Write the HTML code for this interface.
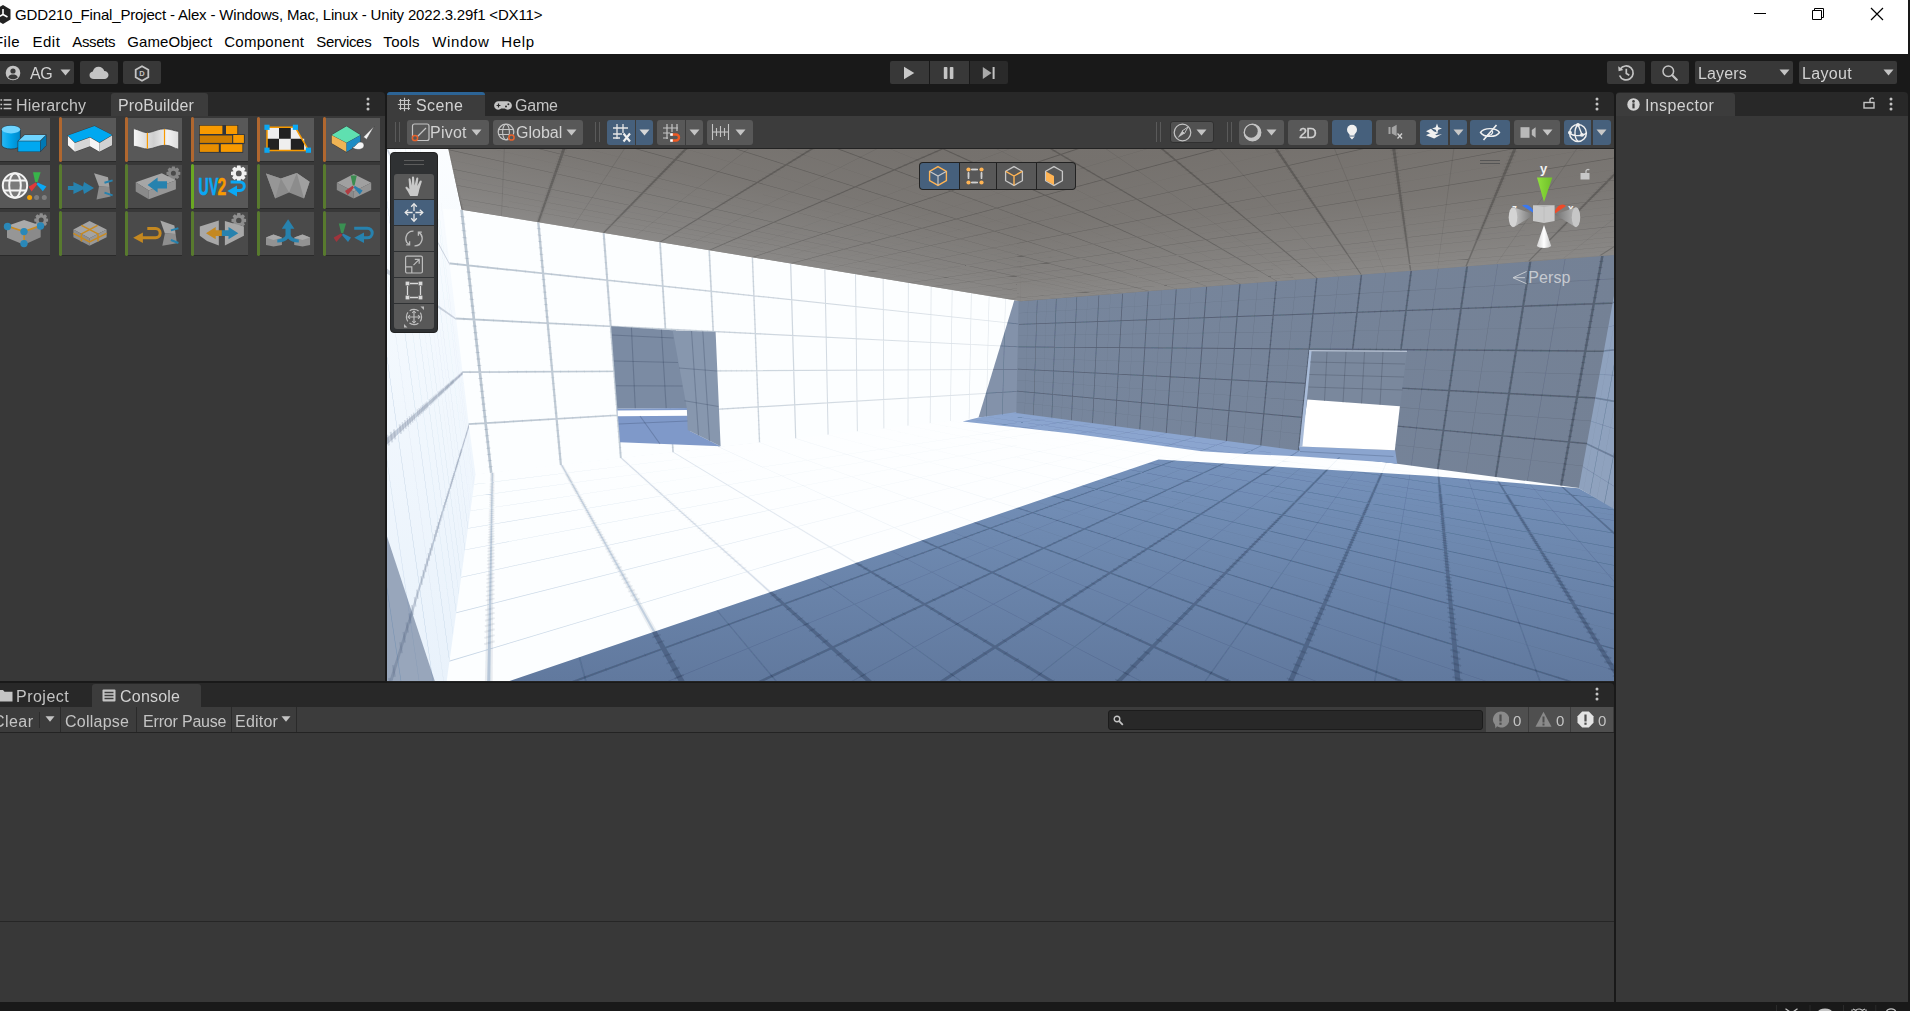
<!DOCTYPE html>
<html>
<head>
<meta charset="utf-8">
<title>Unity</title>
<style>
*{box-sizing:border-box;margin:0;padding:0}
html,body{width:1910px;height:1011px;overflow:hidden;background:#191919}
body{font-family:"Liberation Sans",sans-serif;font-size:15px;color:#d2d2d2;position:relative}
.abs{position:absolute}
.t{position:absolute;white-space:nowrap;line-height:1}
#titlebar{left:0;top:0;width:1908px;height:54px;background:#fff}
.tt{color:#000;font-size:15px}
.btn{position:absolute;background:#383838;border-radius:2px}
.tabrow{position:absolute;background:#282828}
.tab{position:absolute;background:#3c3c3c;border-radius:3px 3px 0 0}
.panel{position:absolute;background:#383838}
.sb{position:absolute;background:#585858;border-radius:3px;top:120px;height:25px}
.sb.on{background:#46607c}
.ut{color:#d2d2d2;font-size:15px;will-change:transform}
.pb{position:absolute;width:57px;height:43px;background:#585858}
.pb.off{background:#4c4c4c}
.pb i{position:absolute;left:0;top:0;width:3px;height:43px;background:#b0672f}
.pb.g i{background:#5d7a33}
.tool{position:absolute;left:4px;width:40px;height:25px;background:#585858}
#title{left:15.05px!important;top:6.90px!important;letter-spacing:-0.168px!important;font-size:15px!important}
#m0{left:-6.05px!important;top:34.20px!important;letter-spacing:0.507px!important;font-size:15px!important}
#m1{left:32.45px!important;top:34.20px!important;letter-spacing:0.510px!important;font-size:15px!important}
#m2{left:72.35px!important;top:34.20px!important;letter-spacing:-0.386px!important;font-size:15px!important}
#m3{left:127.35px!important;top:34.20px!important;letter-spacing:0.060px!important;font-size:15px!important}
#m4{left:224.15px!important;top:34.20px!important;letter-spacing:0.293px!important;font-size:15px!important}
#m5{left:316.35px!important;top:34.20px!important;letter-spacing:-0.316px!important;font-size:15px!important}
#m6{left:383.35px!important;top:34.20px!important;letter-spacing:0.314px!important;font-size:15px!important}
#m7{left:432.25px!important;top:34.20px!important;letter-spacing:0.623px!important;font-size:15px!important}
#m8{left:501.25px!important;top:34.20px!important;letter-spacing:0.685px!important;font-size:15px!important}
#ag{left:30.38px!important;top:65.86px!important;letter-spacing:-0.392px!important;font-size:16px!important}
#layers{left:1698.08px!important;top:65.96px!important;letter-spacing:0.135px!important;font-size:16px!important}
#layout{left:1801.98px!important;top:65.96px!important;letter-spacing:0.316px!important;font-size:16px!important}
#hier{left:16.48px!important;top:97.76px!important;letter-spacing:0.208px!important;font-size:16px!important}
#pbld{left:118.18px!important;top:97.76px!important;letter-spacing:0.114px!important;font-size:16px!important}
#scene{left:416.38px!important;top:97.76px!important;letter-spacing:0.353px!important;font-size:16px!important}
#game{left:514.68px!important;top:97.76px!important;letter-spacing:-0.185px!important;font-size:16px!important}
#insp{left:1644.98px!important;top:97.76px!important;letter-spacing:0.381px!important;font-size:16px!important}
#pivot{left:430.48px!important;top:125.46px!important;letter-spacing:0.232px!important;font-size:16px!important}
#global{left:516.48px!important;top:125.46px!important;letter-spacing:-0.002px!important;font-size:16px!important}
#twod{left:1299.48px!important;top:126.23px!important;letter-spacing:-0.908px!important;font-size:14.5px!important}
#proj{left:16.28px!important;top:688.66px!important;letter-spacing:0.492px!important;font-size:16px!important}
#cons{left:120.18px!important;top:688.66px!important;letter-spacing:0.220px!important;font-size:16px!important}
#clear{left:-7.12px!important;top:713.76px!important;letter-spacing:0.441px!important;font-size:16px!important}
#coll{left:65.28px!important;top:713.76px!important;letter-spacing:0.247px!important;font-size:16px!important}
#errp{left:142.98px!important;top:713.76px!important;letter-spacing:-0.185px!important;font-size:16px!important}
#edit{left:235.18px!important;top:713.76px!important;letter-spacing:0.207px!important;font-size:16px!important}
#persp{left:1528.18px!important;top:269.76px!important;letter-spacing:0.109px!important;font-size:16px!important}
</style>
</head>
<body>
<!-- TITLE + MENU -->
<div id="titlebar" class="abs"></div>
<div id="chrome-text">
<!-- unity logo (cut off at left) -->
<svg class="abs" style="left:-6px;top:4px" width="18" height="22" viewBox="0 0 18 22"><path d="M9 1 L16.5 5.5 L16.5 15.5 L9 20 L1.5 15.5 L1.5 5.5 Z" fill="#222"/><path d="M9 10.5 L9 5 M9 10.5 L13.5 13 M9 10.5 L4.5 13" stroke="#fff" stroke-width="1.6" fill="none"/></svg>
<span class="t tt" id="title" style="left:16px;top:7px">GDD210_Final_Project - Alex - Windows, Mac, Linux - Unity 2022.3.29f1 &lt;DX11&gt;</span>
<span class="t tt" style="left:-7px;top:34px" id="m0">File</span>
<span class="t tt" style="left:33px;top:34px" id="m1">Edit</span>
<span class="t tt" style="left:73px;top:34px" id="m2">Assets</span>
<span class="t tt" style="left:128px;top:34px" id="m3">GameObject</span>
<span class="t tt" style="left:225px;top:34px" id="m4">Component</span>
<span class="t tt" style="left:317px;top:34px" id="m5">Services</span>
<span class="t tt" style="left:384px;top:34px" id="m6">Tools</span>
<span class="t tt" style="left:433px;top:34px" id="m7">Window</span>
<span class="t tt" style="left:502px;top:34px" id="m8">Help</span>
<!-- window controls -->
<svg class="abs" style="left:1740px;top:0" width="168" height="30" viewBox="0 0 168 30">
<path d="M14 13.5 H26" stroke="#000" stroke-width="1"/>
<path d="M72.5 10.5 H81.5 V19.5 H72.5 Z M74.5 10.5 V8.5 H83.5 V17.5 H81.5" stroke="#000" stroke-width="1" fill="none"/>
<path d="M131 8 L143 20 M143 8 L131 20" stroke="#000" stroke-width="1.2"/>
</svg>
</div>
<!-- MAIN TOOLBAR -->
<div id="toolbar">
<div class="btn" style="left:-4px;top:61px;width:78px;height:23px"></div>
<svg class="abs" style="left:5px;top:65px" width="16" height="16" viewBox="0 0 16 16"><circle cx="8" cy="8" r="7.3" fill="#c4c4c4"/><circle cx="8" cy="6" r="2.6" fill="#383838"/><path d="M3.2 12.2 C4.2 10 6 9.6 8 9.6 C10 9.6 11.8 10 12.8 12.2 C11.5 13.6 9.8 14.2 8 14.2 C6.2 14.2 4.5 13.6 3.2 12.2Z" fill="#383838"/></svg>
<span class="t ut" style="left:31px;top:65px" id="ag">AG</span>
<svg class="abs" style="left:60px;top:69px" width="11" height="7" viewBox="0 0 11 7"><path d="M0.5 0.5 H10.5 L5.5 6.5Z" fill="#c4c4c4"/></svg>
<div class="btn" style="left:80px;top:61px;width:38px;height:23px"></div>
<svg class="abs" style="left:89px;top:66px" width="20" height="14" viewBox="0 0 20 14"><path d="M5 13 C2.2 13 0.5 11.3 0.5 9.2 C0.5 7.3 1.9 5.8 3.8 5.6 C4.3 2.7 6.7 0.7 9.6 0.7 C12.3 0.7 14.6 2.5 15.3 5 C17.7 5.1 19.5 6.8 19.5 9 C19.5 11.2 17.7 13 15.4 13 Z" fill="#c4c4c4"/></svg>
<div class="btn" style="left:123px;top:61px;width:38px;height:23px"></div>
<svg class="abs" style="left:134px;top:65px" width="16" height="17" viewBox="0 0 16 17"><path d="M8 1.2 L14.3 4.8 V12.2 L8 15.8 L1.7 12.2 V4.8 Z" fill="none" stroke="#c4c4c4" stroke-width="1.8"/><text x="8" y="11.2" font-size="7.5" font-weight="bold" text-anchor="middle" fill="#c4c4c4" font-family="Liberation Sans">D</text></svg>
<!-- play controls -->
<div class="btn" style="left:890px;top:61px;width:39px;height:23px;background:#383838;border-radius:2px 0 0 2px"></div>
<div class="btn" style="left:930px;top:61px;width:39px;height:23px;background:#383838;border-radius:0"></div>
<div class="btn" style="left:970px;top:61px;width:38px;height:23px;background:#2a2a2a;border-radius:0 2px 2px 0"></div>
<svg class="abs" style="left:903px;top:66px" width="12" height="14" viewBox="0 0 12 14"><path d="M1 0.8 L11.3 7 L1 13.2Z" fill="#c8c8c8"/></svg>
<svg class="abs" style="left:943px;top:66px" width="12" height="14" viewBox="0 0 12 14"><rect x="0.8" y="1" width="3.6" height="12" rx="0.8" fill="#c4c4c4"/><rect x="6.8" y="1" width="3.6" height="12" rx="0.8" fill="#c4c4c4"/></svg>
<svg class="abs" style="left:982px;top:66px" width="14" height="14" viewBox="0 0 14 14"><path d="M0.8 1 L9.6 7 L0.8 13Z" fill="#a8a8a8"/><rect x="10.6" y="1" width="2" height="12" fill="#c4c4c4"/></svg>
<!-- right side -->
<div class="btn" style="left:1607px;top:61px;width:38px;height:23px"></div>
<svg class="abs" style="left:1617px;top:64px" width="18" height="18" viewBox="0 0 18 18"><path d="M3.2 5.2 A7 7 0 1 1 2.6 11.5" fill="none" stroke="#c4c4c4" stroke-width="1.7"/><path d="M1.2 2.2 L1.6 7.2 L6.4 6 Z" fill="#c4c4c4"/><path d="M9.3 4.8 V9.5 L12.3 11.3" fill="none" stroke="#c4c4c4" stroke-width="1.7"/></svg>
<div class="btn" style="left:1651px;top:61px;width:38px;height:23px"></div>
<svg class="abs" style="left:1661px;top:64px" width="18" height="18" viewBox="0 0 18 18"><circle cx="7.3" cy="7.3" r="5.3" fill="none" stroke="#c4c4c4" stroke-width="1.5"/><path d="M11.3 11.3 L15.8 15.8" stroke="#c4c4c4" stroke-width="2.2" stroke-linecap="round"/></svg>
<div class="btn" style="left:1695px;top:61px;width:98px;height:23px"></div>
<span class="t ut" style="left:1699px;top:65px" id="layers">Layers</span>
<svg class="abs" style="left:1779px;top:69px" width="11" height="7" viewBox="0 0 11 7"><path d="M0.5 0.5 H10.5 L5.5 6.5Z" fill="#c4c4c4"/></svg>
<div class="btn" style="left:1799px;top:61px;width:98px;height:23px"></div>
<span class="t ut" style="left:1803px;top:65px" id="layout">Layout</span>
<svg class="abs" style="left:1883px;top:69px" width="11" height="7" viewBox="0 0 11 7"><path d="M0.5 0.5 H10.5 L5.5 6.5Z" fill="#c4c4c4"/></svg>
</div>
<!-- LEFT DOCK -->
<div id="leftdock">
<div class="tabrow" style="left:0;top:92px;width:385px;height:24px;border-radius:0 4px 0 0"></div>
<div class="panel" style="left:0;top:116px;width:385px;height:565px"></div>
<div class="tab" style="left:111px;top:93px;width:97px;height:23px"></div>
<svg class="abs" style="left:0px;top:98px" width="13" height="12" viewBox="0 0 13 12"><path d="M0.4 2H2.1 M3.6 2H11.4 M0.4 6.4H2.1 M3.6 6.4H11.4 M0.4 10.6H2.1 M3.6 10.6H11.4" stroke="#c4c4c4" stroke-width="1.5"/></svg>
<span class="t ut" style="left:17px;top:97px;color:#c4c4c4" id="hier">Hierarchy</span>
<span class="t ut" style="left:119px;top:97px" id="pbld">ProBuilder</span>
<svg class="abs" style="left:366px;top:97px" width="4" height="14" viewBox="0 0 4 14"><circle cx="2" cy="2" r="1.5" fill="#c4c4c4"/><circle cx="2" cy="7" r="1.5" fill="#c4c4c4"/><circle cx="2" cy="12" r="1.5" fill="#c4c4c4"/></svg>
<div id="pbicons"><div class="abs" style="left:-7px;top:118px;width:57px;height:43px;background:#585858;box-shadow:0 1px 0 #2a2a2a"></div>
<div class="abs" style="left:59px;top:118px;width:57px;height:43px;background:#585858;box-shadow:0 1px 0 #2a2a2a"></div>
<div class="abs" style="left:59px;top:117px;width:3px;height:45px;background:#b0672f;border-radius:1.5px"></div>
<div class="abs" style="left:125px;top:118px;width:57px;height:43px;background:#585858;box-shadow:0 1px 0 #2a2a2a"></div>
<div class="abs" style="left:125px;top:117px;width:3px;height:45px;background:#b0672f;border-radius:1.5px"></div>
<div class="abs" style="left:191px;top:118px;width:57px;height:43px;background:#585858;box-shadow:0 1px 0 #2a2a2a"></div>
<div class="abs" style="left:191px;top:117px;width:3px;height:45px;background:#b0672f;border-radius:1.5px"></div>
<div class="abs" style="left:257px;top:118px;width:57px;height:43px;background:#585858;box-shadow:0 1px 0 #2a2a2a"></div>
<div class="abs" style="left:257px;top:117px;width:3px;height:45px;background:#b0672f;border-radius:1.5px"></div>
<div class="abs" style="left:323px;top:118px;width:57px;height:43px;background:#585858;box-shadow:0 1px 0 #2a2a2a"></div>
<div class="abs" style="left:323px;top:117px;width:3px;height:45px;background:#b0672f;border-radius:1.5px"></div>
<div class="abs" style="left:-7px;top:165px;width:57px;height:43px;background:#585858;box-shadow:0 1px 0 #2a2a2a"></div>
<div class="abs" style="left:59px;top:165px;width:57px;height:43px;background:#4a4a4a;box-shadow:0 1px 0 #2a2a2a"></div>
<div class="abs" style="left:59px;top:164px;width:3px;height:45px;background:#587a2e;border-radius:1.5px"></div>
<div class="abs" style="left:125px;top:165px;width:57px;height:43px;background:#4a4a4a;box-shadow:0 1px 0 #2a2a2a"></div>
<div class="abs" style="left:125px;top:164px;width:3px;height:45px;background:#587a2e;border-radius:1.5px"></div>
<div class="abs" style="left:191px;top:165px;width:57px;height:43px;background:#585858;box-shadow:0 1px 0 #2a2a2a"></div>
<div class="abs" style="left:191px;top:164px;width:3px;height:45px;background:#6aa822;border-radius:1.5px"></div>
<div class="abs" style="left:257px;top:165px;width:57px;height:43px;background:#4a4a4a;box-shadow:0 1px 0 #2a2a2a"></div>
<div class="abs" style="left:257px;top:164px;width:3px;height:45px;background:#587a2e;border-radius:1.5px"></div>
<div class="abs" style="left:323px;top:165px;width:57px;height:43px;background:#4a4a4a;box-shadow:0 1px 0 #2a2a2a"></div>
<div class="abs" style="left:323px;top:164px;width:3px;height:45px;background:#587a2e;border-radius:1.5px"></div>
<div class="abs" style="left:-7px;top:212px;width:57px;height:43px;background:#4a4a4a;box-shadow:0 1px 0 #2a2a2a"></div>
<div class="abs" style="left:59px;top:212px;width:57px;height:43px;background:#4a4a4a;box-shadow:0 1px 0 #2a2a2a"></div>
<div class="abs" style="left:59px;top:211px;width:3px;height:45px;background:#587a2e;border-radius:1.5px"></div>
<div class="abs" style="left:125px;top:212px;width:57px;height:43px;background:#4a4a4a;box-shadow:0 1px 0 #2a2a2a"></div>
<div class="abs" style="left:125px;top:211px;width:3px;height:45px;background:#587a2e;border-radius:1.5px"></div>
<div class="abs" style="left:191px;top:212px;width:57px;height:43px;background:#4a4a4a;box-shadow:0 1px 0 #2a2a2a"></div>
<div class="abs" style="left:191px;top:211px;width:3px;height:45px;background:#587a2e;border-radius:1.5px"></div>
<div class="abs" style="left:257px;top:212px;width:57px;height:43px;background:#4a4a4a;box-shadow:0 1px 0 #2a2a2a"></div>
<div class="abs" style="left:257px;top:211px;width:3px;height:45px;background:#587a2e;border-radius:1.5px"></div>
<div class="abs" style="left:323px;top:212px;width:57px;height:43px;background:#4a4a4a;box-shadow:0 1px 0 #2a2a2a"></div>
<div class="abs" style="left:323px;top:211px;width:3px;height:45px;background:#587a2e;border-radius:1.5px"></div>
<svg class="abs" style="left:0;top:116px" width="385" height="144" viewBox="0 116 385 144"><defs>
<linearGradient id="cyl" x1="0" x2="1"><stop offset="0" stop-color="#2bb8f4"/><stop offset="0.5" stop-color="#00a4ea"/><stop offset="1" stop-color="#0086c8"/></linearGradient>
<linearGradient id="wav" x1="0" x2="1"><stop offset="0" stop-color="#f6f6f6"/><stop offset="0.45" stop-color="#cfcfcf"/><stop offset="0.75" stop-color="#f2f2f2"/><stop offset="1" stop-color="#dcdcdc"/></linearGradient>
</defs>
<path d="M1.6 129.6V145A9.3 4 0 0 0 20.4 145V129.6A9.3 4 0 0 0 1.6 129.6Z" fill="url(#cyl)" stroke="#2c3a44" stroke-width="0.8"/>
<ellipse cx="11" cy="129.6" rx="9.2" ry="3.9" fill="#6fd4ff"/>
<path d="M17.6 141.1L24.4 134.4H46.6V145.4L40.4 152H17.6Z" fill="#2c3a44"/>
<path d="M18.2 141.3H40V151.5H18.2Z" fill="#00a8f0"/><path d="M18.6 140.8L24.7 134.9H45.8L40 140.8Z" fill="#6fd4ff"/><path d="M40.5 141.2L46.2 135.3V145.2L40.5 151.2Z" fill="#0078b4"/>
<path d="M67.5 135.3L94.5 125.6L112.6 134.9V145.5L99.5 152.3L90 146.8L74.9 152.3L67.5 145.5Z" fill="#3a3a3a"/>
<path d="M67.9 135.6L94.5 126.1L112.1 135.1L99.5 142.6L90 137.1L74.9 142.6Z" fill="#00a8f0"/>
<path d="M67.9 135.9L74.9 142.9V151.7L67.9 145.2Z" fill="#f6f6f6"/><path d="M74.9 142.9L90 137.4V146.2L74.9 151.7Z" fill="#d6d6d6"/><path d="M90 137.4L99.5 142.9V151.7L90 146.2Z" fill="#f6f6f6"/><path d="M99.5 142.9L112.1 135.4V145.2L99.5 151.7Z" fill="#d2d2d2"/>
<path d="M133.4 128.6C140 130 143 133 148 132.6C154 132 158 128.6 165 128.8C171 129 174 131 178.7 131.4V149.2C174 148.6 171 145 165 145.2C158 145.4 154 148.6 148 149C143 149.2 139 146.4 133.4 146.2Z" fill="url(#wav)" stroke="#3a3a3a" stroke-width="0.7"/>
<path d="M147.4 132.8V148.8M164.5 129V145" stroke="#f89a00" stroke-width="1.2"/>
<path d="M199 125H238.2V134.3H244.8V143.7H243.2V152.7H199Z" fill="#30343a"/>
<rect x="199.8" y="125.7" width="22.6" height="8.3" fill="#f89a00"/>
<rect x="226" y="125.7" width="11.3" height="8.3" fill="#f89a00"/>
<rect x="199.8" y="135.5" width="32.3" height="7.4" fill="#cf7e00"/>
<rect x="233.2" y="135" width="10.7" height="7.9" fill="#f89a00"/>
<rect x="199.8" y="144.2" width="19.0" height="7.7" fill="#e88e00"/>
<rect x="220.8" y="144.2" width="21.6" height="7.7" fill="#f89a00"/>
<path d="M267 127.3H295.2L308.6 150.4H267Z" fill="#efefef"/>
<path d="M279 127.3H290.8V138.8H279Z M267 138.8H279V150.4H267Z M290.8 138.8H301.9L304.5 143.3V150.4H290.8Z" fill="#222"/>
<path d="M301.9 138.8L308.6 150.4H304.2V138.8Z" fill="#efefef"/>
<path d="M267 127.3H295.2L308.6 150.4H267Z" fill="none" stroke="#f89a00" stroke-width="1.5"/>
<rect x="264.4" y="124.7" width="5.2" height="5.2" fill="#0aa8f4"/>
<rect x="292.79999999999995" y="124.7" width="5.2" height="5.2" fill="#0aa8f4"/>
<rect x="264.4" y="147.6" width="5.2" height="5.2" fill="#0aa8f4"/>
<rect x="305.79999999999995" y="147.6" width="5.2" height="5.2" fill="#0aa8f4"/>
<path d="M331.2 134.8L346.5 125.8L360.9 134.8V143.8L346.5 152.5L331.2 143.5Z" fill="#3a3a3a"/>
<path d="M331.7 135L346.5 126.3L360.4 135L346.5 142.7Z" fill="#5fe0b0"/><path d="M331.7 135.3L346.5 143V151.9L331.7 143.2Z" fill="#f0b454"/><path d="M346.5 143L360.4 135.3V143.5L346.5 151.9Z" fill="#1e8cc4"/>
<path d="M374.4 126L363.4 137L366.6 139.4Z" fill="#f4f4f4" stroke="#3a3a3a" stroke-width="0.5"/><path d="M352 147.6C355 147.4 356 144 358.6 142.6C361.4 141.2 364.4 143 364 146C363.5 149.6 357 150.8 352 147.6Z" fill="#f6f6f6" stroke="#3a3a3a" stroke-width="0.5"/>
<circle cx="15" cy="185.5" r="12.6" fill="#7a7a7a"/>
<g fill="none" stroke="#f4f4f4" stroke-width="2"><circle cx="15" cy="185.5" r="12.2"/><ellipse cx="15" cy="185.5" rx="5.8" ry="12.2"/><path d="M3.8 180.5H26.2M3.8 190.5H26.2"/></g>
<path d="M33 172.2H40.6L37.6 182H35.2Z" fill="#38b44a"/><path d="M35.6 182.4L28.6 186.8L31.6 191.6L37.2 184.2Z" fill="#e03a3a"/><path d="M37.6 182.6L46.4 186.6L42.8 191.2L36.6 184.2Z" fill="#0aa8f4"/>
<circle cx="29.6" cy="197.4" r="2.5" fill="#f4a000"/><circle cx="36.6" cy="197.4" r="2.5" fill="#7e7e7e"/><circle cx="44.3" cy="197.4" r="2.5" fill="#7e7e7e"/>
<path d="M67.9 186H73.4V181.9L83 186.6L84 182L94 188L84 194L83 189.4L73.4 194V190H67.9Z" fill="#2782ae"/>
<path d="M94 173.3L108 177.3L109.4 187L99 186.4Z" fill="#a2a2a2"/><path d="M99 186.4L109.4 187L110.6 196.4L96.5 199.4Z" fill="#8c8c8c"/>
<path d="M104.5 182.8L112.6 180.4M104.5 192.6L112.6 195.4" stroke="#2782ae" stroke-width="2"/>
<path d="M180.3 171.9 L180.3 174.7 L178.1 175.2 L178.1 175.2 L179.2 177.2 L177.3 179.1 L175.3 178.0 L175.3 178.0 L174.8 180.2 L172.0 180.2 L171.5 178.0 L171.5 178.0 L169.5 179.1 L167.6 177.2 L168.7 175.2 L168.7 175.2 L166.5 174.7 L166.5 171.9 L168.7 171.4 L168.7 171.4 L167.6 169.4 L169.5 167.5 L171.5 168.6 L171.5 168.6 L172.0 166.4 L174.8 166.4 L175.3 168.6 L175.3 168.6 L177.3 167.5 L179.2 169.4 L178.1 171.4 L178.1 171.4Z M175.9 173.3A2.5 2.5 0 1 0 170.9 173.3A2.5 2.5 0 1 0 175.9 173.3Z" fill="#868686" fill-rule="evenodd"/>
<path d="M135.7 182.3L161.8 173.3L175.9 180.3L148.8 190.4Z" fill="#a6a6a6"/><path d="M135.7 182.3L148.8 190.4V199.2L135.7 191.4Z" fill="#8a8a8a"/><path d="M148.8 190.4L175.9 180.3V189.2L148.8 199.2Z" fill="#969696"/>
<path d="M147.6 185L157.6 177.6V181.2H167V188.6H157.6V192.4Z" fill="#2782ae"/>
<path d="M246.6 171.8 L246.6 175.0 L244.1 175.6 L244.1 175.6 L245.5 177.8 L243.2 180.1 L241.0 178.7 L241.0 178.7 L240.4 181.2 L237.2 181.2 L236.6 178.7 L236.6 178.7 L234.4 180.1 L232.1 177.8 L233.5 175.6 L233.5 175.6 L231.0 175.0 L231.0 171.8 L233.5 171.2 L233.5 171.2 L232.1 169.0 L234.4 166.7 L236.6 168.1 L236.6 168.1 L237.2 165.6 L240.4 165.6 L241.0 168.1 L241.0 168.1 L243.2 166.7 L245.5 169.0 L244.1 171.2 L244.1 171.2Z M241.7 173.4A2.9 2.9 0 1 0 235.9 173.4A2.9 2.9 0 1 0 241.7 173.4Z" fill="#f2f2f2" fill-rule="evenodd"/>
<text transform="translate(198.6 195) scale(0.62 1)" font-family="Liberation Sans" font-weight="bold" font-size="23" fill="#0aa8f4" stroke="#0aa8f4" stroke-width="0.7">UV</text>
<text transform="translate(217.6 195) scale(0.68 1)" font-family="Liberation Sans" font-weight="bold" font-size="23" fill="#f89a00" stroke="#f89a00" stroke-width="0.5">2</text>
<path d="M230.6 181.9H240A4.2 4.2 0 0 1 240 190.4H236" fill="none" stroke="#0aa8f4" stroke-width="3"/><path d="M227.4 191L237 185.4V196.4Z" fill="#0aa8f4"/>
<path d="M266 173.5L280.9 178.6L296.8 173L309.6 181.7L304 198.6L289.1 192.4L275.2 198.6Z" fill="#8c8c8c"/>
<path d="M280.9 178.6L296.8 173L289.1 192.4Z" fill="#9c9c9c"/><path d="M266 173.5L280.9 178.6L275.2 198.6Z" fill="#969696"/><path d="M296.8 173L309.6 181.7L304 198.6Z" fill="#a0a0a0"/>
<path d="M336.8 182.7L353.7 174L371.2 182.7L353.7 191.4Z" fill="#a0a0a0"/><path d="M336.8 182.7L353.7 191.4V198.6L336.8 189.9Z" fill="#8a8a8a"/><path d="M353.7 191.4L371.2 182.7V189.9L353.7 198.6Z" fill="#949494"/>
<path d="M350.6 175.6H356.8L354.6 185.4H352.8Z" fill="#3a8c50"/><path d="M352.6 185.8L345 191L347.8 195L354 187.4Z" fill="#b03c42"/><path d="M354.8 185.8L362.6 190.4L359.8 194.4L353.6 187.4Z" fill="#2a7eac"/>
<path d="M48.1 218.7 L48.1 221.5 L45.9 222.0 L45.9 222.0 L47.0 224.0 L45.1 225.9 L43.1 224.8 L43.1 224.8 L42.6 227.0 L39.8 227.0 L39.3 224.8 L39.3 224.8 L37.3 225.9 L35.4 224.0 L36.5 222.0 L36.5 222.0 L34.3 221.5 L34.3 218.7 L36.5 218.2 L36.5 218.2 L35.4 216.2 L37.3 214.3 L39.3 215.4 L39.3 215.4 L39.8 213.2 L42.6 213.2 L43.1 215.4 L43.1 215.4 L45.1 214.3 L47.0 216.2 L45.9 218.2 L45.9 218.2Z M43.7 220.1A2.5 2.5 0 1 0 38.7 220.1A2.5 2.5 0 1 0 43.7 220.1Z" fill="#8e8e8e" fill-rule="evenodd"/>
<path d="M7 226.1L24.1 220.1L40.7 225.6L24.1 231.6Z" fill="#aaaaaa"/><path d="M7 226.1L24.1 231.6V244.7L7 237.7Z" fill="#969696"/><path d="M24.1 231.6L40.7 225.6V237.2L24.1 244.7Z" fill="#8a8a8a"/>
<path d="M7 226.1L24.1 231.6L40.7 225.6M24.1 231.6V244" fill="none" stroke="#c88a20" stroke-width="1.6"/>
<circle cx="7.5" cy="226.5" r="3.7" fill="#2a88b8"/>
<circle cx="24" cy="231.6" r="3.7" fill="#2a88b8"/>
<circle cx="40.5" cy="226" r="3.7" fill="#2a88b8"/>
<circle cx="24" cy="243.6" r="3.7" fill="#2a88b8"/>
<path d="M73.4 229.6L89.5 221.1L106.6 229.6L89.5 238.2Z" fill="#a4a4a4"/><path d="M73.4 229.6L89.5 238.2V245.7L73.4 237.2Z" fill="#8e8e8e"/><path d="M89.5 238.2L106.6 229.6V237.2L89.5 245.7Z" fill="#989898"/>
<path d="M81.4 225.3L98 233.9V241.5M97.6 225.3L81.4 233.9V241.5M73.4 233.4L89.5 242L106.6 233.4" fill="none" stroke="#c88a20" stroke-width="1.5"/>
<path d="M147.3 228.6H155.6A4.5 4.5 0 0 1 155.6 237.7H141" fill="none" stroke="#c48820" stroke-width="3"/><path d="M133.2 237.7L142.9 232.4V243Z" fill="#c48820"/>
<path d="M160.3 220.6L174.4 225.6L175.6 234L164.9 233.6Z" fill="#a6a6a6"/><path d="M164.9 233.6L175.6 234L176.9 243.2L162.3 245.7Z" fill="#8e8e8e"/>
<path d="M170.9 230.4L178.4 228.2M170.9 240L178.4 243" stroke="#2782ae" stroke-width="2"/>
<path d="M246.1 218.9 L246.1 221.9 L243.7 222.4 L243.7 222.5 L245.0 224.5 L242.9 226.6 L240.9 225.3 L240.8 225.3 L240.3 227.7 L237.3 227.7 L236.8 225.3 L236.7 225.3 L234.7 226.6 L232.6 224.5 L233.9 222.5 L233.9 222.4 L231.5 221.9 L231.5 218.9 L233.9 218.4 L233.9 218.3 L232.6 216.3 L234.7 214.2 L236.7 215.5 L236.8 215.5 L237.3 213.1 L240.3 213.1 L240.8 215.5 L240.9 215.5 L242.9 214.2 L245.0 216.3 L243.7 218.3 L243.7 218.4Z M241.5 220.4A2.7 2.7 0 1 0 236.1 220.4A2.7 2.7 0 1 0 241.5 220.4Z" fill="#8e8e8e" fill-rule="evenodd"/>
<path d="M199.8 226.5L218.8 220.4V245.5L207 240.9L199.8 235.8Z" fill="#a8a8a8"/><path d="M224.9 220.9L243.9 226.5V235.8L224.9 245.5Z" fill="#a8a8a8"/>
<path d="M206 233.2L215.7 227V230.3H221.9V236H215.7V239.2Z" fill="#c48820"/><path d="M238.3 233.2L228.5 227V230.3H221.9V236H228.5V239.2Z" fill="#2782ae"/>
<path d="M266 237.5L273.5 234.5L281.9 237.5V245L273.5 246.5L266 245Z" fill="#929292"/><path d="M266 237.5L273.5 234.5L281.9 237.5L273.5 240Z" fill="#a8a8a8"/>
<path d="M294.2 237.5L302.5 234.5L310.1 237.5V245L302.5 246.5L294.2 245Z" fill="#929292"/><path d="M294.2 237.5L302.5 234.5L310.1 237.5L302.5 240Z" fill="#a8a8a8"/>
<path d="M288.1 219.3L294.4 228.8H290.7V235C291.5 238 295 239 298.8 239.4V242.6C294 242.4 290 241 288.1 238.4C286.2 241 282 242.4 277.3 242.6V239.4C281 239 284.8 238 285.5 235V228.8H281.8Z" fill="#2782ae"/>
<path d="M338.8 223.4H346L343.2 233H341.2Z" fill="#3a9052"/><path d="M341 233.4L333.6 237.6L336.4 242L342.4 235Z" fill="#a0343c"/><path d="M343 233.4L351 237.6L348 242L342 235Z" fill="#2a82b0"/>
<path d="M354.2 228.2H367.4A4.8 4.8 0 0 1 367.4 237.8H362" fill="none" stroke="#2782ae" stroke-width="3"/><path d="M354.2 237.8L364 232.4V243Z" fill="#2782ae"/></svg></div>
</div>
<!-- SCENE DOCK -->
<div id="scenedock">
<div class="tabrow" style="left:387px;top:92px;width:1227px;height:24px;border-radius:4px 4px 0 0"></div>
<div class="abs" style="left:387px;top:116px;width:1227px;height:33px;background:#3c3c3c;border-bottom:1px solid #232323"></div>
<div class="abs" style="left:387px;top:149px;width:1227px;height:533px;background:#232323"></div>
<svg class="abs" style="left:387px;top:149px" width="1227" height="532" viewBox="387 149 1227 532">
<defs>
<linearGradient id="gceil" x1="0" y1="149" x2="0" y2="300" gradientUnits="userSpaceOnUse"><stop offset="0" stop-color="#75716d"/><stop offset="0.5" stop-color="#7d7b7a"/><stop offset="1" stop-color="#8a8a8a"/></linearGradient>
<linearGradient id="gfloor" x1="0" y1="460" x2="0" y2="681" gradientUnits="userSpaceOnUse"><stop offset="0" stop-color="#7692bb"/><stop offset="0.35" stop-color="#6e89b0"/><stop offset="1" stop-color="#61799e"/></linearGradient>
<linearGradient id="gback" x1="1020" y1="0" x2="1614" y2="0" gradientUnits="userSpaceOnUse"><stop offset="0" stop-color="#77869d"/><stop offset="1" stop-color="#748195"/></linearGradient>
<linearGradient id="gwfade" x1="470" y1="0" x2="1020" y2="0" gradientUnits="userSpaceOnUse"><stop offset="0" stop-color="#fcfeff" stop-opacity="0"/><stop offset="0.35" stop-color="#fcfeff" stop-opacity="0.15"/><stop offset="1" stop-color="#fcfeff" stop-opacity="0.6"/></linearGradient>
<linearGradient id="gffade" x1="520" y1="690" x2="800" y2="440" gradientUnits="userSpaceOnUse"><stop offset="0" stop-color="#fdfeff" stop-opacity="0"/><stop offset="0.45" stop-color="#fdfeff" stop-opacity="0.2"/><stop offset="1" stop-color="#fdfeff" stop-opacity="0.72"/></linearGradient>
<linearGradient id="gglowL" x1="700" y1="248.7" x2="721.8" y2="115.5" gradientUnits="userSpaceOnUse"><stop offset="0" stop-color="#9c9c9c" stop-opacity="0.56"/><stop offset="0.15" stop-color="#9c9c9c" stop-opacity="0.42"/><stop offset="0.55" stop-color="#9c9c9c" stop-opacity="0.15"/><stop offset="1" stop-color="#9c9c9c" stop-opacity="0.03"/></linearGradient>
<linearGradient id="gglowR" x1="1300" y1="279.4" x2="1289.5" y2="144.8" gradientUnits="userSpaceOnUse"><stop offset="0" stop-color="#9c9c9c" stop-opacity="0.56"/><stop offset="0.15" stop-color="#9c9c9c" stop-opacity="0.42"/><stop offset="0.55" stop-color="#9c9c9c" stop-opacity="0.15"/><stop offset="1" stop-color="#9c9c9c" stop-opacity="0.03"/></linearGradient>
<linearGradient id="gnear" x1="0" y1="149" x2="0" y2="681" gradientUnits="userSpaceOnUse"><stop offset="0" stop-color="#fbfdff"/><stop offset="0.3" stop-color="#f4f9fe"/><stop offset="1" stop-color="#e9f2fb"/></linearGradient>
<filter id="soft" x="-2%" y="-2%" width="104%" height="104%"><feGaussianBlur stdDeviation="0.55"/></filter>
<clipPath id="cceil"><polygon points="448.3,149.0 1614.0,149.0 1614.0,254.9 1020.7,301.2 461.6,209.7"/></clipPath>
<clipPath id="cback"><polygon points="1019.4,301.7 1622.0,253.7 1578.8,488.2 1016.3,412.9"/></clipPath>
<clipPath id="cright"><polygon points="1622.0,253.7 1700.0,200.0 1700.0,560.0 1578.8,488.2"/></clipPath>
<clipPath id="cleft"><polygon points="443.0,209.0 461.6,209.7 1020.7,301.2 1017.2,413.4 491.2,472.9 475.5,474.6 469.0,426.0"/></clipPath>
<clipPath id="cfloor"><polygon points="446.7,681.0 475.5,474.6 491.2,472.9 1017.2,413.4 1578.8,488.2 1614.0,507.8 1614.0,681.0"/></clipPath>
<clipPath id="cnear"><polygon points="387.0,149.0 448.3,149.0 461.6,209.7 443.0,209.0 469.0,426.0 475.5,474.6 446.7,681.0 387.0,681.0"/></clipPath>
<clipPath id="cbig"><polygon points="509.6,681.0 1158.6,459.6 1427.5,475.8 1578.8,488.2 1614.0,507.8 1614.0,681.0"/></clipPath>
<clipPath id="cstrip"><polygon points="978.5,417.6 1017.2,413.4 1298.5,450.7 1299.3,446.5 1394.8,450.3 1396.5,463.6 1392.3,462.8 1301.8,456.5 1250.0,454.2 1201.3,451.3 1075.7,433.9 962.6,421.4"/></clipPath>
<clipPath id="clws"><polygon points="1014.3,300.3 1020.7,301.2 1017.2,413.4 978.5,417.6"/></clipPath>
</defs>
<rect x="387" y="149" width="1227" height="532" fill="#fcfeff"/>
<polygon points="387.0,149.0 448.3,149.0 461.6,209.7 443.0,209.0 469.0,426.0 475.5,474.6 446.7,681.0 387.0,681.0" fill="url(#gnear)" />
<polygon points="387.0,536.5 434.8,681.0 387.0,681.0" fill="#98a6bb" />
<g clip-path="url(#cnear)"><path filter="url(#soft)" d="M450.0 265.7 L356.5 95.3 L355.7 89.1 L449.8 263.8Z M456.7 320.3 L329.2 234.8 L327.9 226.5 L456.5 318.5Z M463.2 373.5 L330.5 497.3 L329.0 488.0 L463.0 371.7Z M469.5 425.1 L374.3 741.4 L373.0 733.5 L469.3 423.4Z" fill="#3d5070" fill-opacity="0.24"/></g>
<path clip-path="url(#cnear)" d="M462.6 371.2L463.0 374.4M462.3 371.5L462.7 374.7M462.0 371.8L462.4 375.0M461.7 372.0L462.1 375.3M461.4 372.3L461.8 375.6M461.0 372.6L461.4 375.9M460.7 372.8L461.1 376.2M460.0 373.4L460.4 376.8M459.7 373.7L460.1 377.2M459.3 374.0L459.7 377.5M458.9 374.3L459.4 377.9M458.6 374.6L459.0 378.2M458.2 375.0L458.6 378.6M457.8 375.3L458.2 379.0M457.0 376.0L457.4 379.7M456.6 376.3L457.0 380.1M456.1 376.7L456.6 380.5M455.7 377.1L456.2 380.9M455.2 377.4L455.7 381.4M454.8 377.8L455.3 381.8M454.3 378.2L454.8 382.2M469.0 423.5L469.3 426.6M468.7 424.2L469.1 427.3M468.5 425.0L468.9 428.1M468.2 425.8L468.6 428.9M468.0 426.5L468.4 429.7M467.7 427.3L468.1 430.6M467.5 428.2L467.9 431.4M467.0 429.9L467.4 433.2M466.7 430.7L467.1 434.1M466.4 431.6L466.8 435.0M466.1 432.5L466.5 436.0M465.8 433.5L466.2 437.0M465.5 434.4L466.0 437.9M465.2 435.4L465.7 438.9M464.6 437.4L465.0 441.0M464.3 438.4L464.7 442.1M463.9 439.5L464.4 443.2M463.6 440.6L464.0 444.3M463.2 441.7L463.7 445.5M462.9 442.8L463.4 446.7M462.5 444.0L463.0 447.9M461.8 446.4L462.2 450.4M461.4 447.7L461.9 451.7" stroke="#3d5070" stroke-opacity="0.16" stroke-width="0.5" fill="none"/>
<path clip-path="url(#cnear)" d="M453.3 379.0L453.9 383.2M452.8 379.5L453.4 383.6M452.3 379.9L452.8 384.1M451.8 380.4L452.3 384.6M451.2 380.8L451.8 385.2M450.7 381.3L451.2 385.7M450.1 381.8L450.7 386.2M448.9 382.8L449.5 387.4M448.3 383.3L448.9 388.0M447.6 383.9L448.2 388.6M447.0 384.4L447.6 389.2M446.3 385.0L446.9 389.8M445.6 385.6L446.2 390.5M444.9 386.2L445.5 391.2M443.4 387.5L444.0 392.6M442.6 388.1L443.2 393.3M441.7 388.8L442.4 394.1M440.9 389.6L441.6 394.9M440.0 390.3L440.7 395.7M439.1 391.0L439.8 396.6M438.2 391.8L438.9 397.5M436.2 393.5L437.0 399.3M435.2 394.4L436.0 400.3M434.1 395.3L434.9 401.3M433.0 396.2L433.8 402.4M431.9 397.2L432.7 403.5M430.7 398.2L431.5 404.6M429.4 399.2L430.3 405.8M461.0 449.0L461.5 453.0M460.5 450.3L461.1 454.4M460.1 451.6L460.6 455.8M459.7 453.0L460.2 457.2M459.2 454.4L459.8 458.7M458.3 457.4L458.9 461.8M457.8 458.9L458.4 463.4M457.3 460.5L457.9 465.0M456.8 462.1L457.4 466.7M456.3 463.8L456.9 468.4M455.7 465.5L456.3 470.2M455.2 467.3L455.8 472.1M454.0 471.0L454.6 475.9M453.4 473.0L454.1 477.9M452.8 475.0L453.4 480.0M452.1 477.0L452.8 482.1M451.5 479.1L452.1 484.3M450.8 481.3L451.5 486.6M450.1 483.6L450.8 489.0M448.6 488.4L449.3 493.9M447.8 490.9L448.5 496.6M447.0 493.5L447.7 499.3M446.1 496.2L446.9 502.1M445.2 499.0L446.0 505.0M444.3 501.9L445.1 508.0M443.4 505.0L444.2 511.1M441.4 511.4L442.2 517.7M440.3 514.8L441.1 521.3M439.2 518.3L440.1 524.9" stroke="#3d5070" stroke-opacity="0.16" stroke-width="1.0" fill="none"/>
<path clip-path="url(#cnear)" d="M426.8 401.5L427.7 408.3M425.4 402.7L426.3 409.6M423.9 403.9L424.8 411.0M422.4 405.2L423.3 412.4M420.8 406.6L421.8 413.9M419.1 408.0L420.1 415.5M417.3 409.4L418.4 417.2M413.6 412.6L414.7 420.7M411.5 414.3L412.7 422.6M409.4 416.1L410.6 424.6M407.2 418.0L408.4 426.8M404.8 420.0L406.0 429.0M402.3 422.1L403.6 431.4M438.0 522.0L438.9 528.8M436.8 525.8L437.7 532.8M435.5 529.9L436.5 536.9M434.2 534.1L435.2 541.3M431.4 543.1L432.4 550.6M429.9 547.9L430.9 555.6M428.3 553.0L429.4 560.9M426.6 558.3L427.7 566.4M424.8 563.9L426.0 572.2M423.0 569.9L424.2 578.4M421.0 576.1L422.2 584.8M416.7 589.7L418.0 598.9M414.4 597.1L415.8 606.6" stroke="#3d5070" stroke-opacity="0.16" stroke-width="1.5" fill="none"/>
<path clip-path="url(#cnear)" d="M399.6 424.4L401.0 433.9M393.9 429.3L395.3 439.3M390.7 431.9L392.2 442.3M387.3 434.8L388.9 445.5M383.7 437.8L385.3 448.9M411.9 605.0L413.3 614.8M409.3 613.4L410.7 623.4M406.5 622.4L408.0 632.7M403.5 632.0L405.0 642.6M400.2 642.2L401.9 653.2M393.0 665.1L394.8 676.9M389.0 678.0L390.9 690.1" stroke="#3d5070" stroke-opacity="0.16" stroke-width="2.0" fill="none"/>
<g clip-path="url(#cnear)"><path filter="url(#soft)" d="M438.7 196.8 L474.1 484.8 L474.1 484.9 L438.7 196.7Z M433.6 182.9 L472.4 496.9 L472.4 497.0 L433.5 182.7Z M427.4 166.1 L470.4 511.3 L470.4 511.5 L427.3 165.9Z M419.7 145.4 L468.0 528.6 L467.9 528.9 L419.6 145.1Z M410.0 119.3 L465.0 550.1 L464.9 550.4 L409.9 118.9Z M398.1 90.0 L461.2 577.2 L461.1 577.5 L397.9 89.5Z M387.3 91.4 L456.3 612.5 L456.2 613.0 L387.1 90.9Z M372.0 90.1 L449.5 660.6 L449.4 661.3 L371.7 89.5Z M349.6 92.3 L439.9 729.7 L439.8 730.8 L349.2 91.5Z M327.8 194.3 L410.0 739.2 L409.7 740.5 L327.2 193.7Z M328.0 614.5 L348.3 735.3 L347.6 737.3 L327.1 615.9Z" fill="#4a78a8" fill-opacity="0.42"/></g>
<g clip-path="url(#cnear)"><path filter="url(#soft)" d="M441.0 202.9 L474.8 479.5 L474.8 479.6 L441.0 202.8Z M436.3 190.1 L473.3 490.6 L473.3 490.7 L436.2 190.0Z M430.6 174.9 L471.4 503.8 L471.4 503.9 L430.6 174.7Z M423.7 156.3 L469.2 519.6 L469.2 519.7 L423.7 156.1Z M415.2 133.1 L466.5 538.8 L466.5 539.0 L415.1 132.9Z M404.2 103.4 L463.2 562.8 L463.2 563.1 L404.1 103.1Z M392.9 89.3 L458.9 593.7 L458.8 594.0 L392.8 89.0Z M380.3 90.7 L453.2 634.7 L453.1 635.1 L380.1 90.3Z M362.2 92.8 L445.2 691.9 L445.1 692.4 L362.0 92.3Z M333.4 91.4 L427.7 738.9 L427.5 739.7 L333.0 90.8Z M327.3 372.8 L385.4 740.1 L385.1 741.2 L326.8 372.9Z" fill="#4a78a8" fill-opacity="0.25"/></g>
<g clip-path="url(#cleft)"><path filter="url(#soft)" d="M368.7 194.5 L407.8 482.3 L410.8 482.0 L372.1 195.1Z M460.2 209.5 L489.9 473.0 L492.5 472.8 L463.0 209.9Z M537.1 222.1 L559.8 465.1 L562.0 464.9 L539.5 222.4Z M602.6 232.8 L619.9 458.3 L621.8 458.1 L604.7 233.1Z M659.1 242.0 L672.3 452.4 L673.9 452.2 L660.9 242.3Z M708.4 250.1 L718.2 447.2 L719.7 447.1 L710.0 250.3Z M751.7 257.2 L758.9 442.6 L760.2 442.5 L753.1 257.4Z M790.0 263.5 L795.1 438.5 L796.3 438.4 L791.3 263.7Z M824.3 269.1 L827.6 434.8 L828.6 434.7 L825.4 269.2Z M855.0 274.1 L856.9 431.5 L857.8 431.4 L856.0 274.2Z M882.7 278.6 L883.5 428.5 L884.3 428.4 L883.6 278.8Z M907.9 282.7 L907.6 425.8 L908.4 425.7 L908.7 282.9Z M930.8 286.5 L929.8 423.3 L930.5 423.2 L931.5 286.6Z M951.8 289.9 L950.1 421.0 L950.7 420.9 L952.5 290.0Z M971.0 293.1 L968.8 418.9 L969.4 418.8 L971.7 293.2Z M988.8 296.0 L986.0 416.9 L986.6 416.9 L989.4 296.1Z M1005.2 298.7 L1002.1 415.1 L1002.6 415.1 L1005.8 298.8Z M1020.5 301.2 L1017.0 413.4 L1017.4 413.4 L1020.9 301.2Z M378.8 256.8 L1020.0 324.6 L1020.0 323.8 L378.5 254.8Z M386.8 316.0 L1019.3 347.3 L1019.3 346.5 L386.5 314.0Z M394.6 373.4 L1018.6 369.7 L1018.6 368.9 L394.3 371.4Z M402.1 429.0 L1017.9 391.9 L1017.9 391.1 L401.8 427.2Z" fill="#4c6482" fill-opacity="0.36"/></g>
<path clip-path="url(#cleft)" d="M459.9 216.4L464.9 217.1M460.7 223.4L465.7 224.1M461.5 230.4L466.4 231.1M462.3 237.4L467.2 238.0M463.1 244.3L468.0 245.0M463.8 251.3L468.8 251.9M464.6 258.2L469.5 258.7M466.2 271.9L471.1 272.4M467.0 278.8L471.8 279.2M467.7 285.6L472.6 286.0M468.5 292.4L473.3 292.8M469.3 299.1L474.1 299.5M470.0 305.9L474.8 306.2M470.8 312.6L475.6 312.9M472.3 326.0L477.1 326.2M473.0 332.6L477.8 332.8M473.8 339.2L478.5 339.4M474.5 345.8L479.3 345.9M475.3 352.4L480.0 352.5M476.0 359.0L480.7 359.0M476.8 365.5L481.5 365.5M478.2 378.5L482.9 378.4M479.0 384.9L483.6 384.9M479.7 391.4L484.4 391.3M480.4 397.8L485.1 397.7M481.1 404.2L485.8 404.0M481.9 410.6L486.5 410.4M482.6 416.9L487.2 416.7M484.0 429.6L488.6 429.3M484.7 435.9L489.3 435.5M485.4 442.1L490.0 441.8M486.1 448.4L490.7 448.0M486.8 454.6L491.4 454.2M487.5 460.8L492.1 460.4M488.2 467.0L492.8 466.5M536.8 228.4L541.0 229.0M537.4 234.8L541.6 235.5M538.0 241.3L542.2 241.9M538.6 247.7L542.8 248.2M539.2 254.1L543.4 254.6M539.8 260.4L543.9 260.9M540.4 266.8L544.5 267.3M541.5 279.4L545.7 279.8M542.1 285.7L546.3 286.1M542.7 292.0L546.8 292.3M543.3 298.2L547.4 298.6M543.9 304.5L548.0 304.8M544.5 310.7L548.6 310.9M545.1 316.9L549.1 317.1" stroke="#4c6482" stroke-opacity="0.16" stroke-width="1.0" fill="none"/>
<path clip-path="url(#cleft)" d="M546.2 329.2L550.3 329.3M546.8 335.3L550.8 335.4M547.3 341.4L551.4 341.5M547.9 347.5L552.0 347.6M548.5 353.6L552.5 353.6M549.1 359.6L553.1 359.6M549.6 365.6L553.6 365.6M550.7 377.6L554.7 377.6M551.3 383.6L555.3 383.5M551.9 389.6L555.8 389.5M552.4 395.5L556.4 395.4M553.0 401.4L556.9 401.2M553.5 407.3L557.5 407.1M554.1 413.2L558.0 413.0M555.2 424.9L559.1 424.6M555.7 430.7L559.6 430.4M556.3 436.5L560.2 436.2M556.8 442.3L560.7 441.9M557.3 448.0L561.2 447.7M557.9 453.8L561.8 453.4M558.4 459.5L562.3 459.1M602.3 238.6L605.9 239.2M602.7 244.6L606.4 245.1M603.2 250.5L606.8 251.1M603.7 256.5L607.3 257.0M604.1 262.4L607.7 262.8M604.6 268.3L608.2 268.7M605.0 274.1L608.6 274.6M605.9 285.8L609.5 286.2M606.4 291.7L609.9 292.0M606.8 297.5L610.4 297.8M607.3 303.2L610.8 303.5M607.7 309.0L611.2 309.3M608.2 314.8L611.7 315.0M608.6 320.5L612.1 320.7M609.5 331.9L613.0 332.1M609.9 337.6L613.4 337.7M610.3 343.3L613.8 343.4M610.8 348.9L614.3 349.0M611.2 354.5L614.7 354.6M611.6 360.2L615.1 360.2M612.1 365.8L615.5 365.8M612.9 376.9L616.4 376.9M613.4 382.4L616.8 382.4M613.8 388.0L617.2 387.9M614.2 393.5L617.6 393.4M614.6 399.0L618.1 398.9M615.1 404.5L618.5 404.3M615.5 409.9L618.9 409.8M616.3 420.8L619.7 420.6M616.7 426.2L620.1 426.0M617.2 431.6L620.5 431.4M617.6 437.0L620.9 436.7M618.0 442.4L621.4 442.1M618.4 447.8L621.8 447.4M618.8 453.1L622.2 452.7M658.8 247.5L661.9 248.0M659.1 253.0L662.3 253.5M659.5 258.5L662.6 259.0M659.8 264.1L663.0 264.5M660.2 269.5L663.3 269.9M660.5 275.0L663.6 275.4M660.9 280.5L664.0 280.8M661.5 291.4L664.6 291.7M661.9 296.8L665.0 297.1M662.2 302.2L665.3 302.5M662.6 307.6L665.6 307.8M662.9 313.0L666.0 313.2M663.2 318.3L666.3 318.5M663.6 323.7L666.6 323.8M664.2 334.3L667.3 334.4M664.6 339.6L667.6 339.7M664.9 344.9L667.9 345.0M665.2 350.1L668.3 350.2M665.6 355.4L668.6 355.4M665.9 360.6L668.9 360.7M666.2 365.9L669.2 365.9M666.9 376.3L669.9 376.2M667.2 381.4L670.2 381.4M667.5 386.6L670.5 386.5M667.8 391.8L670.8 391.7M668.2 396.9L671.1 396.8M668.5 402.0L671.5 401.9M668.8 407.1L671.8 407.0M669.4 417.3L672.4 417.1M669.8 422.4L672.7 422.2M670.1 427.4L673.0 427.2M670.4 432.5L673.3 432.2M670.7 437.5L673.6 437.2M671.0 442.5L674.0 442.2M671.3 447.5L674.3 447.2M708.0 255.2L710.8 255.6M708.3 260.4L711.1 260.8M708.6 265.5L711.3 265.9M708.8 270.7L711.6 271.0M709.1 275.8L711.8 276.2M709.3 280.9L712.1 281.3M709.6 286.0L712.3 286.3M710.1 296.2L712.8 296.5M710.4 301.3L713.1 301.5M710.6 306.3L713.3 306.6M710.9 311.4L713.6 311.6M711.1 316.4L713.8 316.6M711.4 321.4L714.1 321.6M711.6 326.4L714.3 326.6M712.1 336.4L714.8 336.5M712.4 341.3L715.0 341.4M712.6 346.3L715.3 346.4M712.9 351.2L715.5 351.3M713.1 356.1L715.8 356.2M713.3 361.0L716.0 361.1M713.6 365.9L716.2 366.0M714.1 375.7L716.7 375.7M714.3 380.6L717.0 380.5M714.6 385.4L717.2 385.3M714.8 390.2L717.4 390.2M715.0 395.1L717.7 395.0M715.3 399.9L717.9 399.7M715.5 404.7L718.1 404.5M716.0 414.2L718.6 414.0M716.2 419.0L718.9 418.8M716.5 423.7L719.1 423.5M716.7 428.5L719.3 428.2M717.0 433.2L719.6 432.9M717.2 437.9L719.8 437.6M717.4 442.6L720.0 442.3M751.3 262.0L753.8 262.3M751.5 266.8L754.0 267.2M751.7 271.7L754.1 272.0M751.9 276.5L754.3 276.8M752.1 281.3L754.5 281.6M752.3 286.1L754.7 286.4M752.5 290.9L754.9 291.2M752.8 300.5L755.2 300.7M753.0 305.2L755.4 305.4M753.2 310.0L755.6 310.2M753.4 314.7L755.8 314.9M753.6 319.4L756.0 319.6M753.8 324.1L756.1 324.3M753.9 328.8L756.3 329.0M754.3 338.2L756.7 338.3M754.5 342.9L756.9 343.0M754.7 347.5L757.0 347.6M754.9 352.2L757.2 352.2M755.0 356.8L757.4 356.8M755.2 361.4L757.6 361.4M755.4 366.0L757.7 366.0M755.8 375.2L758.1 375.2M755.9 379.8L758.3 379.7M756.1 384.3L758.4 384.3M756.3 388.9L758.6 388.8M756.5 393.4L758.8 393.3M756.6 398.0L759.0 397.9M756.8 402.5L759.1 402.4M757.2 411.5L759.5 411.3M757.3 416.0L759.7 415.8M757.5 420.5L759.8 420.3M757.7 424.9L760.0 424.7M757.9 429.4L760.2 429.2M758.0 433.8L760.3 433.6M758.2 438.3L760.5 438.0M390.5 255.3L390.9 258.9M402.3 256.6L402.7 260.1M413.8 257.9L414.2 261.3M425.0 259.1L425.5 262.5M436.0 260.3L436.5 263.7M446.8 261.4L447.2 264.8M457.4 262.6L457.7 265.9M477.8 264.8L478.1 268.0M487.7 265.9L488.0 269.1M497.3 266.9L497.7 270.1M506.8 267.9L507.1 271.1M516.1 268.9L516.4 272.1M525.2 269.9L525.5 273.0M534.1 270.9L534.4 273.9M551.5 272.8L551.7 275.8M559.9 273.7L560.2 276.6M568.1 274.6L568.4 277.5M576.2 275.4L576.5 278.4M584.2 276.3L584.4 279.2M592.0 277.1L592.2 280.0M599.6 278.0L599.9 280.8M614.5 279.6L614.7 282.4M621.8 280.4L622.0 283.1M628.9 281.1L629.1 283.9M635.9 281.9L636.1 284.6M642.8 282.6L642.9 285.3M649.5 283.4L649.7 286.0M656.2 284.1L656.3 286.7M669.1 285.5L669.3 288.1M675.4 286.2L675.6 288.7M681.6 286.9L681.8 289.4M687.7 287.5L687.9 290.0M693.7 288.2L693.9 290.7M699.6 288.8L699.8 291.3M705.4 289.4L705.6 291.9M716.8 290.7L716.9 293.1M722.3 291.3L722.4 293.7M727.8 291.9L727.9 294.2M733.1 292.4L733.2 294.8M738.4 293.0L738.5 295.3M743.6 293.6L743.7 295.9M748.8 294.1L748.9 296.4M758.8 295.2L758.9 297.5M763.7 295.7L763.8 298.0M768.5 296.3L768.6 298.5M773.3 296.8L773.4 299.0M778.0 297.3L778.1 299.5M398.2 313.9L398.7 317.3M409.7 314.5L410.2 317.9M421.0 315.1L421.4 318.4M432.0 315.6L432.4 319.0M442.8 316.2L443.2 319.5M453.3 316.7L453.7 320.0M463.7 317.3L464.0 320.5M483.7 318.3L484.0 321.5M493.3 318.8L493.7 322.0M502.8 319.3L503.2 322.4M512.1 319.8L512.4 322.9M521.3 320.3L521.6 323.3M530.2 320.7L530.5 323.8M538.9 321.2L539.2 324.2M556.0 322.1L556.2 325.0M564.2 322.5L564.5 325.4M572.3 322.9L572.6 325.8M580.3 323.4L580.5 326.2M588.1 323.8L588.3 326.6M595.8 324.2L596.0 326.9M603.3 324.6L603.5 327.3M617.9 325.3L618.2 328.0M625.1 325.7L625.3 328.4M632.1 326.1L632.3 328.7M639.0 326.4L639.2 329.0M645.7 326.8L645.9 329.4M652.4 327.1L652.6 329.7M658.9 327.4L659.1 330.0M671.7 328.1L671.8 330.6M677.9 328.4L678.0 330.9M684.0 328.8L684.2 331.2M690.0 329.1L690.2 331.5M695.9 329.4L696.1 331.8M701.8 329.7L701.9 332.1M707.5 330.0L707.6 332.4M718.7 330.6L718.8 332.9M724.2 330.8L724.3 333.2M729.6 331.1L729.7 333.5M734.9 331.4L735.0 333.7M740.1 331.7L740.2 334.0M745.2 331.9L745.3 334.2M750.3 332.2L750.4 334.5M760.2 332.7L760.3 334.9M765.0 333.0L765.1 335.2M405.7 370.7L406.2 374.0M417.0 370.6L417.4 374.0M428.0 370.6L428.4 373.9M438.8 370.6L439.2 373.8M449.3 370.5L449.7 373.7M459.7 370.5L460.0 373.7M469.8 370.5L470.1 373.6M489.4 370.4L489.7 373.5M498.9 370.4L499.2 373.4M508.2 370.3L508.5 373.4M517.3 370.3L517.6 373.3M526.3 370.3L526.5 373.2M535.0 370.2L535.3 373.2M543.6 370.2L543.9 373.1M560.3 370.2L560.6 373.0M568.5 370.1L568.7 373.0M576.4 370.1L576.7 372.9M584.2 370.1L584.5 372.9M591.9 370.1L592.1 372.8M599.5 370.0L599.7 372.8M606.9 370.0L607.1 372.7M621.3 370.0L621.5 372.6M628.3 369.9L628.5 372.6M635.2 369.9L635.4 372.5M642.0 369.9L642.2 372.5M648.6 369.9L648.8 372.4M655.2 369.9L655.4 372.4M661.6 369.8L661.8 372.3M674.2 369.8L674.4 372.3M680.3 369.8L680.5 372.2M686.4 369.7L686.5 372.2M692.3 369.7L692.4 372.1M698.1 369.7L698.3 372.1M703.9 369.7L704.0 372.1M709.5 369.7L709.7 372.0M720.6 369.6L720.7 372.0M726.0 369.6L726.1 371.9M731.3 369.6L731.4 371.9M736.5 369.6L736.6 371.8M741.7 369.6L741.8 371.8M746.8 369.5L746.9 371.8M751.8 369.5L751.9 371.7M413.0 425.8L413.4 429.1M424.0 425.2L424.4 428.4M434.8 424.5L435.2 427.7M445.4 423.9L445.8 427.1M455.7 423.3L456.1 426.5M465.8 422.8L466.2 425.8M475.7 422.2L476.1 425.2M494.9 421.1L495.3 424.1M504.3 420.5L504.6 423.5M513.4 420.0L513.7 422.9M522.3 419.5L522.6 422.4M531.1 419.0L531.4 421.9M539.7 418.5L540.0 421.3M548.2 418.0L548.4 420.8M564.6 417.0L564.8 419.8M572.6 416.6L572.8 419.3M580.4 416.1L580.6 418.9M588.1 415.7L588.3 418.4M595.7 415.2L595.9 417.9M603.1 414.8L603.3 417.5M610.4 414.4L610.6 417.0M624.5 413.6L624.7 416.2M631.5 413.2L631.6 415.7M638.2 412.8L638.4 415.3M644.9 412.4L645.1 414.9M651.5 412.0L651.7 414.5M657.9 411.6L658.1 414.1M664.3 411.3L664.4 413.7M676.7 410.6L676.8 413.0M682.7 410.2L682.9 412.6M688.7 409.9L688.8 412.2M694.5 409.5L694.6 411.9M700.3 409.2L700.4 411.5M705.9 408.9L706.1 411.2M711.5 408.5L711.6 410.9M722.4 407.9L722.5 410.2M727.8 407.6L727.9 409.9M733.0 407.3L733.1 409.5M738.2 407.0L738.3 409.2M743.3 406.7L743.4 408.9" stroke="#4c6482" stroke-opacity="0.16" stroke-width="0.5" fill="none"/>
<polygon points="443.0,209.0 461.6,209.7 1020.7,301.2 1017.2,413.4 491.2,472.9 475.5,474.6 469.0,426.0" fill="url(#gwfade)"/>
<g clip-path="url(#cfloor)"><path filter="url(#soft)" d="M410.7 481.2 L325.9 620.0 L329.0 619.3 L412.1 481.1Z M491.8 472.1 L486.0 733.9 L489.7 732.5 L492.9 472.0Z M560.8 464.4 L707.7 731.2 L710.4 729.9 L561.9 464.3Z M620.4 457.7 L931.7 739.1 L933.6 737.7 L621.3 457.6Z M672.4 451.9 L1140.8 736.3 L1141.9 734.9 L673.2 451.8Z M718.0 446.8 L1341.4 733.6 L1341.7 732.3 L718.7 446.7Z M758.5 442.2 L1561.2 741.2 L1560.7 739.8 L759.1 442.2Z M794.6 438.2 L1660.6 710.2 L1659.8 709.1 L795.1 438.1Z M827.0 434.5 L1666.6 663.4 L1665.9 662.6 L827.5 434.5Z M856.3 431.3 L1671.1 628.0 L1670.5 627.4 L856.7 431.2Z M882.8 428.3 L1656.0 596.3 L1655.5 595.8 L883.2 428.2Z M907.0 425.6 L1660.6 574.8 L1660.1 574.4 L907.3 425.5Z M929.1 423.1 L1664.4 557.1 L1664.0 556.7 L929.4 423.1Z M949.4 420.8 L1667.6 542.2 L1667.2 541.9 L949.7 420.8Z M968.2 418.7 L1670.3 529.6 L1669.9 529.4 L968.5 418.7Z M985.5 416.8 L1672.6 518.7 L1672.3 518.5 L985.8 416.7Z M1001.6 415.0 L1663.4 507.7 L1663.1 507.5 L1001.8 414.9Z M1016.5 413.3 L1665.8 499.6 L1665.5 499.4 L1016.7 413.3Z M328.0 490.6 L1016.8 413.3 L1016.5 413.3 L328.3 490.4Z M333.1 501.7 L1034.0 415.6 L1033.7 415.6 L333.3 501.5Z M327.9 516.1 L1052.3 418.0 L1052.0 418.0 L328.2 515.8Z M333.9 531.5 L1072.0 420.6 L1071.7 420.6 L334.2 531.2Z M327.8 552.1 L1093.1 423.5 L1092.8 423.4 L328.1 551.7Z M335.1 574.8 L1115.9 426.5 L1115.5 426.4 L335.4 574.3Z M327.6 606.5 L1140.4 429.7 L1140.0 429.7 L328.0 605.8Z M337.0 643.2 L1166.9 433.3 L1166.5 433.2 L337.4 642.4Z M327.3 698.3 L1195.7 437.1 L1195.2 437.0 L327.8 697.2Z M414.5 740.7 L1227.1 441.3 L1226.6 441.2 L414.8 739.3Z M644.0 737.0 L1261.4 445.8 L1260.9 445.7 L643.5 735.6Z M850.5 741.6 L1299.1 450.8 L1298.5 450.7 L849.2 740.2Z M1064.4 738.0 L1340.7 456.4 L1340.0 456.3 L1062.4 736.7Z M1268.7 734.6 L1386.9 462.5 L1386.1 462.4 L1266.1 733.3Z M1464.9 739.0 L1438.3 469.3 L1437.4 469.2 L1461.6 737.7Z M1655.7 735.6 L1496.1 477.0 L1495.1 476.9 L1651.9 734.3Z M1674.3 586.3 L1561.3 485.7 L1560.2 485.5 L1672.0 585.8Z M1673.6 519.0 L1635.7 495.5 L1634.5 495.4 L1672.0 518.8Z" fill="#4a78a8" fill-opacity="0.3"/></g>
<g clip-path="url(#cfloor)"><path filter="url(#soft)" d="M490.9 472.2 L483.3 735.0 L492.4 731.5 L493.8 471.9Z M560.1 464.5 L705.6 732.3 L712.4 728.8 L562.6 464.2Z" fill="#3d5070" fill-opacity="0.1"/></g>
<g clip-path="url(#cfloor)"><path filter="url(#soft)" d="M620.1 457.7 L930.9 739.7 L934.5 737.0 L621.7 457.6Z M672.0 451.9 L1140.4 736.9 L1142.4 734.3 L673.5 451.8Z" fill="#3d5070" fill-opacity="0.08"/></g>
<path clip-path="url(#cfloor)" d="M490.1 473.5L494.6 473.0M490.0 474.7L494.6 474.2M490.0 475.9L494.6 475.4M489.9 477.2L494.6 476.6M489.9 478.4L494.6 477.9M489.9 479.7L494.6 479.2M489.8 481.0L494.6 480.5M489.7 483.8L494.6 483.1M489.7 485.1L494.6 484.5M489.6 486.6L494.6 485.9M489.6 488.0L494.6 487.4M489.5 489.5L494.6 488.9M489.5 491.0L494.6 490.4M489.4 492.6L494.6 491.9M489.3 495.8L494.6 495.0M489.2 497.4L494.6 496.7M489.2 499.1L494.6 498.4M489.1 500.8L494.6 500.1M489.1 502.6L494.6 501.8M489.0 504.4L494.6 503.6M488.9 506.2L494.6 505.4M488.8 510.1L494.6 509.2M488.7 512.0L494.6 511.1M488.7 514.1L494.6 513.1M488.6 516.1L494.6 515.2M488.5 518.3L494.6 517.3M488.4 520.4L494.6 519.4M488.4 522.7L494.6 521.6M488.2 527.3L494.6 526.2M488.1 529.7L494.6 528.6M488.0 532.2L494.6 531.0M487.9 534.7L494.6 533.6M564.8 474.4L568.9 473.9M565.4 475.6L569.6 475.1M566.1 476.8L570.2 476.3M566.7 478.1L571.0 477.5M567.4 479.4L571.7 478.8M568.1 480.7L572.4 480.1M568.8 482.0L573.1 481.4M570.3 484.7L574.7 484.1M571.0 486.1L575.5 485.5M571.8 487.5L576.3 486.9M572.6 489.0L577.1 488.3M573.4 490.4L577.9 489.8M574.2 491.9L578.8 491.3M575.0 493.5L579.7 492.8M576.7 496.7L581.5 496.0M577.6 498.3L582.4 497.6M578.5 500.0L583.4 499.3M579.4 501.7L584.3 501.0M580.4 503.5L585.3 502.7M581.3 505.3L586.3 504.5M582.3 507.1L587.4 506.3M584.4 510.9L589.5 510.0M585.4 512.9L590.6 512.0M586.5 514.9L591.8 514.0M587.6 517.0L592.9 516.0M588.8 519.1L594.1 518.1M589.9 521.3L595.4 520.3M591.1 523.5L596.6 522.5M593.6 528.1L599.2 527.0M594.9 530.5L600.6 529.4M596.2 532.9L602.0 531.8M597.6 535.5L603.4 534.3M599.0 538.1L604.9 536.9M600.4 540.7L606.4 539.5M601.9 543.5L607.9 542.2M605.0 549.2L611.1 547.8M606.6 552.2L612.8 550.8M608.2 555.2L614.5 553.8M609.9 558.4L616.3 556.9M611.7 561.7L618.2 560.1M613.5 565.0L620.0 563.4M654.3 489.9L658.3 489.2M655.9 491.3L660.0 490.7M657.5 492.9L661.7 492.2M659.2 494.4L663.4 493.7M662.7 497.6L666.9 496.9M664.5 499.2L668.8 498.5M666.3 500.9L670.6 500.1M668.2 502.6L672.6 501.8M670.1 504.4L674.5 503.6M672.1 506.2L676.5 505.3M674.1 508.0L678.5 507.2M678.2 511.8L682.8 510.9M680.4 513.7L685.0 512.8M682.6 515.7L687.2 514.8M684.8 517.8L689.5 516.9M687.1 519.9L691.8 518.9M689.5 522.1L694.2 521.1M691.9 524.3L696.7 523.2M696.9 528.9L701.8 527.8M699.5 531.2L704.5 530.1M702.2 533.7L707.2 532.5M705.0 536.2L710.0 535.0M707.8 538.8L712.8 537.6M710.7 541.4L715.8 540.2M713.7 544.1L718.8 542.9M719.9 549.8L725.1 548.5M723.1 552.8L728.4 551.4M726.4 555.8L731.8 554.4M729.9 558.9L735.3 557.5M733.4 562.2L738.8 560.6M737.0 565.5L742.5 563.9M740.8 568.9L746.3 567.3" stroke="#3d5070" stroke-opacity="0.1" stroke-width="1.0" fill="none"/>
<path clip-path="url(#cfloor)" d="M487.9 537.4L494.6 536.1M487.8 540.0L494.6 538.8M487.7 542.8L494.6 541.5M487.5 548.6L494.6 547.2M487.4 551.6L494.6 550.1M487.3 554.7L494.6 553.2M487.1 557.9L494.6 556.3M487.0 561.1L494.6 559.6M486.9 564.5L494.6 562.9M486.8 568.0L494.6 566.4M486.5 575.4L494.6 573.6M486.4 579.2L494.6 577.4M486.3 583.2L494.6 581.3M486.1 587.3L494.6 585.4M486.0 591.6L494.6 589.6M485.8 596.0L494.6 593.9M485.7 600.6L494.6 598.4M615.3 568.5L622.0 566.8M619.3 575.8L626.1 574.0M621.3 579.6L628.2 577.7M623.4 583.5L630.4 581.6M625.6 587.6L632.7 585.6M627.9 591.8L635.1 589.8M630.2 596.2L637.6 594.0M632.7 600.7L640.1 598.5" stroke="#3d5070" stroke-opacity="0.1" stroke-width="1.5" fill="none"/>
<path clip-path="url(#cfloor)" d="M485.3 610.3L494.6 607.9M485.2 615.4L494.6 612.9M485.0 620.7L494.6 618.1M484.8 626.3L494.6 623.6M484.6 632.0L494.6 629.2M484.4 638.0L494.6 635.1M484.2 644.3L494.6 641.2" stroke="#3d5070" stroke-opacity="0.1" stroke-width="2.0" fill="none"/>
<path clip-path="url(#cfloor)" d="M560.0 465.6L563.9 465.1M560.5 466.6L564.4 466.2M561.1 467.7L565.0 467.2M561.7 468.7L565.7 468.3M562.3 469.8L566.3 469.4M562.9 471.0L566.9 470.5M563.5 472.1L567.6 471.6M620.2 458.7L623.6 458.4M621.2 459.7L624.6 459.3M622.2 460.6L625.6 460.2M623.3 461.5L626.7 461.1M624.3 462.5L627.7 462.1M625.4 463.5L628.8 463.0M626.5 464.5L629.9 464.0M628.7 466.5L632.2 466.0M629.8 467.5L633.4 467.1M631.0 468.6L634.6 468.1M632.2 469.7L635.8 469.2M633.4 470.8L637.0 470.3M634.6 471.9L638.2 471.4M635.8 473.0L639.5 472.5M638.4 475.3L642.1 474.8M639.7 476.5L643.5 476.0M641.0 477.8L644.8 477.2M642.4 479.0L646.2 478.5M643.8 480.3L647.6 479.7M645.2 481.6L649.1 481.0M646.6 482.9L650.5 482.3M649.6 485.6L653.6 485.0M651.1 487.0L655.1 486.4M652.7 488.4L656.7 487.8" stroke="#3d5070" stroke-opacity="0.1" stroke-width="0.5" fill="none"/>
<polygon points="446.7,681.0 475.5,474.6 491.2,472.9 1017.2,413.4 1578.8,488.2 1614.0,507.8 1614.0,681.0" fill="url(#gffade)"/>
<polygon points="1014.3,300.3 1022.2,301.2 1018.7,413.4 978.5,417.6" fill="#8392aa" />
<polygon points="978.5,417.6 1017.2,411.9 1298.5,449.2 1299.3,446.5 1394.8,450.3 1396.5,463.6 1392.3,462.8 1301.8,456.5 1250.0,454.2 1201.3,451.3 1075.7,433.9 962.6,421.4" fill="#8ba5cf" />
<polygon points="509.6,681.0 1158.6,459.6 1427.5,475.8 1578.8,488.2 1614.0,507.8 1614.0,681.0" fill="url(#gfloor)" />
<g clip-path="url(#cbig)"><path filter="url(#soft)" d="M410.0 481.3 L324.4 620.3 L330.5 618.9 L412.8 481.0Z M491.2 472.2 L484.2 734.7 L491.5 731.8 L493.5 471.9Z M560.3 464.4 L706.3 731.9 L711.8 729.2 L562.4 464.2Z M620.0 457.8 L930.8 739.8 L934.6 737.0 L621.8 457.6Z M672.0 451.9 L1140.3 737.0 L1142.4 734.2 L673.5 451.7Z M717.7 446.8 L1341.2 734.3 L1341.9 731.6 L719.1 446.6Z M758.2 442.3 L1561.4 741.9 L1560.5 739.1 L759.4 442.1Z M794.3 438.2 L1661.0 710.8 L1659.4 708.5 L795.4 438.1Z M826.8 434.6 L1666.9 663.8 L1665.5 662.1 L827.7 434.5Z M856.0 431.3 L1671.4 628.4 L1670.2 627.1 L856.9 431.2Z M882.6 428.3 L1656.2 596.6 L1655.2 595.6 L883.4 428.2Z M906.8 425.6 L1660.8 575.0 L1659.9 574.2 L907.5 425.5Z M928.9 423.1 L1664.6 557.3 L1663.8 556.6 L929.6 423.0Z M949.3 420.8 L1667.8 542.4 L1667.0 541.8 L949.9 420.8Z M968.0 418.7 L1670.5 529.7 L1669.7 529.2 L968.6 418.7Z M985.4 416.8 L1672.8 518.9 L1672.1 518.4 L985.9 416.7Z M1001.4 415.0 L1663.6 507.8 L1662.9 507.4 L1001.9 414.9Z M1016.4 413.3 L1666.0 499.7 L1665.4 499.4 L1016.9 413.3Z M327.9 490.7 L1016.9 413.3 L1016.4 413.3 L328.4 490.3Z M332.9 501.8 L1034.1 415.6 L1033.5 415.5 L333.4 501.4Z M327.8 516.3 L1052.5 418.1 L1051.9 418.0 L328.3 515.7Z M333.7 531.7 L1072.2 420.7 L1071.5 420.6 L334.3 531.0Z M327.7 552.3 L1093.3 423.5 L1092.6 423.4 L328.3 551.5Z M334.9 575.0 L1116.1 426.5 L1115.3 426.4 L335.6 574.1Z M327.4 606.8 L1140.6 429.8 L1139.8 429.7 L328.2 605.5Z M336.8 643.7 L1167.1 433.3 L1166.3 433.2 L337.6 642.0Z M327.0 698.9 L1196.0 437.1 L1195.0 437.0 L328.1 696.6Z M414.3 741.4 L1227.4 441.3 L1226.3 441.2 L414.9 738.6Z M644.3 737.7 L1261.7 445.9 L1260.6 445.7 L643.2 735.0Z M851.1 742.3 L1299.4 450.9 L1298.2 450.7 L848.6 739.5Z M1065.4 738.7 L1341.1 456.4 L1339.7 456.2 L1061.5 736.0Z M1270.0 735.2 L1387.3 462.5 L1385.7 462.3 L1264.9 732.6Z M1466.5 739.6 L1438.8 469.4 L1437.0 469.1 L1460.0 737.0Z M1657.6 736.2 L1496.6 477.1 L1494.6 476.8 L1650.0 733.7Z M1675.4 586.5 L1561.9 485.7 L1559.7 485.4 L1670.9 585.6Z M1674.4 519.1 L1636.4 495.6 L1633.8 495.3 L1671.3 518.6Z" fill="#1c2a44" fill-opacity="0.3"/></g>
<g clip-path="url(#cbig)"><path filter="url(#soft)" d="M365.0 486.3 L327.0 528.1 L328.3 527.9 L365.9 486.2Z M453.2 476.5 L372.4 735.1 L374.9 734.2 L454.0 476.4Z M527.8 468.1 L598.6 732.3 L600.6 731.4 L528.5 468.0Z M591.9 460.9 L824.3 740.2 L825.7 739.3 L592.5 460.8Z M647.4 454.7 L1037.7 737.4 L1038.6 736.5 L647.9 454.6Z M696.1 449.2 L1242.3 734.7 L1242.7 733.8 L696.5 449.2Z M739.0 444.4 L1438.6 732.1 L1438.6 731.2 L739.4 444.4Z M777.2 440.1 L1656.6 739.6 L1656.1 738.7 L777.5 440.1Z M811.3 436.3 L1663.7 684.9 L1663.2 684.3 L811.6 436.3Z M842.1 432.9 L1668.9 644.4 L1668.5 644.0 L842.4 432.8Z M869.9 429.7 L1672.9 613.3 L1672.5 612.9 L870.2 429.7Z M895.2 426.9 L1658.3 584.9 L1658.0 584.6 L895.5 426.9Z M918.3 424.3 L1662.5 565.5 L1662.2 565.2 L918.6 424.3Z M939.5 421.9 L1666.0 549.3 L1665.7 549.1 L939.7 421.9Z M959.0 419.7 L1668.9 535.6 L1668.7 535.5 L959.2 419.7Z M977.1 417.7 L1671.4 523.9 L1671.2 523.8 L977.2 417.7Z M993.7 415.9 L1673.6 513.8 L1673.4 513.7 L993.9 415.8Z M1009.2 414.1 L1664.6 503.5 L1664.4 503.4 L1009.4 414.1Z M330.5 495.9 L1025.2 414.4 L1025.0 414.4 L330.7 495.8Z M335.9 507.9 L1042.9 416.8 L1042.8 416.8 L336.1 507.7Z M330.8 523.4 L1062.0 419.3 L1061.8 419.3 L331.0 523.3Z M337.3 540.2 L1082.3 422.0 L1082.1 422.0 L337.5 540.0Z M331.3 562.8 L1104.2 424.9 L1104.0 424.9 L331.5 562.5Z M339.4 587.9 L1127.8 428.1 L1127.6 428.0 L339.6 587.6Z M332.1 623.5 L1153.3 431.4 L1153.0 431.4 L332.3 623.1Z M342.8 665.5 L1180.9 435.1 L1180.6 435.1 L343.0 664.9Z M333.4 729.8 L1211.0 439.1 L1210.7 439.1 L333.7 729.0Z M540.5 734.5 L1243.8 443.5 L1243.4 443.4 L540.4 733.6Z M747.1 739.1 L1279.7 448.2 L1279.3 448.2 L746.6 738.2Z M963.4 735.5 L1319.3 453.5 L1318.9 453.4 L962.4 734.7Z M1164.5 740.0 L1363.0 459.3 L1362.6 459.3 L1163.0 739.2Z M1366.3 736.5 L1411.7 465.8 L1411.2 465.7 L1364.5 735.7Z M1562.1 740.9 L1466.2 473.0 L1465.6 472.9 L1559.8 740.1Z M1674.4 650.0 L1527.5 481.2 L1526.8 481.1 L1672.5 649.5Z M1673.5 546.3 L1597.1 490.4 L1596.3 490.3 L1672.4 546.1Z" fill="#1c2a44" fill-opacity="0.12"/></g>
<path clip-path="url(#cbig)" d="M489.3 495.8L494.6 495.0M489.2 497.4L494.6 496.7M489.2 499.1L494.6 498.4M489.1 500.8L494.6 500.1M489.1 502.6L494.6 501.8M489.0 504.4L494.6 503.6M488.9 506.2L494.6 505.4M488.8 510.1L494.6 509.2M488.7 512.0L494.6 511.1M488.7 514.1L494.6 513.1M488.6 516.1L494.6 515.2M488.5 518.3L494.6 517.3M488.4 520.4L494.6 519.4M488.4 522.7L494.6 521.6M488.2 527.3L494.6 526.2M488.1 529.7L494.6 528.6M488.0 532.2L494.6 531.0M487.9 534.7L494.6 533.6M570.3 484.7L574.7 484.1M571.0 486.1L575.5 485.5M571.8 487.5L576.3 486.9M572.6 489.0L577.1 488.3M573.4 490.4L577.9 489.8M574.2 491.9L578.8 491.3M575.0 493.5L579.7 492.8M576.7 496.7L581.5 496.0M577.6 498.3L582.4 497.6M578.5 500.0L583.4 499.3M579.4 501.7L584.3 501.0M580.4 503.5L585.3 502.7M581.3 505.3L586.3 504.5M582.3 507.1L587.4 506.3M584.4 510.9L589.5 510.0M585.4 512.9L590.6 512.0M586.5 514.9L591.8 514.0M587.6 517.0L592.9 516.0M588.8 519.1L594.1 518.1M589.9 521.3L595.4 520.3M591.1 523.5L596.6 522.5M593.6 528.1L599.2 527.0M594.9 530.5L600.6 529.4M596.2 532.9L602.0 531.8M597.6 535.5L603.4 534.3M599.0 538.1L604.9 536.9M600.4 540.7L606.4 539.5M601.9 543.5L607.9 542.2M605.0 549.2L611.1 547.8M606.6 552.2L612.8 550.8M608.2 555.2L614.5 553.8M609.9 558.4L616.3 556.9M611.7 561.7L618.2 560.1M613.5 565.0L620.0 563.4M654.3 489.9L658.3 489.2M655.9 491.3L660.0 490.7M657.5 492.9L661.7 492.2M659.2 494.4L663.4 493.7M662.7 497.6L666.9 496.9M664.5 499.2L668.8 498.5M666.3 500.9L670.6 500.1M668.2 502.6L672.6 501.8M670.1 504.4L674.5 503.6M672.1 506.2L676.5 505.3M674.1 508.0L678.5 507.2M678.2 511.8L682.8 510.9M680.4 513.7L685.0 512.8M682.6 515.7L687.2 514.8M684.8 517.8L689.5 516.9M687.1 519.9L691.8 518.9M689.5 522.1L694.2 521.1M691.9 524.3L696.7 523.2M696.9 528.9L701.8 527.8M699.5 531.2L704.5 530.1M702.2 533.7L707.2 532.5M705.0 536.2L710.0 535.0M707.8 538.8L712.8 537.6M710.7 541.4L715.8 540.2M713.7 544.1L718.8 542.9M719.9 549.8L725.1 548.5M723.1 552.8L728.4 551.4M726.4 555.8L731.8 554.4M729.9 558.9L735.3 557.5M733.4 562.2L738.8 560.6M737.0 565.5L742.5 563.9M740.8 568.9L746.3 567.3M748.7 576.1L754.3 574.4M752.8 579.9L758.5 578.1M757.0 583.8L762.8 581.9M761.4 587.8L767.3 585.9M766.0 592.0L771.9 590.0M770.7 596.3L776.7 594.2M775.6 600.7L781.6 598.6M785.9 610.1L792.0 607.8M791.3 615.1L797.5 612.7M797.0 620.3L803.2 617.7M776.9 516.6L780.9 515.6M780.2 518.6L784.2 517.7M783.6 520.7L787.7 519.7M787.2 522.8L791.2 521.9M790.8 525.0L794.9 524.0M798.2 529.6L802.4 528.5M802.1 532.0L806.3 530.9M806.1 534.4L810.3 533.3M810.1 536.9L814.4 535.7M814.3 539.5L818.6 538.3M818.6 542.1L822.9 540.9M823.0 544.8L827.4 543.5M832.2 550.4L836.6 549.1M837.0 553.3L841.4 552.0M842.0 556.4L846.4 554.9M847.1 559.5L851.5 558.0M852.3 562.7L856.8 561.2M857.7 566.0L862.2 564.4M863.2 569.4L867.7 567.7M874.9 576.5L879.4 574.7M881.0 580.2L885.5 578.4M887.3 584.1L891.9 582.2M893.8 588.0L898.4 586.1M900.5 592.1L905.1 590.2M907.4 596.4L912.1 594.3M914.6 600.8L919.3 598.7M929.8 610.1L934.5 607.8M937.8 615.0L942.5 612.6M946.1 620.0L950.8 617.6M954.7 625.3L959.4 622.7M963.7 630.8L968.4 628.1M973.0 636.5L977.7 633.7M982.7 642.4L987.4 639.5M1003.3 655.0L1007.9 651.8M1014.2 661.7L1018.9 658.4M1025.7 668.7L1030.3 665.2M1037.7 676.0L1042.2 672.4M1050.2 683.7L1054.7 679.9M1113.8 630.4L1117.0 627.8M1125.9 636.0L1129.0 633.3M1138.5 641.8L1141.5 639.0M1165.2 654.2L1168.1 651.1M1179.5 660.8L1182.2 657.5M1194.3 667.6L1196.9 664.2M1209.8 674.8L1212.3 671.2M1226.0 682.3L1228.4 678.6M753.3 682.1L756.3 686.0M770.3 674.2L773.3 677.9M786.4 666.7L789.6 670.2M801.7 659.6L805.0 662.9M816.4 652.7L819.7 655.9M843.7 640.0L847.1 642.9M856.4 634.0L859.9 636.8M868.6 628.3L872.2 631.0M880.3 622.9L883.9 625.4M891.6 617.6L895.1 620.1M902.3 612.6L905.9 615.0M912.7 607.8L916.3 610.1M932.2 598.7L935.8 600.8M941.4 594.4L945.1 596.4M950.3 590.2L953.9 592.2M958.8 586.2L962.5 588.1M967.1 582.4L970.8 584.2M937.6 680.8L942.5 684.5M949.7 673.0L954.6 676.6M961.2 665.7L966.2 669.1M972.2 658.6L977.1 661.9M982.7 651.9L987.6 655.1M1002.2 639.4L1007.1 642.3M1011.4 633.6L1016.3 636.3M1020.1 628.0L1025.0 630.6M1028.6 622.6L1033.4 625.1M1036.6 617.5L1041.4 619.9M1044.4 612.5L1049.2 614.8M1051.8 607.7L1056.6 610.0M1065.9 598.8L1070.6 600.9M1072.5 594.5L1077.2 596.5M1078.9 590.4L1083.6 592.4M1085.1 586.5L1089.7 588.4M1091.1 582.7L1095.6 584.5M1096.8 579.0L1101.4 580.7M1102.4 575.4L1106.9 577.1M1113.0 568.6L1117.4 570.3M1118.0 565.4L1122.4 567.0M1122.9 562.3L1127.3 563.8M1127.6 559.3L1132.0 560.7M1132.2 556.3L1136.5 557.8M1136.7 553.5L1140.9 554.9M1141.0 550.7L1145.2 552.1M1149.3 545.5L1153.4 546.7M1153.2 542.9L1157.3 544.2M1157.0 540.5L1161.1 541.7M1160.8 538.1L1164.8 539.3M1164.4 535.8L1168.4 536.9M1168.0 533.5L1171.9 534.6M1161.7 633.2L1167.9 635.9M1167.2 627.6L1173.3 630.2M1172.5 622.4L1178.6 624.9M1177.6 617.3L1183.6 619.7M1182.5 612.4L1188.4 614.7M1187.2 607.7L1193.0 609.9M1196.1 598.8L1201.8 600.9M1200.3 594.6L1205.9 596.6M1204.3 590.6L1209.9 592.5M1208.2 586.7L1213.7 588.6M1212.0 582.9L1217.4 584.7M1215.7 579.3L1221.0 581.0M1219.2 575.8L1224.5 577.5M1225.9 569.1L1231.1 570.7M1229.1 565.9L1234.2 567.4M1232.2 562.8L1237.3 564.3M1235.2 559.8L1240.2 561.2M1238.1 556.9L1243.1 558.3M1240.9 554.1L1245.8 555.4M1243.7 551.3L1248.5 552.6M1248.9 546.1L1253.7 547.3M1251.5 543.6L1256.1 544.8M1253.9 541.1L1258.5 542.3M1256.3 538.7L1260.9 539.9M1258.6 536.4L1263.1 537.6M1260.9 534.2L1265.3 535.3M1263.1 532.0L1267.5 533.1M1267.3 527.8L1271.6 528.8M1269.3 525.8L1273.6 526.8M1271.3 523.8L1275.5 524.8M1273.2 521.8L1277.4 522.8M1275.1 520.0L1279.3 520.9M1276.9 518.1L1281.1 519.0M1278.7 516.3L1282.8 517.2M1282.2 512.9L1286.2 513.7M1326.6 590.8L1333.0 592.7M1328.3 586.9L1334.7 588.8M1330.0 583.2L1336.3 585.0M1331.7 579.6L1337.8 581.3M1333.2 576.1L1339.3 577.8M1336.3 569.5L1342.2 571.0M1337.7 566.3L1343.5 567.8M1339.1 563.2L1344.8 564.7M1340.4 560.3L1346.1 561.7M1341.8 557.4L1347.3 558.8M1343.0 554.6L1348.5 555.9M1344.3 551.9L1349.7 553.2M1346.6 546.7L1351.9 547.9M1347.8 544.2L1353.0 545.4M1348.9 541.7L1354.0 542.9M1349.9 539.4L1355.0 540.5M1351.0 537.1L1356.0 538.2M1352.0 534.8L1357.0 535.9M1353.0 532.7L1357.9 533.7M1354.9 528.5L1359.7 529.5M1355.8 526.5L1360.6 527.5M1356.7 524.5L1361.4 525.5M1357.6 522.6L1362.2 523.5M1358.4 520.7L1363.0 521.6M1359.3 518.9L1363.8 519.8M1360.1 517.1L1364.6 518.0M1361.7 513.6L1366.0 514.5M1362.4 512.0L1366.7 512.8M1363.1 510.3L1367.4 511.2M1363.9 508.7L1368.1 509.6M1364.6 507.2L1368.8 508.0M1365.3 505.7L1369.4 506.4M1365.9 504.2L1370.1 504.9M1367.3 501.3L1371.3 502.0M1444.2 569.9L1450.7 571.4M1443.9 566.7L1450.4 568.2M1443.7 563.7L1450.0 565.2M1443.4 560.7L1449.7 562.2M1443.2 557.9L1449.4 559.3M1443.0 555.1L1449.1 556.5M1442.8 552.4L1448.8 553.7M1442.4 547.2L1448.2 548.5M1442.2 544.8L1447.9 546.0M1442.0 542.4L1447.7 543.5M1441.8 540.0L1447.4 541.2M1441.6 537.7L1447.1 538.8M1441.5 535.5L1446.9 536.6M1441.3 533.3L1446.7 534.4M1441.0 529.2L1446.2 530.2M1440.8 527.1L1446.0 528.1M1440.7 525.2L1445.8 526.2M1440.5 523.3L1445.5 524.2M1440.4 521.4L1445.3 522.3M1440.2 519.6L1445.1 520.5M1440.1 517.8L1444.9 518.7M1439.8 514.4L1444.5 515.2M1439.7 512.7L1444.4 513.5M1439.6 511.1L1444.2 511.9M1439.4 509.5L1444.0 510.3M1439.3 507.9L1443.8 508.7M1439.2 506.4L1443.7 507.2M1439.1 504.9L1443.5 505.7M1438.8 502.1L1443.2 502.8M1438.7 500.7L1443.0 501.4M1438.6 499.3L1442.9 500.0M1438.5 498.0L1442.7 498.6M1438.4 496.6L1442.6 497.3M1438.3 495.4L1442.4 496.0M1438.2 494.1L1442.3 494.7M1540.9 555.6L1547.6 557.0M1539.3 552.9L1545.9 554.2M1536.3 547.8L1542.6 549.0M1534.8 545.3L1541.0 546.6M1533.4 543.0L1539.5 544.1M1532.0 540.6L1538.0 541.8M1530.6 538.3L1536.6 539.5M1529.3 536.1L1535.2 537.2M1528.0 534.0L1533.8 535.0M1525.5 529.8L1531.2 530.8M1524.3 527.8L1529.9 528.8M1523.2 525.9L1528.6 526.8M1522.0 524.0L1527.4 524.9M1520.9 522.1L1526.2 523.0M1519.8 520.3L1525.1 521.2M1518.8 518.5L1524.0 519.4M1516.7 515.1L1521.8 516.0M1515.7 513.4L1520.7 514.3M1514.8 511.8L1519.7 512.6M1513.8 510.2L1518.7 511.0M1512.9 508.7L1517.7 509.5M1512.0 507.2L1516.8 507.9M1511.1 505.7L1515.8 506.5M1509.4 502.8L1514.0 503.5M1508.5 501.4L1513.1 502.1M1507.7 500.1L1512.2 500.8M1506.9 498.7L1511.4 499.4M1506.1 497.4L1510.6 498.1M1505.4 496.1L1509.7 496.8M1504.6 494.9L1508.9 495.5" stroke="#1c2a44" stroke-opacity="0.16" stroke-width="1.0" fill="none"/>
<path clip-path="url(#cbig)" d="M487.9 537.4L494.6 536.1M487.8 540.0L494.6 538.8M487.7 542.8L494.6 541.5M487.5 548.6L494.6 547.2M487.4 551.6L494.6 550.1M487.3 554.7L494.6 553.2M487.1 557.9L494.6 556.3M487.0 561.1L494.6 559.6M486.9 564.5L494.6 562.9M486.8 568.0L494.6 566.4M486.5 575.4L494.6 573.6M486.4 579.2L494.6 577.4M486.3 583.2L494.6 581.3M486.1 587.3L494.6 585.4M486.0 591.6L494.6 589.6M485.8 596.0L494.6 593.9M485.7 600.6L494.6 598.4M615.3 568.5L622.0 566.8M619.3 575.8L626.1 574.0M621.3 579.6L628.2 577.7M623.4 583.5L630.4 581.6M625.6 587.6L632.7 585.6M627.9 591.8L635.1 589.8M630.2 596.2L637.6 594.0M632.7 600.7L640.1 598.5M637.8 610.2L645.4 607.9M640.5 615.3L648.3 612.8M643.3 620.5L651.2 617.9M646.2 625.9L654.3 623.3M649.3 631.6L657.4 628.8M652.5 637.5L660.7 634.6M655.8 643.6L664.2 640.6M662.8 656.7L671.5 653.4M666.5 663.7L675.4 660.2M802.8 625.6L809.1 623.0M808.9 631.2L815.3 628.5M815.2 637.0L821.7 634.1M821.8 643.0L828.3 640.0M835.9 655.8L842.5 652.6M843.4 662.7L850.0 659.3M851.2 669.8L857.9 666.3M859.4 677.3L866.2 673.6M867.9 685.1L874.8 681.2M1115.3 679.4L1122.1 683.1M1122.9 671.8L1129.6 675.4M1130.1 664.6L1136.8 668.0M1137.0 657.8L1143.6 661.0M1143.6 651.2L1150.1 654.3M1155.9 638.9L1162.2 641.7M1283.3 685.9L1292.1 689.7M1286.9 678.1L1295.4 681.7M1290.2 670.7L1298.6 674.2M1293.4 663.7L1301.7 666.9M1296.5 656.9L1304.6 660.1M1299.4 650.5L1307.3 653.5M1304.9 638.4L1312.5 641.2M1307.5 632.7L1315.0 635.4M1310.0 627.3L1317.3 629.9M1312.3 622.1L1319.6 624.6M1314.6 617.1L1321.7 619.5M1316.8 612.3L1323.8 614.6M1318.9 607.7L1325.8 609.9M1322.9 598.9L1329.5 601.0M1324.8 594.8L1331.3 596.8M1449.5 637.9L1458.3 640.6M1449.1 632.3L1457.7 635.0M1448.6 627.0L1457.1 629.5M1448.2 621.9L1456.5 624.3M1447.9 616.9L1456.0 619.3M1447.5 612.2L1455.5 614.4M1447.1 607.6L1455.0 609.8M1446.5 599.0L1454.0 601.0M1446.1 594.9L1453.5 596.9M1445.8 591.0L1453.1 592.8M1445.5 587.1L1452.7 589.0M1445.2 583.5L1452.2 585.2M1445.0 579.9L1451.9 581.6M1444.7 576.4L1451.5 578.1M1577.5 616.8L1586.6 619.1M1574.7 612.1L1583.6 614.3M1572.0 607.6L1580.7 609.7M1566.9 599.1L1575.3 601.1M1564.5 595.0L1572.7 597.0M1562.2 591.1L1570.2 593.0M1559.9 587.4L1567.8 589.2M1557.7 583.7L1565.5 585.5M1555.6 580.2L1563.2 581.9M1553.6 576.8L1561.0 578.4M1549.7 570.3L1556.9 571.8M1547.8 567.1L1554.9 568.7M1546.0 564.1L1553.0 565.6M1544.3 561.2L1551.1 562.6M1542.6 558.4L1549.3 559.8" stroke="#1c2a44" stroke-opacity="0.16" stroke-width="1.5" fill="none"/>
<path clip-path="url(#cbig)" d="M485.3 610.3L494.6 607.9M485.2 615.4L494.6 612.9M485.0 620.7L494.6 618.1M484.8 626.3L494.6 623.6M484.6 632.0L494.6 629.2M484.4 638.0L494.6 635.1M484.2 644.3L494.6 641.2M483.7 657.6L494.6 654.2M483.4 664.7L494.6 661.2M483.2 672.2L494.6 668.5M482.9 680.0L494.6 676.1M670.5 671.0L679.5 667.4M674.6 678.6L683.7 674.8M1453.2 684.5L1463.6 688.2M1452.6 676.9L1462.7 680.4M1452.0 669.6L1461.9 673.0M1451.5 662.7L1461.1 665.9M1450.9 656.1L1460.4 659.2M1450.4 649.8L1459.7 652.7M1617.2 683.1L1629.1 686.8M1612.7 675.7L1624.4 679.1M1608.4 668.6L1619.8 671.9M1604.4 661.8L1615.4 664.9M1600.5 655.3L1611.3 658.3M1596.8 649.1L1607.3 652.0M1589.8 637.4L1599.8 640.1M1586.6 631.9L1596.3 634.5M1583.4 626.7L1592.9 629.2M1580.4 621.6L1589.7 624.0" stroke="#1c2a44" stroke-opacity="0.16" stroke-width="2.0" fill="none"/>
<path clip-path="url(#cbig)" d="M638.4 475.3L642.1 474.8M639.7 476.5L643.5 476.0M641.0 477.8L644.8 477.2M642.4 479.0L646.2 478.5M643.8 480.3L647.6 479.7M645.2 481.6L649.1 481.0M646.6 482.9L650.5 482.3M649.6 485.6L653.6 485.0M651.1 487.0L655.1 486.4M652.7 488.4L656.7 487.8M696.5 467.4L699.7 467.0M698.2 468.4L701.4 468.0M699.9 469.5L703.2 469.0M701.7 470.6L705.0 470.1M703.5 471.7L706.8 471.2M705.3 472.8L708.6 472.3M707.2 473.9L710.5 473.4M711.0 476.3L714.4 475.7M712.9 477.5L716.3 476.9M714.9 478.7L718.4 478.1M717.0 479.9L720.4 479.4M719.0 481.2L722.5 480.6M721.1 482.5L724.6 481.9M723.3 483.8L726.8 483.2M727.7 486.5L731.3 485.9M730.0 487.9L733.6 487.3M732.3 489.3L735.9 488.7M734.7 490.8L738.3 490.1M737.1 492.2L740.8 491.6M739.6 493.7L743.2 493.1M742.1 495.3L745.8 494.6M747.3 498.5L751.0 497.7M750.0 500.1L753.7 499.4M752.7 501.8L756.5 501.0M755.5 503.5L759.3 502.7M758.3 505.2L762.2 504.4M761.3 507.0L765.1 506.2M764.2 508.8L768.1 508.0M770.4 512.6L774.4 511.7M773.6 514.6L777.6 513.7M746.6 460.5L749.4 460.1M748.6 461.4L751.4 461.1M750.6 462.4L753.4 462.0M752.7 463.3L755.5 462.9M754.7 464.3L757.6 463.9M756.8 465.3L759.7 464.8M759.0 466.2L761.9 465.8M763.4 468.3L766.3 467.8M765.6 469.3L768.6 468.9M767.9 470.4L770.9 469.9M770.3 471.5L773.2 471.0M772.6 472.6L775.6 472.1M775.1 473.7L778.0 473.2M777.5 474.8L780.5 474.3M782.6 477.2L785.6 476.6M785.2 478.4L788.2 477.8M787.8 479.6L790.8 479.0M790.5 480.8L793.5 480.3M793.2 482.1L796.3 481.5M796.0 483.4L799.1 482.8M798.8 484.7L801.9 484.1M804.7 487.4L807.8 486.8M807.7 488.8L810.8 488.2M810.8 490.2L813.9 489.6M813.9 491.6L817.1 491.0M817.1 493.1L820.3 492.5M820.3 494.6L823.5 493.9M823.6 496.2L826.9 495.5M830.5 499.3L833.7 498.6M834.0 501.0L837.3 500.2M837.6 502.6L840.9 501.9M841.3 504.3L844.6 503.6M845.1 506.1L848.4 505.3M848.9 507.8L852.2 507.0M852.8 509.7L856.2 508.8M861.0 513.4L864.3 512.6M865.2 515.4L868.5 514.5M869.5 517.4L872.9 516.4M873.9 519.4L877.3 518.5M878.4 521.5L881.8 520.5M883.0 523.6L886.4 522.6M887.7 525.8L891.2 524.8M897.5 530.3L901.0 529.3M902.6 532.7L906.1 531.6M907.8 535.1L911.3 534.0M913.2 537.6L916.7 536.4M918.7 540.1L922.2 538.9M924.3 542.7L927.8 541.5M930.1 545.4L933.6 544.2M942.2 551.0L945.7 549.7M948.5 553.9L952.0 552.5M955.0 556.9L958.5 555.5M961.6 560.0L965.1 558.5M968.5 563.2L972.0 561.7M975.5 566.4L979.0 564.9M982.8 569.8L986.3 568.2M998.0 576.8L1001.5 575.1M1006.0 580.5L1009.5 578.7M1014.2 584.3L1017.7 582.5M1022.7 588.2L1026.2 586.4M1031.5 592.3L1034.9 590.4M1040.5 596.5L1044.0 594.5M1049.9 600.8L1053.3 598.7M1069.7 610.0L1073.0 607.7M1080.1 614.8L1083.4 612.5M1090.9 619.8L1094.2 617.4M1102.2 625.0L1105.4 622.5M790.3 454.5L792.8 454.2M792.5 455.3L794.9 455.0M794.7 456.2L797.2 455.8M796.9 457.0L799.4 456.7M799.2 457.9L801.7 457.5M801.5 458.7L804.0 458.4M803.9 459.6L806.4 459.2M808.7 461.4L811.2 461.0M811.1 462.3L813.6 461.9M813.6 463.2L816.2 462.9M816.1 464.2L818.7 463.8M818.7 465.2L821.3 464.7M821.3 466.1L823.9 465.7M824.0 467.1L826.6 466.7M829.4 469.2L832.0 468.7M832.2 470.2L834.8 469.8M835.1 471.3L837.7 470.8M838.0 472.4L840.6 471.9M840.9 473.5L843.5 473.0M843.9 474.6L846.5 474.1M846.9 475.7L849.6 475.2M853.2 478.0L855.8 477.5M856.4 479.2L859.0 478.7M859.6 480.5L862.3 479.9M862.9 481.7L865.6 481.2M866.3 483.0L869.0 482.4M869.8 484.3L872.5 483.7M873.3 485.6L876.0 485.0M880.5 488.3L883.2 487.7M884.2 489.7L887.0 489.0M888.0 491.1L890.7 490.4M891.9 492.5L894.6 491.9M895.8 494.0L898.6 493.3M899.8 495.5L902.6 494.8M903.9 497.0L906.7 496.3M912.3 500.2L915.1 499.5M916.7 501.8L919.5 501.1M921.1 503.5L923.9 502.7M925.7 505.2L928.5 504.4M930.3 506.9L933.1 506.1M935.1 508.7L937.9 507.9M939.9 510.5L942.7 509.7M949.9 514.2L952.7 513.4M955.1 516.2L957.9 515.3M960.4 518.1L963.2 517.2M965.8 520.2L968.6 519.2M971.4 522.2L974.2 521.3M977.0 524.4L979.9 523.4M982.9 526.5L985.7 525.5M994.9 531.1L997.7 530.0M1001.2 533.4L1004.0 532.3M1007.6 535.8L1010.4 534.7M1014.2 538.3L1017.0 537.1M1020.9 540.8L1023.7 539.6M1027.9 543.4L1030.6 542.2M1035.0 546.0L1037.7 544.8M1049.8 551.6L1052.5 550.3M1057.5 554.5L1060.2 553.1M1065.4 557.4L1068.1 556.0M1073.6 560.5L1076.3 559.0M1082.0 563.6L1084.6 562.1M1090.6 566.9L1093.2 565.3M1099.6 570.2L1102.1 568.6M1118.2 577.2L1120.7 575.5M1127.9 580.8L1130.4 579.1M1138.0 584.6L1140.4 582.8M1148.4 588.5L1150.7 586.6M1159.1 592.5L1161.4 590.5M1170.2 596.6L1172.4 594.6M1181.7 600.9L1183.8 598.8M1205.8 609.9L1207.8 607.7M1218.5 614.7L1220.5 612.4M1231.7 619.6L1233.5 617.2M1245.3 624.7L1247.1 622.2M1259.5 630.0L1261.2 627.4M1274.2 635.5L1275.8 632.8M1289.5 641.3L1291.0 638.4M1322.0 653.4L1323.2 650.4M1339.3 659.9L1340.3 656.7M1357.3 666.6L1358.1 663.3M1376.1 673.6L1376.6 670.1M1395.7 680.9L1396.0 677.3M835.8 451.5L838.0 451.2M838.2 452.2L840.4 451.9M840.6 453.0L842.8 452.7M843.1 453.8L845.3 453.5M848.2 455.4L850.4 455.1M850.8 456.2L853.0 455.9M853.4 457.0L855.6 456.7M856.0 457.9L858.3 457.5M858.7 458.7L861.0 458.4M861.5 459.6L863.7 459.2M864.3 460.5L866.5 460.1M870.0 462.3L872.2 461.9M872.9 463.2L875.2 462.8M875.8 464.1L878.1 463.7M878.9 465.1L881.1 464.7M881.9 466.0L884.2 465.6M885.0 467.0L887.3 466.6M888.2 468.0L890.5 467.6M894.6 470.0L896.9 469.6M898.0 471.1L900.3 470.6M901.3 472.1L903.6 471.7M904.8 473.2L907.1 472.8M908.2 474.3L910.6 473.8M911.8 475.4L914.1 475.0M915.4 476.6L917.7 476.1M922.8 478.9L925.1 478.4M926.6 480.1L928.9 479.6M930.5 481.3L932.8 480.8M934.4 482.6L936.7 482.0M938.4 483.8L940.7 483.3M942.5 485.1L944.8 484.5M946.6 486.4L949.0 485.8M955.2 489.1L957.5 488.5M959.6 490.5L961.9 489.9M964.1 491.9L966.4 491.3M968.6 493.4L971.0 492.7M973.3 494.8L975.6 494.2M978.1 496.3L980.4 495.7M982.9 497.9L985.2 497.2M992.9 501.0L995.2 500.3M998.0 502.6L1000.4 501.9M1003.3 504.3L1005.6 503.5M1008.7 506.0L1011.0 505.2M1014.2 507.7L1016.5 506.9M1019.8 509.5L1022.1 508.7M1025.5 511.3L1027.8 510.5M1037.3 515.0L1039.6 514.2M1043.4 516.9L1045.7 516.1M1049.7 518.9L1052.0 518.0M1056.1 520.9L1058.3 520.0M1062.7 523.0L1064.9 522.0M1069.4 525.1L1071.6 524.1M1076.2 527.3L1078.4 526.3M1090.5 531.8L1092.6 530.7M1097.8 534.1L1100.0 533.0M1105.4 536.5L1107.5 535.4M1113.2 538.9L1115.3 537.8M1121.1 541.4L1123.2 540.3M1129.3 544.0L1131.3 542.8M1137.7 546.6L1139.7 545.4M1155.1 552.1L1157.0 550.8M1164.2 555.0L1166.1 553.7M1173.5 558.0L1175.4 556.6M1183.1 561.0L1184.9 559.5M1193.0 564.1L1194.8 562.6M1203.2 567.3L1204.9 565.8M1213.6 570.6L1215.3 569.0M1235.5 577.5L1237.0 575.8M1247.0 581.1L1248.4 579.4M1258.8 584.8L1260.1 583.0M1270.9 588.7L1272.3 586.8M1283.5 592.6L1284.7 590.7M1296.5 596.7L1297.6 594.7M1309.9 601.0L1311.0 598.9M1338.2 609.9L1339.0 607.7M1353.1 614.5L1353.7 612.3M1368.5 619.4L1369.0 617.0M1384.4 624.4L1384.8 622.0M1401.0 629.7L1401.3 627.1M1418.2 635.1L1418.3 632.4M1436.0 640.7L1436.0 637.9M1473.9 652.6L1473.4 649.6M1494.0 659.0L1493.3 655.9M1514.9 665.6L1514.0 662.3M1536.8 672.5L1535.6 669.1M1559.6 679.6L1558.1 676.1M1484.0 614.4L1483.5 612.2M1501.5 619.2L1500.8 616.9M1519.6 624.2L1518.7 621.7M1538.4 629.3L1537.4 626.8M1557.9 634.6L1556.7 632.0M1578.2 640.2L1576.7 637.5M1556.7 601.1L1555.6 599.1M1592.5 609.7L1591.1 607.6M1611.4 614.3L1609.7 612.1M1603.9 585.5L1602.5 583.8M508.6 598.4L508.7 600.6M511.0 641.1L511.1 644.2M531.6 635.0L532.0 637.9M551.4 629.1L551.9 631.8M570.3 623.4L571.0 626.1M588.4 618.0L589.2 620.6M605.7 612.8L606.7 615.3M622.4 607.9L623.5 610.2M653.7 598.5L655.1 600.7M668.5 594.1L669.9 596.2M682.7 589.8L684.3 591.9M696.4 585.7L698.0 587.7M709.6 581.8L711.3 583.7M722.4 578.0L724.1 579.8M734.7 574.3L736.5 576.1M758.0 567.3L760.0 569.0M769.1 564.0L771.1 565.6M779.8 560.8L781.9 562.4M790.2 557.7L792.3 559.2M800.3 554.7L802.4 556.2M810.0 551.8L812.2 553.2M819.5 549.0L821.7 550.4M837.5 543.6L839.8 544.9M846.2 541.0L848.4 542.3M854.6 538.5L856.9 539.7M862.7 536.1L865.0 537.3M870.6 533.7L873.0 534.9M878.3 531.4L880.7 532.5M885.8 529.2L888.2 530.3M900.2 524.9L902.6 525.9M907.1 522.8L909.5 523.8M913.9 520.8L916.2 521.8M920.4 518.8L922.8 519.8M926.8 516.9L929.2 517.9M933.1 515.1L935.4 516.0M939.1 513.2L941.5 514.2M950.9 509.7L953.3 510.6M956.5 508.0L958.9 508.9M962.0 506.4L964.4 507.2M967.4 504.8L969.8 505.6M972.7 503.2L975.1 504.0M977.9 501.7L980.3 502.5M982.9 500.2L985.3 500.9M992.6 497.3L995.0 498.0M997.4 495.8L999.7 496.6M1002.0 494.5L1004.4 495.2M1006.5 493.1L1008.9 493.8M1010.9 491.8L1013.3 492.5M1015.2 490.5L1017.6 491.2M1019.5 489.2L1021.8 489.9M1027.7 486.8L1030.1 487.4M1031.7 485.6L1034.0 486.2M1035.6 484.4L1037.9 485.0M1039.4 483.3L1041.8 483.9M1043.2 482.2L1045.5 482.7M1046.9 481.1L1049.2 481.6M1050.5 480.0L1052.8 480.5M1057.5 477.9L1059.8 478.4M1061.0 476.9L1063.2 477.4M1064.3 475.8L1066.6 476.4M1067.6 474.9L1069.9 475.4M1070.8 473.9L1073.1 474.4M1074.0 472.9L1076.3 473.4M1077.1 472.0L1079.4 472.5M1083.2 470.2L1085.5 470.7M1086.2 469.3L1088.4 469.8M1089.1 468.4L1091.3 468.9M1092.0 467.6L1094.2 468.0M1094.8 466.7L1097.0 467.2M1097.6 465.9L1099.8 466.4M1100.3 465.1L1102.5 465.5M1105.6 463.5L1107.8 463.9M1108.2 462.7L1110.4 463.2M562.2 683.6L563.0 687.5M584.4 675.5L585.4 679.2M605.4 667.8L606.6 671.4M625.4 660.5L626.8 663.9M644.5 653.5L646.0 656.8M680.0 640.5L681.9 643.5M696.6 634.5L698.6 637.3M712.4 628.7L714.5 631.4M727.6 623.1L729.8 625.8M742.2 617.8L744.5 620.3M756.2 612.7L758.5 615.1M769.6 607.8L772.0 610.1M794.8 598.6L797.4 600.7M806.8 594.2L809.4 596.3M818.3 590.0L820.9 592.0M829.3 586.0L832.0 587.9M840.0 582.1L842.7 584.0M850.3 578.3L853.0 580.1M860.2 574.7L863.0 576.4M879.1 567.8L881.9 569.4M888.1 564.5L891.0 566.1M896.8 561.3L899.7 562.9M905.2 558.2L908.1 559.7M913.4 555.3L916.3 556.7M921.3 552.4L924.2 553.8M929.0 549.6L931.9 550.9M943.6 544.2L946.5 545.5M950.6 541.7L953.5 542.9M957.4 539.2L960.3 540.4M964.1 536.8L967.0 537.9M970.5 534.4L973.4 535.6M976.8 532.1L979.7 533.2M982.9 529.9L985.7 531.0M994.6 525.6L997.4 526.7M1000.2 523.6L1003.1 524.6M1005.7 521.6L1008.5 522.6M1011.0 519.6L1013.9 520.6M1016.2 517.7L1019.1 518.7M1021.3 515.8L1024.1 516.8M1026.2 514.0L1029.1 514.9M1035.8 510.5L1038.6 511.4M1040.4 508.9L1043.2 509.7M1044.9 507.2L1047.7 508.0M1049.3 505.6L1052.1 506.4M1053.6 504.0L1056.4 504.8M1057.8 502.5L1060.6 503.3M1061.9 501.0L1064.7 501.8M1069.9 498.1L1072.6 498.8M1073.7 496.7L1076.5 497.4M1077.5 495.3L1080.2 496.0M1081.2 494.0L1083.9 494.6M1084.8 492.6L1087.5 493.3M1088.3 491.3L1091.0 492.0M1091.8 490.1L1094.5 490.7M1098.5 487.6L1101.2 488.3M1101.8 486.4L1104.4 487.1M1105.0 485.3L1107.6 485.9M1108.1 484.1L1110.7 484.7M1111.2 483.0L1113.8 483.6M1114.2 481.9L1116.8 482.5M1117.2 480.8L1119.7 481.4M1122.9 478.7L1125.5 479.3M1125.7 477.7L1128.3 478.2M1128.5 476.7L1131.0 477.2M1131.2 475.7L1133.7 476.2M1133.8 474.7L1136.3 475.2M1136.4 473.8L1138.9 474.3M1139.0 472.8L1141.4 473.3M1143.9 471.0L1146.4 471.5M1146.4 470.1L1148.8 470.6M1148.8 469.3L1151.2 469.7M1151.1 468.4L1153.5 468.9M1153.4 467.6L1155.8 468.0M1155.7 466.7L1158.1 467.2M1157.9 465.9L1160.3 466.4M1162.3 464.3L1164.6 464.8M1164.4 463.5L1166.7 464.0M1166.5 462.8L1168.8 463.2M1168.6 462.0L1170.9 462.4M1170.6 461.3L1172.9 461.7M1172.6 460.6L1174.9 461.0M1174.5 459.8L1176.8 460.2M1178.4 458.4L1180.7 458.8M1180.3 457.8L1182.5 458.1M1182.1 457.1L1184.4 457.4M1183.9 456.4L1186.2 456.8M1185.7 455.8L1187.9 456.1M1187.5 455.1L1189.7 455.5M1189.2 454.5L1191.4 454.8M1192.6 453.2L1194.8 453.6M1194.3 452.6L1196.5 453.0M975.1 578.7L978.7 580.4M982.8 575.1L986.4 576.8M997.4 568.2L1001.1 569.8M1004.4 565.0L1008.0 566.5M1011.1 561.8L1014.8 563.3M1017.7 558.8L1021.3 560.3M1024.0 555.8L1027.6 557.3M1030.1 552.9L1033.7 554.3M1036.1 550.2L1039.7 551.5M1047.5 544.9L1051.0 546.1M1053.0 542.3L1056.5 543.6M1058.2 539.8L1061.8 541.0M1063.4 537.4L1066.9 538.6M1068.4 535.1L1071.9 536.2M1073.3 532.8L1076.7 533.9M1078.0 530.6L1081.5 531.7M1087.1 526.3L1090.5 527.4M1091.5 524.3L1094.9 525.3M1095.8 522.3L1099.2 523.3M1100.0 520.4L1103.3 521.3M1104.0 518.5L1107.3 519.4M1108.0 516.6L1111.3 517.5M1111.9 514.8L1115.1 515.7M1119.3 511.3L1122.5 512.2M1122.9 509.7L1126.1 510.5M1126.4 508.0L1129.6 508.8M1129.9 506.4L1133.0 507.2M1133.2 504.8L1136.4 505.6M1136.5 503.3L1139.6 504.1M1139.7 501.8L1142.8 502.6M1145.9 498.9L1149.0 499.6M1148.9 497.5L1152.0 498.2M1151.9 496.1L1154.9 496.8M1154.8 494.8L1157.8 495.5M1157.6 493.5L1160.6 494.1M1160.4 492.2L1163.4 492.8M1163.1 490.9L1166.0 491.6M1168.3 488.5L1171.3 489.1M1170.9 487.3L1173.8 487.9M1173.4 486.1L1176.3 486.7M1175.8 484.9L1178.7 485.5M1178.3 483.8L1181.1 484.4M1180.6 482.7L1183.5 483.3M1182.9 481.6L1185.8 482.2M1187.4 479.5L1190.2 480.1M1189.6 478.5L1192.4 479.0M1191.8 477.5L1194.5 478.0M1193.9 476.5L1196.6 477.0M1196.0 475.5L1198.7 476.1M1198.0 474.6L1200.7 475.1M1200.0 473.7L1202.7 474.2M1203.9 471.8L1206.6 472.3M1205.8 470.9L1208.5 471.4M1207.7 470.1L1210.3 470.5M1209.5 469.2L1212.2 469.7M1211.4 468.4L1214.0 468.8M1213.1 467.5L1215.7 468.0M1214.9 466.7L1217.5 467.2M1218.3 465.1L1220.9 465.6M1220.0 464.3L1222.5 464.8M1221.6 463.6L1224.1 464.0M1223.2 462.8L1225.7 463.2M1224.8 462.1L1227.3 462.5M1226.4 461.4L1228.9 461.8M1227.9 460.6L1230.4 461.0M1231.0 459.2L1233.4 459.6M1232.4 458.5L1234.8 458.9M1233.9 457.9L1236.3 458.2M1235.3 457.2L1237.7 457.6M1236.7 456.5L1239.1 456.9M1238.1 455.9L1240.5 456.2M1239.5 455.2L1241.8 455.6M1171.4 531.3L1175.4 532.4M1178.0 527.1L1181.9 528.1M1181.2 525.0L1185.1 526.0M1184.3 523.0L1188.1 524.0M1187.4 521.1L1191.1 522.1M1190.3 519.2L1194.1 520.2M1193.2 517.4L1196.9 518.3M1196.0 515.6L1199.7 516.5M1201.4 512.1L1205.1 513.0M1204.1 510.4L1207.7 511.3M1206.6 508.8L1210.2 509.6M1209.1 507.2L1212.7 508.0M1211.6 505.6L1215.1 506.4M1214.0 504.1L1217.5 504.9M1216.3 502.6L1219.8 503.4M1220.8 499.7L1224.2 500.4M1223.0 498.3L1226.4 499.0M1225.2 496.9L1228.5 497.6M1227.3 495.6L1230.6 496.3M1229.3 494.3L1232.6 495.0M1231.4 493.0L1234.6 493.7M1233.3 491.7L1236.6 492.4M1237.2 489.3L1240.4 489.9M1239.0 488.1L1242.2 488.7M1240.9 486.9L1244.0 487.5M1242.7 485.8L1245.8 486.4M1244.4 484.6L1247.5 485.2M1246.1 483.5L1249.2 484.1M1247.8 482.5L1250.9 483.0M1251.1 480.3L1254.2 480.9M1252.7 479.3L1255.7 479.9M1254.3 478.3L1257.3 478.8M1255.9 477.3L1258.8 477.9M1257.4 476.4L1260.3 476.9M1258.9 475.4L1261.8 475.9M1260.3 474.5L1263.2 475.0M1263.2 472.6L1266.1 473.1M1264.6 471.8L1267.4 472.2M1265.9 470.9L1268.8 471.3M1267.3 470.0L1270.1 470.5M1268.6 469.2L1271.4 469.6M1269.9 468.3L1272.7 468.8M1271.2 467.5L1274.0 468.0M1273.7 465.9L1276.4 466.3M1274.9 465.1L1277.6 465.6M1276.1 464.4L1278.8 464.8M1277.3 463.6L1280.0 464.0M1278.5 462.9L1281.1 463.3M1279.6 462.1L1282.3 462.5M1280.8 461.4L1283.4 461.8M1283.9 511.2L1287.9 512.1M1285.5 509.6L1289.5 510.4M1287.1 508.0L1291.0 508.8M1288.7 506.4L1292.5 507.2M1290.2 504.9L1294.0 505.7M1291.7 503.4L1295.5 504.2M1294.6 500.5L1298.3 501.2M1296.0 499.1L1299.7 499.8M1297.4 497.7L1301.0 498.4M1298.7 496.4L1302.4 497.1M1300.0 495.1L1303.6 495.8M1301.3 493.8L1304.9 494.5M1302.6 492.5L1306.1 493.2M1305.1 490.1L1308.5 490.7M1306.2 488.9L1309.7 489.5M1307.4 487.7L1310.8 488.3M1308.6 486.6L1312.0 487.2M1309.7 485.4L1313.1 486.0M1310.8 484.3L1314.1 484.9M1311.9 483.3L1315.2 483.8M1314.0 481.2L1317.3 481.7M1315.0 480.1L1318.3 480.7M1316.0 479.1L1319.2 479.7M1317.0 478.1L1320.2 478.7M1318.0 477.2L1321.2 477.7M1319.0 476.2L1322.1 476.7M1319.9 475.3L1323.0 475.8M1321.7 473.4L1324.8 473.9M1322.6 472.5L1325.7 473.0M1323.5 471.7L1326.5 472.1M1324.4 470.8L1327.4 471.3M1325.2 470.0L1328.2 470.4M1326.0 469.1L1329.0 469.6M1326.9 468.3L1329.8 468.7M1367.9 499.9L1371.9 500.6M1368.5 498.5L1372.5 499.2M1369.1 497.2L1373.1 497.9M1369.7 495.9L1373.6 496.5M1370.3 494.6L1374.2 495.2M1370.9 493.3L1374.7 494.0M1372.0 490.9L1375.7 491.5M1372.5 489.7L1376.3 490.3M1373.1 488.5L1376.7 489.1M1373.6 487.4L1377.2 488.0M1374.1 486.2L1377.7 486.8M1374.6 485.1L1378.2 485.7M1375.1 484.1L1378.6 484.6M1376.1 481.9L1379.5 482.5M1376.5 480.9L1380.0 481.5M1377.0 479.9L1380.4 480.4M1377.4 478.9L1380.8 479.4M1377.9 478.0L1381.2 478.5M1378.3 477.0L1381.7 477.5M1378.7 476.1L1382.1 476.6M1438.0 491.7L1442.0 492.3M1437.9 490.5L1441.9 491.1M1437.8 489.3L1441.8 489.9M1437.8 488.1L1441.6 488.7M1437.7 487.0L1441.5 487.6M1437.6 485.9L1441.4 486.5M1437.5 484.8L1441.3 485.4" stroke="#1c2a44" stroke-opacity="0.16" stroke-width="0.5" fill="none"/>
<g clip-path="url(#cstrip)"><path filter="url(#soft)" d="M410.0 481.3 L324.4 620.3 L330.5 618.9 L412.8 481.0Z M491.2 472.2 L484.2 734.7 L491.5 731.8 L493.5 471.9Z M560.3 464.4 L706.3 731.9 L711.8 729.2 L562.4 464.2Z M620.0 457.8 L930.8 739.8 L934.6 737.0 L621.8 457.6Z M672.0 451.9 L1140.3 737.0 L1142.4 734.2 L673.5 451.7Z M717.7 446.8 L1341.2 734.3 L1341.9 731.6 L719.1 446.6Z M758.2 442.3 L1561.4 741.9 L1560.5 739.1 L759.4 442.1Z M794.3 438.2 L1661.0 710.8 L1659.4 708.5 L795.4 438.1Z M826.8 434.6 L1666.9 663.8 L1665.5 662.1 L827.7 434.5Z M856.0 431.3 L1671.4 628.4 L1670.2 627.1 L856.9 431.2Z M882.6 428.3 L1656.2 596.6 L1655.2 595.6 L883.4 428.2Z M906.8 425.6 L1660.8 575.0 L1659.9 574.2 L907.5 425.5Z M928.9 423.1 L1664.6 557.3 L1663.8 556.6 L929.6 423.0Z M949.3 420.8 L1667.8 542.4 L1667.0 541.8 L949.9 420.8Z M968.0 418.7 L1670.5 529.7 L1669.7 529.2 L968.6 418.7Z M985.4 416.8 L1672.8 518.9 L1672.1 518.4 L985.9 416.7Z M1001.4 415.0 L1663.6 507.8 L1662.9 507.4 L1001.9 414.9Z M1016.4 413.3 L1666.0 499.7 L1665.4 499.4 L1016.9 413.3Z M327.9 490.7 L1016.9 413.3 L1016.4 413.3 L328.4 490.3Z M332.9 501.8 L1034.1 415.6 L1033.5 415.5 L333.4 501.4Z M327.8 516.3 L1052.5 418.1 L1051.9 418.0 L328.3 515.7Z M333.7 531.7 L1072.2 420.7 L1071.5 420.6 L334.3 531.0Z M327.7 552.3 L1093.3 423.5 L1092.6 423.4 L328.3 551.5Z M334.9 575.0 L1116.1 426.5 L1115.3 426.4 L335.6 574.1Z M327.4 606.8 L1140.6 429.8 L1139.8 429.7 L328.2 605.5Z M336.8 643.7 L1167.1 433.3 L1166.3 433.2 L337.6 642.0Z M327.0 698.9 L1196.0 437.1 L1195.0 437.0 L328.1 696.6Z M414.3 741.4 L1227.4 441.3 L1226.3 441.2 L414.9 738.6Z M644.3 737.7 L1261.7 445.9 L1260.6 445.7 L643.2 735.0Z M851.1 742.3 L1299.4 450.9 L1298.2 450.7 L848.6 739.5Z M1065.4 738.7 L1341.1 456.4 L1339.7 456.2 L1061.5 736.0Z M1270.0 735.2 L1387.3 462.5 L1385.7 462.3 L1264.9 732.6Z M1466.5 739.6 L1438.8 469.4 L1437.0 469.1 L1460.0 737.0Z M1657.6 736.2 L1496.6 477.1 L1494.6 476.8 L1650.0 733.7Z M1675.4 586.5 L1561.9 485.7 L1559.7 485.4 L1670.9 585.6Z M1674.4 519.1 L1636.4 495.6 L1633.8 495.3 L1671.3 518.6Z" fill="#1c2a44" fill-opacity="0.22"/></g>
<g clip-path="url(#clws)"><path filter="url(#soft)" d="M907.9 282.7 L907.7 425.8 L908.4 425.7 L908.7 282.9Z M930.8 286.5 L929.8 423.3 L930.5 423.2 L931.5 286.6Z M951.8 289.9 L950.1 421.0 L950.7 420.9 L952.4 290.0Z M971.1 293.1 L968.8 418.9 L969.4 418.8 L971.7 293.2Z M988.8 296.0 L986.1 416.9 L986.6 416.9 L989.4 296.1Z M1005.2 298.7 L1002.1 415.1 L1002.6 415.1 L1005.7 298.8Z M1020.5 301.2 L1017.0 413.4 L1017.4 413.4 L1020.9 301.2Z M908.2 312.7 L1020.0 324.5 L1020.0 323.8 L908.2 311.8Z M908.2 341.7 L1019.3 347.2 L1019.3 346.5 L908.2 340.8Z M908.1 370.3 L1018.6 369.7 L1018.6 369.0 L908.1 369.4Z M908.1 398.5 L1017.9 391.8 L1017.9 391.1 L908.1 397.6Z" fill="#1c2a44" fill-opacity="0.3"/></g>
<polygon points="1018.6,300.2 1624.0,252.2 1580.8,488.2 1016.3,412.9" fill="url(#gback)" />
<g clip-path="url(#cback)"><path filter="url(#soft)" d="M1037.0 300.3 L1033.2 415.1 L1033.7 415.2 L1037.5 300.2Z M1056.0 298.7 L1051.5 417.6 L1052.1 417.7 L1056.6 298.7Z M1076.5 297.1 L1071.1 420.2 L1071.8 420.3 L1077.1 297.1Z M1098.5 295.4 L1092.2 423.0 L1092.9 423.1 L1099.2 295.3Z M1122.2 293.5 L1114.9 426.1 L1115.6 426.2 L1123.0 293.4Z M1147.9 291.4 L1139.3 429.4 L1140.2 429.5 L1148.7 291.4Z M1175.8 289.2 L1165.8 432.9 L1166.7 433.0 L1176.7 289.2Z M1206.1 286.8 L1194.6 436.7 L1195.5 436.9 L1207.1 286.7Z M1239.3 284.2 L1225.9 440.9 L1226.9 441.1 L1240.5 284.1Z M1275.8 281.3 L1260.2 445.5 L1261.3 445.7 L1277.0 281.2Z M1316.1 278.1 L1297.8 450.6 L1299.1 450.7 L1317.4 278.0Z M1360.7 274.5 L1339.4 456.1 L1340.8 456.3 L1362.2 274.4Z M1410.4 270.6 L1385.5 462.3 L1387.0 462.5 L1412.1 270.4Z M1466.2 266.1 L1436.9 469.2 L1438.7 469.4 L1468.1 266.0Z M1529.3 261.1 L1494.7 476.9 L1496.6 477.2 L1531.5 260.9Z M1601.2 255.4 L1560.0 485.7 L1562.2 486.0 L1603.7 255.2Z M1018.8 324.8 L1668.5 301.8 L1668.8 300.2 L1018.8 324.1Z M1018.1 347.3 L1664.5 352.3 L1664.8 350.7 L1018.2 346.6Z M1017.5 369.5 L1654.6 401.6 L1654.9 400.1 L1017.5 368.8Z M1016.9 391.5 L1644.9 449.7 L1645.2 448.2 L1016.9 390.8Z" fill="#1c2433" fill-opacity="0.36"/></g>
<g clip-path="url(#cback)"><path filter="url(#soft)" d="M1028.1 301.0 L1024.6 414.0 L1024.8 414.0 L1028.3 301.0Z M1046.5 299.5 L1042.4 416.4 L1042.6 416.4 L1046.7 299.5Z M1066.3 297.9 L1061.4 418.9 L1061.6 418.9 L1066.5 297.9Z M1087.5 296.2 L1081.7 421.6 L1081.9 421.7 L1087.7 296.2Z M1110.4 294.4 L1103.6 424.6 L1103.8 424.6 L1110.6 294.4Z M1135.1 292.5 L1127.1 427.7 L1127.4 427.8 L1135.3 292.4Z M1161.8 290.3 L1152.6 431.1 L1152.9 431.2 L1162.1 290.3Z M1190.9 288.0 L1180.2 434.8 L1180.5 434.9 L1191.2 288.0Z M1222.7 285.5 L1210.2 438.8 L1210.5 438.9 L1223.1 285.5Z M1257.5 282.7 L1243.0 443.2 L1243.4 443.3 L1257.9 282.7Z M1295.9 279.7 L1279.0 448.0 L1279.3 448.1 L1296.3 279.6Z M1338.3 276.3 L1318.5 453.3 L1319.0 453.4 L1338.7 276.3Z M1385.4 272.6 L1362.3 459.2 L1362.8 459.3 L1385.9 272.5Z M1438.1 268.4 L1411.0 465.7 L1411.6 465.8 L1438.7 268.3Z M1497.5 263.6 L1465.6 473.0 L1466.1 473.1 L1498.1 263.6Z M1564.9 258.3 L1527.0 481.2 L1527.6 481.3 L1565.6 258.2Z M1641.9 252.2 L1596.7 490.6 L1597.5 490.7 L1642.8 252.1Z M1019.1 313.2 L1673.7 275.6 L1673.8 275.0 L1019.1 313.0Z M1018.5 335.8 L1669.6 326.6 L1669.7 326.1 L1018.5 335.6Z M1017.8 358.2 L1659.6 376.6 L1659.7 376.1 L1017.8 358.0Z M1017.2 380.3 L1649.8 425.3 L1649.9 424.8 L1017.2 380.1Z M1016.6 402.2 L1640.3 472.7 L1640.4 472.3 L1016.6 401.9Z" fill="#1c2433" fill-opacity="0.13"/></g>
<path clip-path="url(#cback)" d="M1274.9 285.6L1277.2 285.4M1274.5 289.9L1276.8 289.7M1274.1 294.1L1276.3 294.0M1273.7 298.4L1275.9 298.3M1273.3 302.6L1275.5 302.5M1272.8 306.9L1275.1 306.8M1272.4 311.1L1274.7 311.0M1271.6 319.5L1273.9 319.4M1271.2 323.7L1273.5 323.7M1270.8 327.9L1273.1 327.9M1270.5 332.1L1272.7 332.1M1270.1 336.3L1272.3 336.2M1269.7 340.4L1271.9 340.4M1269.3 344.6L1271.5 344.6M1268.5 352.8L1270.7 352.9M1268.1 357.0L1270.3 357.0M1267.7 361.1L1269.9 361.1M1267.3 365.2L1269.5 365.3M1266.9 369.3L1269.1 369.4M1266.5 373.4L1268.7 373.5M1266.1 377.5L1268.4 377.6M1265.4 385.6L1267.6 385.7M1265.0 389.6L1267.2 389.8M1264.6 393.7L1266.8 393.8M1264.2 397.7L1266.4 397.9M1263.8 401.7L1266.0 401.9M1315.0 282.6L1317.5 282.4M1314.5 287.1L1317.0 286.9M1314.0 291.6L1316.6 291.4M1313.6 296.1L1316.1 295.9M1313.1 300.6L1315.6 300.4M1312.6 305.0L1315.1 304.9M1312.2 309.4L1314.7 309.3M1311.2 318.3L1313.7 318.2M1310.8 322.7L1313.3 322.7M1310.3 327.1L1312.8 327.1M1309.8 331.5L1312.3 331.5M1309.4 335.9L1311.8 335.9M1308.9 340.3L1311.4 340.3M1308.4 344.6L1310.9 344.6M1307.5 353.3L1310.0 353.4M1307.1 357.7L1309.5 357.7M1306.6 362.0L1309.1 362.0M1306.2 366.3L1308.6 366.4M1305.7 370.6L1308.2 370.7M1305.2 374.9L1307.7 375.0M1304.8 379.2L1307.2 379.3M1303.9 387.7L1306.3 387.8M1303.4 392.0L1305.9 392.1M1303.0 396.2L1305.4 396.4M1302.6 400.4L1305.0 400.6M1302.1 404.7L1304.5 404.8M1301.7 408.9L1304.1 409.1M1301.2 413.1L1303.6 413.3M1300.3 421.5L1302.7 421.7M1299.9 425.6L1302.3 425.9M1299.5 429.8L1301.8 430.1M1299.0 434.0L1301.4 434.2M1298.6 438.1L1301.0 438.4M1298.1 442.2L1300.5 442.5M1297.7 446.4L1300.1 446.7M1359.5 279.3L1362.3 279.1M1358.9 284.1L1361.7 283.9M1358.3 288.8L1361.2 288.6M1357.8 293.5L1360.6 293.4M1357.2 298.2L1360.0 298.1M1356.7 302.9L1359.5 302.8M1356.1 307.6L1358.9 307.5M1355.0 317.0L1357.8 316.9M1354.5 321.6L1357.3 321.5M1354.0 326.3L1356.7 326.2M1353.4 330.9L1356.2 330.8M1352.9 335.5L1355.6 335.5M1352.3 340.1L1355.1 340.1M1351.8 344.7L1354.6 344.7M1350.7 353.9L1353.5 353.9M1350.2 358.4L1352.9 358.5M1349.7 363.0L1352.4 363.0M1349.1 367.5L1351.9 367.6M1348.6 372.0L1351.3 372.1M1348.1 376.6L1350.8 376.7M1347.5 381.1L1350.3 381.2M1346.5 390.0L1349.2 390.2M1346.0 394.5L1348.7 394.7M1345.4 399.0L1348.1 399.2M1344.9 403.4L1347.6 403.6M1344.4 407.9L1347.1 408.1M1343.9 412.3L1346.6 412.5M1343.4 416.7L1346.0 417.0M1342.3 425.5L1345.0 425.8M1341.8 429.9L1344.5 430.2M1341.3 434.3L1344.0 434.6M1340.8 438.7L1343.4 439.0M1340.3 443.0L1342.9 443.3M1339.8 447.4L1342.4 447.7M1339.3 451.7L1341.9 452.1M1409.0 275.7L1412.2 275.4M1408.4 280.7L1411.5 280.5M1407.7 285.7L1410.9 285.5M1407.1 290.7L1410.2 290.5M1406.4 295.7L1409.6 295.5M1405.8 300.6L1408.9 300.5M1405.1 305.6L1408.3 305.5M1403.9 315.5L1407.0 315.4M1403.2 320.4L1406.3 320.3M1402.6 325.3L1405.7 325.2M1401.9 330.2L1405.0 330.1M1401.3 335.1L1404.4 335.0M1400.7 339.9L1403.8 339.9M1400.1 344.8L1403.1 344.8M1398.8 354.5L1401.9 354.5M1398.2 359.3L1401.2 359.3M1397.5 364.1L1400.6 364.2M1396.9 368.9L1400.0 369.0M1396.3 373.7L1399.3 373.8M1395.7 378.4L1398.7 378.5M1395.1 383.2L1398.1 383.3M1393.8 392.7L1396.8 392.8M1393.2 397.4L1396.2 397.6M1392.6 402.1L1395.6 402.3M1392.0 406.8L1395.0 407.0M1391.4 411.5L1394.4 411.7M1390.8 416.1L1393.8 416.4M1390.2 420.8L1393.2 421.0M1389.0 430.1L1391.9 430.4M1388.4 434.7L1391.3 435.0M1387.8 439.3L1390.7 439.6M1387.2 443.9L1390.1 444.2M1386.6 448.5L1389.5 448.9M1386.0 453.1L1388.9 453.4M1385.4 457.7L1388.3 458.0M1464.6 271.5L1468.2 271.3M1463.9 276.9L1467.4 276.6M1463.1 282.2L1466.7 282.0M1462.3 287.5L1465.9 287.3M1461.6 292.8L1465.1 292.6M1460.8 298.1L1464.3 297.9M1460.1 303.3L1463.6 303.2M1458.6 313.8L1462.0 313.7M1457.8 319.0L1461.3 318.9M1457.1 324.2L1460.5 324.1M1456.3 329.4L1459.8 329.4M1455.6 334.6L1459.0 334.5M1454.8 339.7L1458.3 339.7M1454.1 344.9L1457.5 344.9M1452.6 355.1L1456.0 355.2M1451.9 360.2L1455.3 360.3M1451.1 365.3L1454.5 365.4M1450.4 370.4L1453.8 370.5M1449.7 375.5L1453.1 375.6M1448.9 380.5L1452.3 380.6M1448.2 385.5L1451.6 385.7M1446.8 395.6L1450.1 395.8M1446.0 400.6L1449.4 400.8M1445.3 405.5L1448.7 405.8M1444.6 410.5L1448.0 410.7M1443.9 415.5L1447.2 415.7M1443.2 420.4L1446.5 420.7M1442.5 425.3L1445.8 425.6M1441.0 435.1L1444.4 435.5M1440.3 440.0L1443.7 440.4M1439.6 444.9L1442.9 445.3M1438.9 449.8L1442.2 450.1M1438.2 454.6L1441.5 455.0M1437.5 459.4L1440.8 459.9M1436.8 464.3L1440.1 464.7M1527.5 266.9L1531.5 266.6M1526.6 272.6L1530.6 272.3M1525.7 278.2L1529.7 278.0M1524.8 283.9L1528.8 283.7M1523.9 289.5L1527.8 289.3M1523.0 295.1L1526.9 295.0M1522.1 300.8L1526.0 300.6M1520.3 311.9L1524.2 311.8M1519.4 317.5L1523.3 317.4M1518.5 323.0L1522.4 322.9M1517.6 328.5L1521.5 328.5M1516.7 334.0L1520.6 334.0M1515.8 339.5L1519.7 339.5M1515.0 345.0L1518.9 345.0M1513.2 355.9L1517.1 355.9M1512.3 361.3L1516.2 361.4M1511.5 366.7L1515.3 366.8M1510.6 372.1L1514.5 372.2M1509.7 377.5L1513.6 377.6M1508.9 382.8L1512.7 383.0M1508.0 388.2L1511.8 388.4M1506.3 398.8L1510.1 399.1M1505.5 404.1L1509.3 404.4M1504.6 409.4L1508.4 409.7M1503.8 414.7L1507.5 415.0M1502.9 420.0L1506.7 420.2M1502.1 425.2L1505.8 425.5M1501.2 430.4L1505.0 430.7M1499.6 440.8L1503.3 441.2M1498.7 446.0L1502.5 446.4M1497.9 451.2L1501.6 451.6M1497.1 456.3L1500.8 456.8M1496.3 461.5L1500.0 461.9M1495.4 466.6L1499.1 467.1M1494.6 471.7L1498.3 472.2M1340.0 311.8L1339.8 314.0M1345.7 311.6L1345.4 313.8M1351.3 311.3L1351.1 313.6M1363.0 310.9L1362.7 313.2M1368.9 310.7L1368.6 313.0M1374.9 310.5L1374.6 312.8M1381.0 310.2L1380.7 312.5M1387.2 310.0L1386.9 312.3M1393.4 309.8L1393.1 312.1M1399.8 309.5L1399.5 311.9M1412.7 309.1L1412.4 311.4M1419.4 308.8L1419.0 311.2M1426.1 308.6L1425.8 311.0M1432.9 308.3L1432.6 310.7M1439.8 308.0L1439.5 310.5M1446.9 307.8L1446.5 310.3M1454.0 307.5L1453.6 310.0M1468.6 307.0L1468.2 309.5M1476.0 306.7L1475.7 309.2M1483.6 306.4L1483.2 309.0M1491.3 306.1L1490.9 308.7M1499.1 305.8L1498.7 308.4M1507.1 305.5L1506.7 308.2M1515.2 305.2L1514.7 307.9M1531.7 304.6L1531.2 307.3M1540.1 304.3L1539.7 307.0M1548.8 304.0L1548.3 306.7M1557.5 303.6L1557.0 306.4M1566.4 303.3L1565.9 306.1M1575.4 303.0L1575.0 305.8M1584.6 302.6L1584.1 305.5M1603.5 301.9L1603.0 304.8M1613.2 301.6L1612.7 304.5M1347.1 348.2L1346.8 350.4M1358.5 348.2L1358.3 350.4M1364.4 348.3L1364.1 350.5M1370.3 348.3L1370.0 350.5M1376.3 348.3L1376.0 350.6M1382.3 348.4L1382.1 350.6M1388.5 348.4L1388.2 350.7M1394.8 348.4L1394.5 350.7M1407.5 348.5L1407.2 350.9M1414.1 348.6L1413.7 350.9M1420.7 348.6L1420.3 351.0M1427.4 348.6L1427.0 351.0M1434.2 348.7L1433.9 351.1M1441.1 348.7L1440.8 351.1M1448.1 348.7L1447.8 351.2M1462.4 348.8L1462.1 351.3M1469.8 348.9L1469.4 351.4M1477.2 348.9L1476.8 351.4M1484.8 349.0L1484.4 351.5M1492.5 349.0L1492.1 351.6M1500.3 349.0L1499.9 351.6M1508.2 349.1L1507.8 351.7M1524.4 349.2L1524.0 351.8M1532.7 349.2L1532.3 351.9M1541.2 349.3L1540.7 352.0M1549.7 349.3L1549.3 352.0M1558.5 349.4L1558.0 352.1M1567.3 349.4L1566.9 352.2M1576.4 349.5L1575.9 352.3M1594.9 349.6L1594.3 352.4M1604.3 349.6L1603.8 352.5M1614.0 349.7L1613.5 352.6M1359.9 385.1L1359.7 387.3M1365.7 385.4L1365.5 387.6M1371.7 385.7L1371.4 387.9M1377.6 386.0L1377.4 388.2M1383.7 386.3L1383.4 388.5M1389.9 386.6L1389.6 388.8M1402.4 387.2L1402.1 389.5M1408.8 387.5L1408.5 389.8M1415.4 387.8L1415.0 390.1M1422.0 388.1L1421.6 390.5M1428.7 388.4L1428.3 390.8M1435.4 388.8L1435.1 391.1M1442.3 389.1L1442.0 391.5M1456.4 389.8L1456.1 392.2M1463.6 390.1L1463.3 392.6M1471.0 390.5L1470.6 392.9M1478.4 390.8L1478.0 393.3M1485.9 391.2L1485.6 393.7M1493.6 391.6L1493.2 394.1M1501.4 392.0L1501.0 394.5M1517.3 392.7L1516.9 395.3M1525.5 393.1L1525.0 395.7M1533.7 393.5L1533.3 396.1M1542.2 393.9L1541.7 396.6M1550.7 394.3L1550.3 397.0M1559.4 394.8L1558.9 397.5M1568.3 395.2L1567.8 397.9M1586.4 396.1L1585.9 398.8M1595.7 396.5L1595.2 399.3M1605.2 397.0L1604.6 399.8M1614.8 397.4L1614.2 400.3M1373.0 422.8L1372.7 425.0M1379.0 423.4L1378.7 425.6M1385.1 423.9L1384.8 426.1M1397.4 425.0L1397.1 427.3M1403.7 425.6L1403.4 427.9M1410.2 426.2L1409.8 428.5M1416.6 426.8L1416.3 429.1M1423.2 427.4L1422.9 429.7M1429.9 428.0L1429.6 430.3M1436.7 428.6L1436.4 430.9M1450.6 429.8L1450.2 432.2M1457.7 430.5L1457.3 432.9M1464.8 431.1L1464.5 433.6M1472.1 431.8L1471.8 434.2M1479.6 432.5L1479.2 434.9M1487.1 433.2L1486.7 435.6M1494.7 433.9L1494.3 436.3M1510.4 435.3L1509.9 437.8M1518.4 436.0L1517.9 438.5M1526.5 436.7L1526.1 439.3M1534.8 437.5L1534.3 440.1M1543.2 438.2L1542.7 440.8M1551.7 439.0L1551.2 441.6M1560.4 439.8L1559.9 442.4M1578.1 441.4L1577.7 444.1M1587.3 442.2L1586.8 445.0M1596.5 443.1L1596.0 445.8M1606.0 443.9L1605.4 446.7M1615.6 444.8L1615.0 447.6" stroke="#1c2433" stroke-opacity="0.15" stroke-width="0.5" fill="none"/>
<path clip-path="url(#cback)" d="M1599.0 261.6L1603.7 261.2M1598.0 267.7L1602.6 267.4M1596.9 273.7L1601.5 273.5M1595.8 279.8L1600.4 279.5M1594.7 285.8L1599.3 285.6M1593.6 291.8L1598.2 291.6M1592.6 297.8L1597.1 297.6M1590.4 309.8L1594.9 309.6M1589.4 315.7L1593.9 315.6M1588.3 321.6L1592.8 321.5M1587.2 327.5L1591.7 327.4M1586.2 333.4L1590.7 333.3M1585.1 339.3L1589.6 339.2M1584.1 345.1L1588.6 345.1M1582.0 356.7L1586.4 356.8M1581.0 362.5L1585.4 362.6M1580.0 368.3L1584.4 368.4M1578.9 374.0L1583.3 374.2M1577.9 379.8L1582.3 379.9M1576.9 385.5L1581.2 385.7M1575.9 391.2L1580.2 391.4M1573.8 402.6L1578.2 402.8M1572.8 408.2L1577.1 408.5M1571.8 413.8L1576.1 414.1M1570.8 419.5L1575.1 419.8M1569.8 425.1L1574.1 425.4M1568.8 430.6L1573.1 431.0M1567.8 436.2L1572.1 436.6M1565.8 447.3L1570.1 447.7M1564.8 452.8L1569.1 453.2M1563.9 458.3L1568.1 458.7M1562.9 463.8L1567.1 464.2M1561.9 469.2L1566.1 469.7M1560.9 474.7L1565.1 475.2M1560.0 480.1L1564.1 480.6" stroke="#1c2433" stroke-opacity="0.15" stroke-width="1.0" fill="none"/>
<polygon points="1622.0,251.7 1700.0,200.0 1700.0,560.0 1578.8,488.2" fill="#8fa2be" />
<g clip-path="url(#cright)"><path filter="url(#soft)" d="M1674.4 372.0 L1640.7 537.9 L1639.9 537.3 L1673.6 372.0Z M1674.2 249.0 L1620.4 521.9 L1619.8 521.4 L1673.4 249.4Z M1656.5 232.9 L1603.7 508.7 L1603.2 508.3 L1655.9 233.3Z M1637.0 244.2 L1589.5 497.5 L1589.1 497.2 L1636.4 244.6Z M1620.5 253.8 L1577.5 488.0 L1577.1 487.7 L1620.0 254.1Z M1673.4 282.6 L1611.1 303.9 L1611.3 302.3 L1673.8 280.5Z M1673.2 345.5 L1602.3 351.8 L1602.5 350.2 L1673.6 343.4Z M1673.0 413.1 L1593.7 398.5 L1594.0 397.0 L1673.4 410.9Z M1673.7 486.3 L1585.3 444.1 L1585.6 442.6 L1674.2 484.1Z" fill="#1c2a44" fill-opacity="0.3"/></g>
<g clip-path="url(#cright)"><path filter="url(#soft)" d="M1673.9 441.9 L1652.2 547.0 L1651.9 546.8 L1673.7 441.8Z M1674.0 308.4 L1629.8 529.3 L1629.6 529.2 L1673.8 308.5Z M1667.5 226.5 L1611.5 514.8 L1611.3 514.7 L1667.3 226.7Z M1646.1 238.9 L1596.1 502.7 L1596.0 502.6 L1645.9 239.0Z M1628.2 249.3 L1583.1 492.5 L1583.0 492.4 L1628.0 249.4Z M1613.0 258.2 L1572.0 483.6 L1571.9 483.5 L1612.8 258.2Z M1673.2 252.2 L1615.6 278.9 L1615.7 278.4 L1673.3 251.6Z M1673.9 312.7 L1606.7 327.4 L1606.8 327.0 L1674.0 312.0Z M1673.7 378.0 L1598.0 374.7 L1598.1 374.3 L1673.8 377.3Z M1673.5 448.2 L1589.6 420.9 L1589.7 420.4 L1673.6 447.5Z M1673.3 523.9 L1581.3 465.9 L1581.4 465.5 L1673.4 523.2Z" fill="#1c2a44" fill-opacity="0.2"/></g>
<polygon points="448.3,149.0 1614.0,149.0 1614.0,254.9 1020.7,301.2 461.6,209.7" fill="#74706c" />
<g clip-path="url(#cceil)"><rect x="387" y="100" width="633.7" height="300" fill="url(#gglowL)"/><rect x="1020.7" y="100" width="600" height="300" fill="url(#gglowR)"/></g>
<g clip-path="url(#cceil)"><path filter="url(#soft)" d="M369.1 194.5 L327.5 146.0 L331.1 146.7 L371.7 195.0Z M460.5 209.5 L428.8 91.3 L433.1 92.5 L462.7 209.9Z M537.3 222.1 L582.4 89.9 L586.0 91.1 L539.2 222.4Z M602.8 232.8 L742.8 88.5 L745.8 89.8 L604.4 233.1Z M659.3 242.1 L902.5 92.0 L904.8 93.2 L660.7 242.3Z M708.5 250.2 L1074.4 90.6 L1076.0 91.9 L709.7 250.4Z M751.8 257.3 L1254.3 89.2 L1255.1 90.5 L752.8 257.4Z M790.1 263.5 L1423.6 92.8 L1423.6 94.1 L791.0 263.7Z M824.3 269.2 L1616.8 91.4 L1615.9 92.7 L825.1 269.3Z M855.0 274.2 L1669.4 118.6 L1668.3 119.6 L855.7 274.3Z M882.7 278.7 L1672.3 147.9 L1671.4 148.8 L883.3 278.8Z M907.8 282.8 L1657.2 173.8 L1656.4 174.5 L908.4 283.0Z M930.7 286.6 L1660.7 192.3 L1660.0 192.8 L931.3 286.7Z M951.6 290.0 L1663.6 207.7 L1662.9 208.1 L952.2 290.1Z M970.9 293.2 L1666.0 220.6 L1665.4 221.0 L971.4 293.3Z M988.6 296.1 L1668.1 231.8 L1667.5 232.1 L989.1 296.2Z M1005.0 298.8 L1669.9 241.4 L1669.4 241.7 L1005.4 298.9Z M1020.2 301.3 L1671.5 249.8 L1671.0 250.0 L1020.6 301.4Z M326.9 187.5 L1020.7 301.3 L1020.2 301.3 L327.3 187.8Z M332.0 176.0 L1038.5 299.9 L1038.0 299.9 L332.4 176.5Z M338.0 162.7 L1057.5 298.4 L1057.0 298.4 L338.4 163.2Z M332.5 144.4 L1078.0 296.8 L1077.4 296.8 L332.9 145.0Z M339.7 125.1 L1100.0 295.0 L1099.4 295.1 L340.2 125.8Z M333.1 97.5 L1123.7 293.2 L1123.0 293.2 L333.7 98.4Z M424.0 89.5 L1149.3 291.1 L1148.6 291.2 L424.3 90.5Z M550.7 89.6 L1177.2 288.9 L1176.4 289.0 L550.5 90.5Z M680.8 89.6 L1207.5 286.5 L1206.7 286.6 L680.1 90.6Z M814.5 89.7 L1240.7 283.9 L1239.8 284.0 L813.2 90.7Z M951.8 89.7 L1277.1 281.0 L1276.1 281.1 L950.0 90.8Z M1093.0 89.8 L1317.2 277.9 L1316.1 278.0 L1090.6 90.8Z M1238.2 89.8 L1361.7 274.4 L1360.5 274.5 L1235.1 90.9Z M1387.6 89.9 L1411.3 270.4 L1409.9 270.5 L1383.8 91.0Z M1541.3 90.0 L1466.9 266.0 L1465.3 266.2 L1536.8 91.1Z M1673.9 115.8 L1529.7 261.1 L1527.9 261.2 L1669.3 116.7Z M1675.1 208.7 L1601.2 255.4 L1599.2 255.6 L1672.1 209.0Z" fill="#000" fill-opacity="0.2"/></g>
<g clip-path="url(#cceil)"><path filter="url(#soft)" d="M417.6 202.5 L355.9 92.3 L357.6 92.7 L418.5 202.6Z M501.1 216.2 L506.0 91.0 L507.5 91.4 L501.9 216.3Z M571.9 227.8 L662.7 89.6 L664.0 90.1 L572.5 227.9Z M632.5 237.7 L820.2 93.1 L821.2 93.5 L633.1 237.8Z M685.1 246.3 L988.1 91.7 L988.8 92.2 L685.6 246.4Z M731.1 253.9 L1163.7 90.3 L1164.1 90.8 L731.6 254.0Z M771.8 260.5 L1347.6 88.8 L1347.7 89.3 L772.2 260.6Z M807.9 266.5 L1518.9 92.5 L1518.8 93.0 L808.3 266.5Z M840.3 271.8 L1667.2 101.2 L1666.8 101.7 L840.6 271.8Z M869.4 276.6 L1670.6 134.4 L1670.2 134.8 L869.6 276.6Z M895.7 280.9 L1673.3 160.5 L1672.9 160.7 L896.0 280.9Z M919.7 284.8 L1658.8 183.7 L1658.5 183.9 L919.9 284.8Z M941.6 288.4 L1662.0 200.5 L1661.7 200.6 L941.8 288.4Z M961.6 291.7 L1664.7 214.5 L1664.4 214.7 L961.8 291.7Z M980.1 294.7 L1666.9 226.5 L1666.7 226.6 L980.3 294.7Z M997.1 297.5 L1668.9 236.8 L1668.7 236.9 L997.3 297.5Z M1012.9 300.1 L1670.6 245.8 L1670.4 245.9 L1013.1 300.1Z M329.5 182.1 L1029.3 300.6 L1029.1 300.6 L329.7 182.2Z M335.0 169.8 L1047.7 299.2 L1047.5 299.2 L335.2 170.0Z M329.4 153.0 L1067.4 297.6 L1067.2 297.6 L329.6 153.2Z M336.1 135.4 L1088.6 295.9 L1088.4 296.0 L336.3 135.7Z M329.3 110.6 L1111.4 294.1 L1111.2 294.2 L329.6 110.9Z M370.0 91.8 L1136.0 292.2 L1135.8 292.2 L370.1 92.2Z M494.0 91.9 L1162.7 290.1 L1162.5 290.1 L494.0 92.3Z M621.4 92.0 L1191.8 287.8 L1191.5 287.8 L621.2 92.4Z M752.1 92.1 L1223.4 285.3 L1223.1 285.3 L751.8 92.5Z M886.5 92.2 L1258.1 282.5 L1257.8 282.6 L885.9 92.6Z M1024.5 92.3 L1296.3 279.5 L1295.9 279.6 L1023.6 92.7Z M1166.3 92.4 L1338.5 276.2 L1338.0 276.2 L1165.3 92.8Z M1312.2 92.5 L1385.4 272.5 L1384.9 272.5 L1310.9 92.9Z M1462.3 92.6 L1437.8 268.3 L1437.3 268.4 L1460.7 93.0Z M1616.7 92.7 L1496.8 263.7 L1496.2 263.7 L1614.9 93.1Z M1673.5 172.6 L1563.7 258.4 L1563.0 258.5 L1672.1 172.8Z M1672.6 235.1 L1640.1 252.4 L1639.3 252.4 L1671.6 235.1Z" fill="#000" fill-opacity="0.09"/></g>
<path clip-path="url(#cceil)" d="M458.7 208.0L463.8 208.8M458.4 206.6L463.5 207.5M458.0 205.2L463.1 206.1M457.6 203.8L462.8 204.7M457.2 202.4L462.5 203.3M456.8 200.9L462.1 201.9M456.4 199.4L461.7 200.4M455.5 196.4L461.0 197.3M455.1 194.8L460.6 195.8M454.6 193.1L460.2 194.1M454.2 191.5L459.8 192.5M453.7 189.8L459.4 190.8M453.2 188.0L459.0 189.1M452.7 186.3L458.6 187.4M451.7 182.6L457.7 183.7M451.1 180.7L457.3 181.8M450.6 178.7L456.8 179.9M450.0 176.7L456.3 177.9M449.5 174.7L455.8 175.9M448.9 172.6L455.3 173.8M448.3 170.4L454.8 171.7M536.5 220.8L540.8 221.5M536.9 219.7L541.2 220.4M537.3 218.5L541.6 219.3M537.6 217.4L542.0 218.1M538.0 216.2L542.5 217.0M538.4 215.0L542.9 215.8M538.8 213.8L543.3 214.5M539.7 211.2L544.3 212.0M540.1 209.9L544.7 210.7M540.5 208.6L545.2 209.4M541.0 207.2L545.7 208.1M541.4 205.8L546.2 206.7M541.9 204.4L546.7 205.3M542.4 203.0L547.3 203.9M543.4 200.0L548.3 201.0M543.9 198.5L548.9 199.4M544.4 196.9L549.5 197.9M544.9 195.3L550.0 196.3M545.5 193.7L550.6 194.7M546.0 192.0L551.3 193.0M546.6 190.3L551.9 191.3M547.8 186.7L553.2 187.8M548.4 184.9L553.8 186.0M549.0 183.0L554.5 184.1M549.6 181.0L555.2 182.2M550.3 179.1L555.9 180.3M551.0 177.0L556.7 178.3M551.7 175.0L557.4 176.2M553.1 170.7L559.0 172.0M553.8 168.4L559.8 169.8M554.6 166.1L560.6 167.5M555.4 163.8L561.5 165.2M556.2 161.3L562.4 162.8M557.0 158.8L563.3 160.3M557.8 156.3L564.2 157.8M559.6 150.9L566.1 152.6M615.8 218.1L619.8 218.8M616.9 216.9L621.0 217.7M619.3 214.4L623.4 215.2M620.5 213.2L624.7 214.0M621.7 211.9L625.9 212.7M623.0 210.6L627.2 211.4M624.3 209.2L628.5 210.1M625.6 207.9L629.9 208.7M626.9 206.5L631.3 207.4M629.7 203.6L634.1 204.5M631.1 202.1L635.6 203.0M632.6 200.6L637.1 201.5M634.0 199.0L638.6 200.0M635.6 197.5L640.2 198.4M637.1 195.8L641.8 196.8M638.7 194.2L643.4 195.2M642.0 190.8L646.8 191.8M643.7 189.0L648.5 190.1M645.4 187.2L650.3 188.3M647.2 185.3L652.1 186.4M649.1 183.4L654.0 184.6M650.9 181.4L655.9 182.6M652.8 179.4L657.9 180.7M656.8 175.3L662.0 176.6M658.9 173.1L664.1 174.5M661.0 170.9L666.3 172.3M663.2 168.6L668.5 170.0M665.4 166.3L670.8 167.7M667.7 163.9L673.2 165.4M670.1 161.5L675.6 163.0M675.0 156.3L680.6 157.9M677.6 153.6L683.2 155.3M680.2 150.9L685.9 152.6M683.0 148.1L688.7 149.8M685.8 145.1L691.6 146.9M721.5 202.7L725.5 203.7M724.0 201.2L728.0 202.2M726.5 199.6L730.6 200.6M729.1 198.0L733.2 199.0M734.4 194.7L738.6 195.8M737.2 193.0L741.3 194.1M740.0 191.3L744.2 192.3M742.9 189.5L747.1 190.6M745.8 187.6L750.1 188.8M748.8 185.8L753.2 186.9M751.9 183.8L756.3 185.0M758.4 179.8L762.8 181.1M761.7 177.7L766.2 179.0M765.1 175.6L769.6 176.9M768.7 173.4L773.2 174.8M772.3 171.2L776.8 172.6M776.0 168.9L780.6 170.3M779.8 166.5L784.4 168.0M787.7 161.6L792.4 163.1M791.9 159.0L796.6 160.6M796.1 156.4L800.9 158.0M800.5 153.7L805.3 155.3M805.0 150.9L809.8 152.5M809.6 148.0L814.5 149.7M814.4 145.0L819.3 146.8M897.8 166.7L901.6 168.2M903.4 164.3L907.3 165.8M909.2 161.7L913.1 163.3M915.2 159.1L919.0 160.7M921.3 156.4L925.2 158.1M927.6 153.7L931.5 155.3M934.1 150.8L938.0 152.5M947.7 144.8L951.6 146.7M1039.4 144.1L1043.6 142.6M1046.0 147.9L1050.2 146.5M1052.4 151.6L1056.5 150.2M1064.5 158.7L1068.6 157.4M1070.3 162.0L1074.3 160.8M1075.9 165.3L1079.9 164.0M1081.3 168.4L1085.3 167.2M1086.6 171.5L1090.5 170.3M1155.5 146.3L1160.5 144.8M1160.1 150.1L1165.1 148.7M1164.6 153.8L1169.5 152.4M1168.9 157.4L1173.8 156.0M1177.1 164.1L1181.9 162.9M1181.0 167.4L1185.8 166.1M1184.8 170.5L1189.5 169.3M1188.5 173.5L1193.2 172.4M1192.1 176.4L1196.7 175.3M1195.5 179.3L1200.1 178.2M1198.9 182.1L1203.4 181.0M1205.3 187.3L1209.7 186.4M1208.4 189.9L1212.8 188.9M1211.4 192.3L1215.7 191.4M1214.3 194.7L1218.6 193.9M1217.1 197.1L1221.4 196.2M1219.9 199.3L1224.1 198.5M1222.6 201.6L1226.7 200.7M1227.7 205.8L1231.8 205.0M1230.2 207.9L1234.3 207.1M1269.8 144.6L1275.8 143.1M1272.5 148.5L1278.5 147.1M1275.1 152.3L1281.0 150.9M1277.6 156.0L1283.5 154.6M1280.1 159.5L1285.8 158.2M1282.5 162.9L1288.1 161.7M1287.0 169.5L1292.5 168.2M1289.1 172.6L1294.5 171.4M1291.2 175.6L1296.6 174.4M1293.2 178.5L1298.5 177.4M1295.2 181.3L1300.4 180.3M1297.1 184.1L1302.2 183.0M1298.9 186.7L1304.0 185.7M1302.4 191.8L1307.4 190.9M1304.1 194.3L1309.0 193.4M1305.8 196.6L1310.6 195.8M1307.4 199.0L1312.2 198.1M1308.9 201.2L1313.7 200.4M1310.5 203.4L1315.1 202.6M1311.9 205.5L1316.6 204.8M1314.8 209.6L1319.3 208.9M1316.1 211.6L1320.6 210.9M1317.5 213.6L1321.9 212.9M1318.8 215.4L1323.2 214.8M1320.1 217.3L1324.4 216.6M1321.3 219.1L1325.6 218.4M1322.5 220.8L1326.8 220.2M1324.8 224.2L1329.0 223.6M1326.0 225.8L1330.1 225.2M1327.1 227.4L1331.2 226.9M1392.2 161.7L1398.7 160.4M1392.7 165.1L1399.2 163.8M1393.2 168.4L1399.6 167.2M1394.2 174.7L1400.3 173.5M1394.6 177.6L1400.7 176.5M1395.1 180.5L1401.1 179.4M1395.5 183.3L1401.4 182.3M1395.9 186.1L1401.7 185.0M1396.3 188.7L1402.1 187.7M1396.7 191.3L1402.4 190.3M1397.5 196.2L1403.0 195.3M1397.9 198.6L1403.3 197.7M1398.2 200.9L1403.6 200.0M1398.6 203.1L1403.8 202.3M1398.9 205.3L1404.1 204.5M1399.2 207.4L1404.4 206.6M1399.5 209.4L1404.6 208.7M1400.2 213.4L1405.1 212.7M1400.5 215.3L1405.4 214.6M1400.7 217.2L1405.6 216.5M1401.0 219.0L1405.8 218.4M1401.3 220.8L1406.0 220.2M1401.6 222.5L1406.2 221.9M1401.8 224.2L1406.5 223.6M1402.3 227.5L1406.9 226.9M1402.6 229.1L1407.0 228.5M1402.8 230.6L1407.2 230.1M1403.1 232.1L1407.4 231.6M1403.3 233.6L1407.6 233.1M1403.5 235.0L1407.8 234.5M1403.7 236.5L1408.0 236.0M1404.2 239.2L1408.3 238.7M1404.4 240.5L1408.5 240.1M1497.7 182.6L1504.4 181.5M1496.6 185.4L1503.2 184.3M1495.5 188.1L1502.0 187.1M1494.4 190.7L1500.8 189.7M1493.4 193.3L1499.7 192.3M1492.4 195.7L1498.6 194.8M1490.5 200.5L1496.5 199.6M1489.6 202.8L1495.6 201.9M1488.8 205.0L1494.6 204.2M1487.9 207.1L1493.6 206.3M1487.1 209.2L1492.7 208.5M1486.2 211.3L1491.8 210.5M1485.5 213.3L1491.0 212.5M1483.9 217.1L1489.3 216.4M1483.2 219.0L1488.5 218.3M1482.5 220.8L1487.7 220.1M1481.8 222.5L1486.9 221.9M1481.1 224.2L1486.2 223.6M1480.4 225.9L1485.4 225.3M1479.8 227.6L1484.7 227.0M1478.5 230.7L1483.3 230.2M1477.9 232.3L1482.7 231.7M1477.3 233.8L1482.0 233.2M1476.7 235.2L1481.4 234.7M1476.1 236.6L1480.8 236.1M1475.6 238.0L1480.2 237.6M1475.0 239.4L1479.6 238.9M1586.1 200.1L1592.8 199.2M1581.6 204.7L1588.1 203.9M1579.5 206.9L1585.9 206.1M1577.5 209.0L1583.7 208.2M1575.4 211.1L1581.6 210.3M1573.5 213.1L1579.6 212.4M1571.6 215.1L1577.6 214.4M1569.7 217.0L1575.6 216.3M1566.1 220.7L1571.9 220.1M1564.4 222.5L1570.0 221.9M1562.7 224.3L1568.3 223.6M1561.0 226.0L1566.6 225.4M1559.4 227.6L1564.9 227.0M1557.9 229.3L1563.2 228.7M1556.3 230.8L1561.6 230.3" stroke="#000" stroke-opacity="0.05" stroke-width="1.0" fill="none"/>
<path clip-path="url(#cceil)" d="M447.0 165.9L453.7 167.3M446.4 163.6L453.2 165.0M445.7 161.2L452.6 162.6M445.0 158.7L452.0 160.2M444.3 156.2L451.4 157.7M443.6 153.6L450.8 155.2M442.9 151.0L450.2 152.6M441.3 145.4L448.8 147.1M560.5 148.1L567.1 149.8M561.5 145.3L568.2 147.0M1389.9 146.9L1396.9 145.4M1390.5 150.8L1397.4 149.3M1391.1 154.6L1397.9 153.1M1391.6 158.2L1398.3 156.8M1512.6 145.2L1520.8 143.6M1509.4 153.1L1517.3 151.6M1507.9 156.8L1515.7 155.4M1506.5 160.4L1514.1 159.1M1505.1 163.9L1512.6 162.6M1503.8 167.3L1511.1 166.0M1502.5 170.5L1509.6 169.3M1501.2 173.7L1508.3 172.5M1498.8 179.7L1505.6 178.6M1619.0 166.1L1627.3 164.8M1615.7 169.5L1623.9 168.2M1612.6 172.7L1620.6 171.5M1609.6 175.9L1617.4 174.7M1606.6 178.9L1614.3 177.8M1601.0 184.7L1608.4 183.6M1598.3 187.4L1605.6 186.4M1595.7 190.1L1602.9 189.1M1593.2 192.7L1600.3 191.8M1590.8 195.3L1597.7 194.3M1588.4 197.7L1595.2 196.8" stroke="#000" stroke-opacity="0.05" stroke-width="1.5" fill="none"/>
<path clip-path="url(#cceil)" d="M602.7 231.7L606.3 232.4M603.6 230.8L607.3 231.4M604.5 229.8L608.2 230.5M605.4 228.9L609.2 229.5M606.4 227.9L610.2 228.5M607.4 226.9L611.2 227.5M608.3 225.8L612.2 226.5M610.4 223.7L614.3 224.4M611.4 222.6L615.3 223.3M612.5 221.5L616.4 222.2M613.6 220.4L617.5 221.1M614.7 219.3L618.7 220.0M659.7 241.2L662.8 241.7M661.0 240.4L664.1 240.9M662.3 239.5L665.5 240.1M663.6 238.7L666.8 239.3M665.0 237.9L668.2 238.4M666.3 237.0L669.6 237.6M667.7 236.2L671.0 236.7M670.6 234.4L673.9 235.0M672.1 233.5L675.4 234.0M673.6 232.5L677.0 233.1M675.1 231.6L678.5 232.2M676.7 230.6L680.1 231.2M678.2 229.6L681.7 230.3M679.8 228.6L683.3 229.3M683.1 226.6L686.6 227.3M684.8 225.5L688.4 226.2M686.5 224.5L690.1 225.2M688.3 223.4L691.9 224.1M690.1 222.3L693.7 223.0M691.9 221.1L695.5 221.9M693.8 220.0L697.4 220.7M697.6 217.6L701.3 218.4M699.5 216.4L703.3 217.2M701.5 215.1L705.3 215.9M703.6 213.9L707.4 214.7M705.7 212.6L709.5 213.4M707.8 211.3L711.6 212.1M710.0 209.9L713.8 210.8M714.4 207.1L718.4 208.0M716.8 205.7L720.7 206.6M719.1 204.2L723.1 205.1M709.3 249.4L712.0 249.8M710.8 248.7L713.6 249.1M712.4 248.0L715.2 248.4M714.1 247.3L716.9 247.7M715.7 246.5L718.5 247.0M717.4 245.8L720.2 246.3M719.1 245.1L721.9 245.6M722.5 243.5L725.4 244.1M724.3 242.8L727.2 243.3M726.1 242.0L729.0 242.5M728.0 241.2L730.9 241.7M729.8 240.4L732.8 240.9M731.7 239.5L734.7 240.1M733.6 238.7L736.6 239.2M737.6 236.9L740.6 237.5M739.6 236.1L742.6 236.6M741.7 235.2L744.7 235.8M743.8 234.2L746.8 234.8M745.9 233.3L749.0 233.9M748.1 232.4L751.2 233.0M750.3 231.4L753.4 232.0M754.8 229.4L757.9 230.1M757.1 228.4L760.3 229.1M759.5 227.4L762.7 228.0M761.9 226.3L765.1 227.0M764.3 225.2L767.5 225.9M766.8 224.1L770.1 224.8M769.4 223.0L772.6 223.7M774.6 220.7L777.9 221.5M777.3 219.5L780.6 220.3M780.1 218.3L783.4 219.1M782.9 217.1L786.2 217.9M785.7 215.9L789.1 216.7M788.6 214.6L792.0 215.4M791.6 213.3L795.0 214.1M797.7 210.6L801.2 211.4M800.9 209.2L804.3 210.1M804.1 207.8L807.6 208.7M807.4 206.3L810.9 207.3M810.8 204.9L814.3 205.8M814.2 203.4L817.8 204.3M817.8 201.8L821.3 202.8M825.0 198.6L828.6 199.6M828.8 197.0L832.4 198.0M832.7 195.3L836.3 196.3M836.6 193.6L840.2 194.6M840.6 191.8L844.3 192.9M844.8 190.0L848.4 191.1M849.0 188.1L852.7 189.3M857.8 184.3L861.5 185.5M862.3 182.3L866.1 183.5M867.0 180.2L870.8 181.5M871.8 178.1L875.6 179.4M876.7 176.0L880.5 177.3M881.8 173.7L885.6 175.1M887.0 171.5L890.8 172.9M752.8 256.6L755.3 257.0M754.6 256.0L757.0 256.4M756.4 255.4L758.9 255.8M758.2 254.7L760.7 255.2M760.1 254.1L762.6 254.5M762.0 253.5L764.5 253.9M763.9 252.8L766.4 253.3M767.8 251.5L770.3 252.0M769.8 250.9L772.3 251.3M771.8 250.2L774.3 250.6M773.9 249.5L776.4 250.0M775.9 248.8L778.5 249.3M778.1 248.1L780.6 248.6M780.2 247.4L782.8 247.8M784.6 245.9L787.2 246.4M786.8 245.1L789.5 245.6M789.1 244.4L791.8 244.9M791.5 243.6L794.1 244.1M793.8 242.8L796.5 243.3M796.2 242.0L798.9 242.5M798.6 241.2L801.3 241.7M803.6 239.5L806.3 240.1M806.2 238.6L808.9 239.2M808.8 237.8L811.5 238.3M811.4 236.9L814.2 237.5M814.1 236.0L816.9 236.6M816.9 235.0L819.6 235.7M819.7 234.1L822.4 234.7M825.4 232.2L828.2 232.8M828.3 231.2L831.1 231.9M831.3 230.2L834.1 230.9M834.3 229.2L837.2 229.8M837.4 228.1L840.3 228.8M840.6 227.1L843.4 227.8M843.8 226.0L846.7 226.7M850.4 223.8L853.3 224.5M853.8 222.6L856.7 223.4M857.3 221.5L860.2 222.2M860.8 220.3L863.7 221.1M864.4 219.1L867.3 219.9M868.1 217.8L871.0 218.6M871.8 216.6L874.8 217.4M879.6 214.0L882.5 214.8M883.6 212.7L886.5 213.5M887.6 211.3L890.6 212.2M891.8 209.9L894.8 210.8M896.0 208.5L899.0 209.4M900.4 207.0L903.4 207.9M904.8 205.5L907.8 206.5M914.0 202.4L917.0 203.4M918.7 200.8L921.7 201.8M923.5 199.2L926.6 200.2M928.5 197.6L931.5 198.6M933.6 195.9L936.6 196.9M938.8 194.1L941.8 195.2M944.1 192.3L947.1 193.4M955.1 188.6L958.2 189.8M960.9 186.7L963.9 187.9M966.7 184.7L969.8 185.9M972.7 182.7L975.8 183.9M978.9 180.6L982.0 181.9M985.3 178.5L988.3 179.8M991.8 176.3L994.8 177.7M1005.3 171.8L1008.3 173.2M1012.4 169.4L1015.4 170.8M1019.6 167.0L1022.6 168.4M1027.1 164.5L1030.0 166.0M1034.7 161.9L1037.7 163.4M1042.6 159.2L1045.6 160.8M1050.8 156.5L1053.7 158.1M1067.8 150.8L1070.7 152.5M1076.7 147.8L1079.5 149.6M1085.9 144.7L1088.7 146.6M791.4 262.9L793.5 263.3M793.3 262.4L795.5 262.8M795.2 261.9L797.4 262.2M797.2 261.3L799.4 261.7M799.2 260.8L801.4 261.2M801.3 260.3L803.5 260.6M803.3 259.7L805.5 260.1M807.5 258.6L809.8 259.0M809.7 258.0L811.9 258.4M811.9 257.4L814.1 257.8M814.1 256.8L816.3 257.2M816.3 256.2L818.6 256.6M818.6 255.6L820.8 256.0M820.9 255.0L823.2 255.4M825.6 253.7L827.9 254.1M828.0 253.0L830.3 253.5M830.4 252.4L832.7 252.8M832.9 251.7L835.2 252.2M835.4 251.0L837.7 251.5M838.0 250.3L840.3 250.8M840.5 249.6L842.9 250.1M845.8 248.2L848.2 248.7M848.6 247.5L850.9 248.0M851.3 246.7L853.7 247.2M854.1 246.0L856.5 246.5M856.9 245.2L859.3 245.7M859.8 244.4L862.2 244.9M862.8 243.6L865.1 244.2M868.8 242.0L871.2 242.5M871.8 241.2L874.3 241.7M875.0 240.3L877.4 240.9M878.2 239.5L880.6 240.0M881.4 238.6L883.8 239.2M884.7 237.7L887.1 238.3M888.0 236.8L890.5 237.4M894.9 234.9L897.4 235.5M898.4 234.0L900.9 234.6M902.0 233.0L904.5 233.6M905.7 232.0L908.1 232.7M909.4 231.0L911.9 231.7M913.2 230.0L915.7 230.7M917.1 228.9L919.5 229.6M925.0 226.8L927.5 227.5M929.1 225.7L931.6 226.4M933.2 224.6L935.7 225.3M937.5 223.4L940.0 224.2M941.8 222.3L944.3 223.0M946.2 221.1L948.7 221.8M950.7 219.8L953.2 220.6M960.0 217.3L962.5 218.1M964.8 216.0L967.3 216.9M969.6 214.7L972.1 215.6M974.6 213.4L977.1 214.2M979.7 212.0L982.2 212.9M984.9 210.6L987.4 211.5M990.2 209.2L992.7 210.1M1001.2 206.2L1003.7 207.1M1006.9 204.7L1009.3 205.6M1012.7 203.1L1015.1 204.1M1018.6 201.5L1021.1 202.5M1024.7 199.8L1027.1 200.9M1030.9 198.2L1033.3 199.2M1037.3 196.4L1039.7 197.5M1050.5 192.9L1052.9 194.0M1057.3 191.0L1059.7 192.2M1064.3 189.1L1066.7 190.3M1071.5 187.2L1073.9 188.4M1078.9 185.2L1081.2 186.4M1086.4 183.1L1088.8 184.4M1094.2 181.0L1096.5 182.3M1110.4 176.7L1112.6 178.0M1118.8 174.4L1121.0 175.8M1127.4 172.1L1129.6 173.5M1136.3 169.7L1138.4 171.1M1145.4 167.2L1147.5 168.7M1154.9 164.6L1156.9 166.2M1164.5 162.0L1166.5 163.6M1184.8 156.5L1186.7 158.2M1195.4 153.7L1197.2 155.4M1206.3 150.7L1208.1 152.5M1217.6 147.7L1219.3 149.5M1229.2 144.5L1230.9 146.4M963.4 237.6L965.5 238.2M967.5 236.7L969.6 237.3M971.7 235.8L973.8 236.4M975.9 234.8L978.1 235.4M980.3 233.8L982.4 234.5M984.7 232.9L986.8 233.5M989.2 231.8L991.3 232.5M998.4 229.8L1000.5 230.4M1003.1 228.7L1005.2 229.4M1008.0 227.6L1010.1 228.3M1012.9 226.5L1015.0 227.2M1017.9 225.4L1020.0 226.1M1023.0 224.2L1025.1 225.0M1028.3 223.0L1030.3 223.8M1039.0 220.6L1041.1 221.4M1598.9 159.7L1597.4 161.4M1616.5 156.7L1614.9 158.5M743.9 152.4L745.6 151.0M754.7 155.8L756.5 154.5M765.1 159.1L767.0 157.8M775.3 162.3L777.1 161.1M794.6 168.4L796.6 167.3M803.9 171.4L805.8 170.3M812.9 174.2L814.9 173.1M821.6 177.0L823.6 175.9M830.1 179.6L832.1 178.6M838.3 182.3L840.4 181.3M846.3 184.8L848.4 183.8M861.7 189.7L863.9 188.8M869.1 192.0L871.3 191.1M876.3 194.3L878.5 193.4M883.4 196.5L885.5 195.7M890.2 198.7L892.4 197.9M896.9 200.8L899.1 200.0M903.4 202.8L905.6 202.1M915.9 206.8L918.1 206.1M922.0 208.7L924.2 208.0M927.9 210.6L930.1 209.9M933.7 212.4L935.9 211.7M939.3 214.2L941.5 213.5M944.8 215.9L947.0 215.3M950.2 217.6L952.4 217.0M960.6 220.9L962.8 220.3M965.6 222.5L967.9 222.0M970.6 224.1L972.8 223.5M975.4 225.6L977.6 225.1M980.1 227.1L982.3 226.6M984.7 228.6L986.9 228.0M989.3 230.0L991.5 229.5M998.0 232.8L1000.2 232.3M1002.3 234.1L1004.5 233.6M1006.5 235.4L1008.7 235.0M1010.6 236.7L1012.8 236.3M1014.6 238.0L1016.8 237.6M1018.5 239.2L1020.7 238.8M1022.4 240.5L1024.6 240.0M1029.9 242.8L1032.1 242.4M1033.5 244.0L1035.7 243.6M830.7 147.3L833.2 145.9M840.5 151.0L843.0 149.6M849.9 154.5L852.4 153.1M859.1 157.9L861.6 156.6M867.9 161.1L870.5 159.9M876.5 164.3L879.1 163.1M884.9 167.4L887.4 166.3M900.8 173.3L903.4 172.2M908.4 176.1L911.0 175.1M915.8 178.9L918.4 177.9M922.9 181.6L925.6 180.6M929.9 184.1L932.6 183.2M936.7 186.7L939.4 185.7M943.3 189.1L946.0 188.2M956.0 193.8L958.7 193.0M962.1 196.1L964.8 195.3M968.0 198.3L970.7 197.5M973.8 200.4L976.5 199.6M979.5 202.5L982.1 201.8M985.0 204.6L987.6 203.8M990.3 206.6L993.0 205.8M1000.7 210.4L1003.3 209.7M1005.7 212.3L1008.3 211.6M1010.6 214.1L1013.2 213.4M1015.3 215.8L1017.9 215.2M1020.0 217.6L1022.6 216.9M1024.5 219.3L1027.1 218.6M1029.0 220.9L1031.6 220.3M1037.6 224.1L1040.2 223.5M1041.8 225.6L1044.3 225.1M1045.8 227.2L1048.4 226.6M1049.8 228.6L1052.4 228.1M1053.7 230.1L1056.3 229.6M1057.6 231.5L1060.1 231.0M1061.3 232.9L1063.8 232.4M1068.6 235.6L1071.1 235.1M1072.1 236.9L1074.6 236.4M1075.6 238.2L1078.0 237.7M1079.0 239.4L1081.4 239.0M1082.3 240.7L1084.7 240.3M1085.5 241.9L1088.0 241.5M1088.7 243.1L1091.2 242.7M1095.0 245.4L1097.4 245.0M1098.0 246.5L1100.4 246.1M1101.0 247.6L1103.4 247.2M1103.9 248.7L1106.3 248.3M1106.7 249.8L1109.1 249.4M1109.6 250.8L1111.9 250.4M1112.3 251.8L1114.7 251.5M1117.7 253.8L1120.0 253.5M1120.3 254.8L1122.7 254.5M1122.9 255.8L1125.2 255.4M1125.4 256.7L1127.7 256.4M1127.9 257.6L1130.2 257.3M1130.4 258.5L1132.7 258.2M1132.8 259.4L1135.1 259.1M1137.5 261.2L1139.8 260.9M1139.8 262.0L1142.0 261.7M1142.1 262.9L1144.3 262.6M1144.3 263.7L1146.5 263.4M1146.5 264.5L1148.7 264.2M1148.6 265.3L1150.8 265.0M1150.7 266.1L1152.9 265.8M932.9 145.7L936.2 144.3M949.1 153.1L952.4 151.7M956.8 156.6L960.1 155.2M964.3 159.9L967.6 158.7M971.5 163.2L974.8 162.0M978.5 166.4L981.8 165.2M985.3 169.4L988.6 168.3M991.9 172.4L995.2 171.3M1004.5 178.1L1007.8 177.1M1010.6 180.8L1013.8 179.8M1016.4 183.5L1019.7 182.5M1022.1 186.0L1025.3 185.1M1027.7 188.5L1030.9 187.6M1033.1 191.0L1036.3 190.1M1038.3 193.3L1041.5 192.5M1048.4 197.9L1051.5 197.1M1053.2 200.1L1056.4 199.3M1058.0 202.2L1061.1 201.4M1062.6 204.3L1065.7 203.5M1067.0 206.3L1070.1 205.6M1071.4 208.3L1074.5 207.6M1075.7 210.2L1078.8 209.5M1083.9 213.9L1087.0 213.3M1087.9 215.7L1090.9 215.1M1091.8 217.5L1094.8 216.9M1095.6 219.2L1098.6 218.6M1099.3 220.9L1102.3 220.3M1102.9 222.5L1105.9 221.9M1106.5 224.1L1109.4 223.6M1113.3 227.2L1116.2 226.7M1116.7 228.7L1119.5 228.2M1119.9 230.2L1122.8 229.7M1123.1 231.6L1126.0 231.1M1126.2 233.0L1129.1 232.5M1129.3 234.4L1132.1 233.9M1132.3 235.8L1135.1 235.3M1138.1 238.4L1140.8 237.9M1140.9 239.7L1143.6 239.2M1143.6 240.9L1146.4 240.5M1146.3 242.1L1149.1 241.7M1149.0 243.3L1151.7 242.9M1151.6 244.5L1154.3 244.1M1154.2 245.7L1156.9 245.3M1159.1 247.9L1161.8 247.5M1161.6 249.0L1164.2 248.6M1163.9 250.1L1166.6 249.7M1166.3 251.1L1168.9 250.8M1168.5 252.1L1171.2 251.8M1170.8 253.2L1173.4 252.8M1173.0 254.2L1175.6 253.8M1177.3 256.1L1179.9 255.8M1179.4 257.1L1181.9 256.7M1181.5 258.0L1184.0 257.7M1183.5 258.9L1186.0 258.6M1185.5 259.8L1188.0 259.5M1187.5 260.7L1189.9 260.4M1189.4 261.6L1191.9 261.3M1193.2 263.3L1195.6 263.0M1195.0 264.1L1197.4 263.8M1196.8 264.9L1199.2 264.6M1198.6 265.7L1201.0 265.5M1200.3 266.5L1202.7 266.2M1202.1 267.3L1204.4 267.0M1203.8 268.1L1206.1 267.8M1091.7 174.4L1095.6 173.3M1096.6 177.3L1100.5 176.2M1106.0 182.8L1109.9 181.8M1110.6 185.4L1114.4 184.4M1115.0 188.0L1118.7 187.0M1119.2 190.4L1123.0 189.5M1123.4 192.9L1127.1 192.0M1127.4 195.2L1131.1 194.3M1131.4 197.5L1135.1 196.7M1138.9 201.9L1142.6 201.1M1142.6 204.0L1146.2 203.2M1146.1 206.1L1149.7 205.3M1149.6 208.1L1153.1 207.3M1153.0 210.0L1156.5 209.3M1156.3 212.0L1159.8 211.3M1159.5 213.8L1163.0 213.1M1165.7 217.4L1169.1 216.8M1168.7 219.2L1172.1 218.5M1171.6 220.9L1175.0 220.3M1174.5 222.5L1177.8 221.9M1177.2 224.1L1180.6 223.6M1180.0 225.7L1183.3 225.2M1182.7 227.3L1185.9 226.7M1187.8 230.3L1191.1 229.8M1190.3 231.7L1193.5 231.2M1192.8 233.2L1196.0 232.7M1195.2 234.6L1198.3 234.1M1197.5 235.9L1200.7 235.5M1199.8 237.3L1203.0 236.8M1202.1 238.6L1205.2 238.1M1206.5 241.1L1209.5 240.7M1208.6 242.4L1211.6 241.9M1210.7 243.6L1213.7 243.2M1212.7 244.8L1215.7 244.3M1214.7 245.9L1217.7 245.5M1216.7 247.1L1219.7 246.7M1218.6 248.2L1221.6 247.8M1222.4 250.4L1225.3 250.0M1224.2 251.4L1227.1 251.1M1226.0 252.5L1228.9 252.1M1227.8 253.5L1230.6 253.2M1229.5 254.5L1232.3 254.2M1231.2 255.5L1234.0 255.2M1232.9 256.5L1235.7 256.1M1236.1 258.4L1238.9 258.0M1237.7 259.3L1240.5 259.0M1239.3 260.2L1242.0 259.9M1240.8 261.1L1243.5 260.8M1242.3 262.0L1245.0 261.7M1243.8 262.8L1246.5 262.5M1245.3 263.7L1247.9 263.4M1232.6 209.8L1236.6 209.1M1235.0 211.8L1239.0 211.1M1237.3 213.7L1241.2 213.0M1239.5 215.5L1243.4 214.9M1241.7 217.3L1245.6 216.7M1246.0 220.8L1249.8 220.2M1248.0 222.5L1251.8 221.9M1250.0 224.2L1253.7 223.6M1252.0 225.8L1255.7 225.2M1253.9 227.3L1257.5 226.8M1255.7 228.9L1259.4 228.3M1257.6 230.4L1261.2 229.9M1261.1 233.3L1264.7 232.8M1262.8 234.7L1266.3 234.2M1264.5 236.1L1268.0 235.6M1266.1 237.5L1269.6 237.0M1267.8 238.8L1271.2 238.3M1269.3 240.1L1272.7 239.6M1270.9 241.4L1274.3 240.9M1273.9 243.8L1277.2 243.4M1275.3 245.0L1278.6 244.6M1276.8 246.2L1280.0 245.8M1278.2 247.4L1281.4 247.0M1279.5 248.5L1282.8 248.1M1280.9 249.6L1284.1 249.2M1282.2 250.7L1285.4 250.3M1284.8 252.8L1287.9 252.5M1286.0 253.8L1289.1 253.5M1287.3 254.9L1290.3 254.5M1288.5 255.9L1291.5 255.5M1289.7 256.8L1292.7 256.5M1290.8 257.8L1293.8 257.5M1292.0 258.7L1295.0 258.4M1328.2 229.0L1332.2 228.4M1329.2 230.5L1333.2 230.0M1330.2 232.0L1334.2 231.5M1331.3 233.5L1335.2 232.9M1333.2 236.3L1337.1 235.8M1334.2 237.6L1338.0 237.2M1335.1 239.0L1338.9 238.5M1336.0 240.3L1339.7 239.8M1336.9 241.6L1340.6 241.1M1337.8 242.9L1341.4 242.4M1338.6 244.1L1342.3 243.7M1340.3 246.5L1343.9 246.1M1341.1 247.7L1344.6 247.3M1341.9 248.8L1345.4 248.4M1342.6 249.9L1346.1 249.5M1343.4 251.0L1346.9 250.6M1344.2 252.1L1347.6 251.7M1344.9 253.2L1348.3 252.8M1404.6 241.8L1408.6 241.4M1404.8 243.1L1408.8 242.7M1405.0 244.4L1408.9 243.9M1405.1 245.6L1409.1 245.2M1405.3 246.8L1409.2 246.4" stroke="#000" stroke-opacity="0.05" stroke-width="0.5" fill="none"/>
<polygon points="617.3,408.4 690.0,408.0 690.0,431.0 720.6,446.3 620.1,442.2" fill="#7f99c9" />
<polygon points="617.5,410.4 689.0,410.0 689.0,415.8 617.9,416.2" fill="#ffffff" />
<polygon points="611.1,326.3 676.0,330.5 690.0,408.0 617.3,408.4" fill="#7b8ba3" />
<polygon points="672.7,330.4 715.6,331.7 720.6,446.3 687.7,430.0 686.8,408.0" fill="#8797ae" />
<g stroke="#1c2a44" stroke-opacity="0.22" stroke-width="1.1" fill="none"><line x1="631.4" y1="327.6" x2="635.3" y2="408.3" /><line x1="661.4" y1="329.6" x2="666.2" y2="408.1" /><line x1="612.0" y1="335.0" x2="673.5" y2="338.0" /><line x1="614.0" y1="361.0" x2="678.0" y2="362.5" /><line x1="616.0" y1="385.8" x2="682.5" y2="386.0" /><line x1="691.5" y1="331.0" x2="698.5" y2="435.5" /><line x1="702.8" y1="331.3" x2="709.5" y2="441.0" /><line x1="679.0" y1="368.0" x2="717.0" y2="371.0" /><line x1="684.5" y1="400.8" x2="718.5" y2="406.5" /><line x1="618.5" y1="424.0" x2="687.5" y2="421.0" /><line x1="640.0" y1="416.0" x2="660.0" y2="444.0" /></g>
<polygon points="1298.6,446.3 1395.2,450.2 1397.2,464.0 1392.3,463.2 1300.4,452.8" fill="#8ba5cf" />
<polygon points="1309.3,350.2 1407.0,351.0 1400.0,406.5 1307.4,399.6" fill="#7a889d" />
<polygon points="1307.4,399.6 1399.9,406.3 1394.8,450.3 1300.6,446.4" fill="#ffffff" />
<polygon points="1309.3,350.2 1311.6,350.8 1302.4,446.6 1299.3,447.2" fill="#a9bcd9" />
<line x1="1309.3" y1="350.6" x2="1407.0" y2="351.4" stroke="#b4bfd0" stroke-width="1.2"/>
<g stroke="#1c2433" stroke-opacity="0.2" stroke-width="1" fill="none"><line x1="1327.0" y1="352.0" x2="1324.5" y2="401.0" /><line x1="1346.0" y1="352.0" x2="1343.0" y2="402.5" /><line x1="1364.5" y1="352.0" x2="1361.5" y2="403.5" /><line x1="1383.0" y1="352.0" x2="1380.0" y2="405.0" /><line x1="1310.0" y1="362.0" x2="1405.0" y2="364.0" /><line x1="1309.5" y1="374.5" x2="1404.0" y2="377.0" /><line x1="1308.5" y1="387.0" x2="1402.5" y2="390.0" /></g>
<line x1="1300.0" y1="451.5" x2="1393.5" y2="456.5" stroke="#5a6f94" stroke-opacity="0.5" stroke-width="1"/>
</svg>
<div class="tab" style="left:387px;top:93px;width:98px;height:23px"></div>
<div class="abs" style="left:387px;top:92px;width:98px;height:3px;background:#2c6496;border-radius:3px 3px 0 0"></div>
<svg class="abs" style="left:397px;top:97px" width="15" height="15" viewBox="0 0 15 15"><path d="M3.5 2V13M11.5 2V13M7.5 0.8V14.2M2 3.5H13M2 11.5H13M0.8 7.5H14.2" stroke="#c4c4c4" stroke-width="1.15"/></svg>
<span class="t ut" style="left:417px;top:97px" id="scene">Scene</span>
<svg class="abs" style="left:494px;top:101px" width="18" height="9" viewBox="0 0 18 9"><path d="M4.4 0.2H13.6A4.3 4.3 0 0 1 13.6 8.8C12.4 8.8 11.6 8.2 11 7.6H7C6.4 8.2 5.6 8.8 4.4 8.8A4.3 4.3 0 0 1 4.4 0.2Z" fill="#c4c4c4"/><path d="M2.6 4.5H6.4M4.5 2.6V6.4" stroke="#282828" stroke-width="1.2"/><circle cx="12" cy="5.6" r="1" fill="#282828"/><circle cx="14.4" cy="3.2" r="1" fill="#282828"/></svg>
<span class="t ut" style="left:515px;top:97px;color:#c4c4c4" id="game">Game</span>
<svg class="abs" style="left:1595px;top:97px" width="4" height="14" viewBox="0 0 4 14"><circle cx="2" cy="2" r="1.5" fill="#c4c4c4"/><circle cx="2" cy="7" r="1.5" fill="#c4c4c4"/><circle cx="2" cy="12" r="1.5" fill="#c4c4c4"/></svg>
<div class="abs" style="left:395px;top:122px;width:1px;height:20px;background:#5a5a5a"></div><div class="abs" style="left:399px;top:122px;width:1px;height:20px;background:#5a5a5a"></div>
<div class="sb" style="left:407px;width:82px;"></div>
<svg class="abs" style="left:411px;top:123px" width="20" height="20" viewBox="0 0 20 20"><rect x="1.5" y="1" width="16.5" height="16.5" rx="2" fill="none" stroke="#c4c4c4" stroke-width="1.2"/><path d="M6 14L15 5" stroke="#c4c4c4" stroke-width="1.2"/><circle cx="4" cy="15" r="2.6" fill="#585858" stroke="#e8622c" stroke-width="1.5"/></svg>
<span class="t ut" style="left:431px;top:125px" id="pivot">Pivot</span>
<svg class="abs" style="left:471px;top:129px" width="11" height="7" viewBox="0 0 11 7"><path d="M0.5 0.5H10.5L5.5 6.5Z" fill="#c4c4c4"/></svg>
<div class="sb" style="left:493px;width:90px;"></div>
<svg class="abs" style="left:497px;top:123px" width="20" height="20" viewBox="0 0 20 20"><circle cx="9" cy="9" r="7.8" fill="none" stroke="#c4c4c4" stroke-width="1.2"/><ellipse cx="9" cy="9" rx="3.4" ry="7.8" fill="none" stroke="#c4c4c4" stroke-width="1.1"/><path d="M1.5 6.5H16.5M1.5 11.5H16.5" stroke="#c4c4c4" stroke-width="1.1"/><circle cx="14.5" cy="14.5" r="3.4" fill="#585858"/><circle cx="14.5" cy="14.5" r="2.6" fill="none" stroke="#e8622c" stroke-width="1.5"/></svg>
<span class="t ut" style="left:517px;top:125px" id="global">Global</span>
<svg class="abs" style="left:566px;top:129px" width="11" height="7" viewBox="0 0 11 7"><path d="M0.5 0.5H10.5L5.5 6.5Z" fill="#c4c4c4"/></svg>
<div class="abs" style="left:595px;top:122px;width:1px;height:20px;background:#5a5a5a"></div><div class="abs" style="left:599px;top:122px;width:1px;height:20px;background:#5a5a5a"></div>
<div class="sb on" style="left:607px;width:28px;border-radius:3px 0 0 3px"></div>
<div class="sb on" style="left:636px;width:17px;border-radius:0 3px 3px 0"></div>
<svg class="abs" style="left:611px;top:122px" width="22" height="22" viewBox="0 0 22 22"><path d="M6 2V17M12 2V11M2 6H17M2 12H11M2 16H9" stroke="#e6e6e6" stroke-width="1.3" fill="none"/><path d="M12.5 11.5L19 19.5M19 11.5L12.5 19.5" stroke="#f0f0f0" stroke-width="2.1"/></svg>
<svg class="abs" style="left:639px;top:129px" width="11" height="7" viewBox="0 0 11 7"><path d="M0.5 0.5H10.5L5.5 6.5Z" fill="#d8d8d8"/></svg>
<div class="sb" style="left:657px;width:28px;border-radius:3px 0 0 3px"></div>
<div class="sb" style="left:686px;width:17px;border-radius:0 3px 3px 0"></div>
<svg class="abs" style="left:661px;top:122px" width="22" height="22" viewBox="0 0 22 22"><path d="M6 2V17M11 2V10M16 2V9M2 6H17M2 11H9M2 16H7" stroke="#c4c4c4" stroke-width="1.2" fill="none"/><path d="M11 12.5H15A3 3 0 0 1 15 18.5H11" fill="none" stroke="#ee5a24" stroke-width="2.4"/><rect x="9.2" y="11.2" width="2.6" height="2.6" fill="#fff"/><rect x="9.2" y="17.2" width="2.6" height="2.6" fill="#fff"/></svg>
<svg class="abs" style="left:689px;top:129px" width="11" height="7" viewBox="0 0 11 7"><path d="M0.5 0.5H10.5L5.5 6.5Z" fill="#c4c4c4"/></svg>
<div class="sb" style="left:707px;width:46px;"></div>
<svg class="abs" style="left:711px;top:122px" width="20" height="20" viewBox="0 0 20 20"><path d="M1.5 2V18M17.5 2V18" stroke="#c4c4c4" stroke-width="1.1"/><path d="M5.5 6V14M9.5 4V15M13.5 6V14" stroke="#c4c4c4" stroke-width="1.1"/><path d="M1.5 10H17.5" stroke="#c4c4c4" stroke-width="1.1"/></svg>
<svg class="abs" style="left:735px;top:129px" width="11" height="7" viewBox="0 0 11 7"><path d="M0.5 0.5H10.5L5.5 6.5Z" fill="#c4c4c4"/></svg>
<div class="abs" style="left:1156px;top:122px;width:1px;height:20px;background:#5a5a5a"></div><div class="abs" style="left:1160px;top:122px;width:1px;height:20px;background:#5a5a5a"></div>
<div class="abs" style="left:1170px;top:121px;width:44px;height:22px;background:#515151;border:1px solid #303030;border-radius:3px"></div>
<svg class="abs" style="left:1173px;top:123px" width="19" height="19" viewBox="0 0 19 19"><circle cx="9.5" cy="9.5" r="8.3" fill="none" stroke="#c4c4c4" stroke-width="1.2"/><path d="M4.5 15L9 8L11.5 10.5Z" fill="#c4c4c4"/><path d="M15 4L9 8L11.5 10.5Z" fill="none" stroke="#c4c4c4" stroke-width="1"/></svg>
<svg class="abs" style="left:1196px;top:129px" width="11" height="7" viewBox="0 0 11 7"><path d="M0.5 0.5H10.5L5.5 6.5Z" fill="#c4c4c4"/></svg>
<div class="abs" style="left:1227px;top:122px;width:1px;height:20px;background:#5a5a5a"></div><div class="abs" style="left:1231px;top:122px;width:1px;height:20px;background:#5a5a5a"></div>
<div class="sb" style="left:1239px;width:45px;"></div>
<svg class="abs" style="left:1243px;top:123px" width="19" height="19" viewBox="0 0 19 19"><circle cx="9.5" cy="9.5" r="8.6" fill="#c4c4c4"/><circle cx="8.2" cy="8.2" r="6.5" fill="#585858"/><circle cx="9.5" cy="9.5" r="8.3" fill="none" stroke="#c4c4c4" stroke-width="1.2"/></svg>
<svg class="abs" style="left:1266px;top:129px" width="11" height="7" viewBox="0 0 11 7"><path d="M0.5 0.5H10.5L5.5 6.5Z" fill="#c4c4c4"/></svg>
<div class="sb" style="left:1288px;width:40px;"></div>
<span class="t ut" style="left:1299px;top:126px;font-size:14px;letter-spacing:-0.5px;-webkit-text-stroke:0.35px #d2d2d2" id="twod">2D</span>
<div class="sb on" style="left:1332px;width:40px;"></div>
<svg class="abs" style="left:1344px;top:123px" width="16" height="19" viewBox="0 0 16 19"><circle cx="8" cy="6.8" r="5" fill="#f0f0f0"/><rect x="5.4" y="10" width="5.2" height="2.6" fill="#f0f0f0"/><path d="M5.2 13.6H10.8L8 16.6Z" fill="#f0f0f0"/></svg>
<div class="sb" style="left:1376px;width:40px;"></div>
<svg class="abs" style="left:1388px;top:124px" width="20" height="18" viewBox="0 0 20 18"><rect x="0.5" y="3" width="2" height="7" fill="#a4a4a4"/><path d="M3.8 3.5L8.6 0.8V12.2L3.8 9.5Z" fill="#a4a4a4"/><path d="M9.5 9.5L14 14.5M14 9.5L9.5 14.5" stroke="#d0d0d0" stroke-width="1.3"/></svg>
<div class="sb on" style="left:1420px;width:28px;border-radius:3px 0 0 3px"></div>
<div class="sb on" style="left:1449.5px;width:17px;border-radius:0 3px 3px 0"></div>
<svg class="abs" style="left:1425px;top:123px" width="19" height="19" viewBox="0 0 19 19"><path d="M1 12.3L6.5 9.5L11.5 12.2L17 11L9.2 15.6Z" fill="#f0f0f0"/><path d="M1 8.3L6 5.8L9 8.5L13.5 9.8L9.2 12.2Z" fill="#f0f0f0"/><path d="M12 0.5L13.3 4.2L17 5.5L13.3 6.8L12 10.5L10.7 6.8L7 5.5L10.7 4.2Z" fill="#f0f0f0"/></svg>
<svg class="abs" style="left:1453px;top:129px" width="11" height="7" viewBox="0 0 11 7"><path d="M0.5 0.5H10.5L5.5 6.5Z" fill="#c8c8c8"/></svg>
<div class="sb on" style="left:1470px;width:40px;"></div>
<svg class="abs" style="left:1479px;top:123px" width="22" height="19" viewBox="0 0 22 19"><path d="M1.5 9.5C5 4.3 17 4.3 20.5 9.5C17 14.7 5 14.7 1.5 9.5Z" fill="none" stroke="#f0f0f0" stroke-width="1.4"/><path d="M8.5 11.5A3.2 3.2 0 0 0 13.5 8" fill="none" stroke="#f0f0f0" stroke-width="1.3"/><path d="M4.5 17L17.5 2" stroke="#f0f0f0" stroke-width="1.6"/></svg>
<div class="sb" style="left:1514px;width:46px;"></div>
<svg class="abs" style="left:1520px;top:126px" width="18" height="13" viewBox="0 0 18 13"><rect x="0.5" y="1.2" width="9" height="10.6" fill="#b8b8b8"/><path d="M11.8 4L15.6 1.2V11.8L11.8 9Z" fill="#b8b8b8"/></svg>
<svg class="abs" style="left:1542px;top:129px" width="11" height="7" viewBox="0 0 11 7"><path d="M0.5 0.5H10.5L5.5 6.5Z" fill="#c4c4c4"/></svg>
<div class="sb on" style="left:1564px;width:27px;border-radius:3px 0 0 3px"></div>
<div class="sb on" style="left:1592.5px;width:18px;border-radius:0 3px 3px 0"></div>
<svg class="abs" style="left:1567px;top:122px" width="22" height="22" viewBox="0 0 22 22"><circle cx="11" cy="11" r="8.4" fill="none" stroke="#f0f0f0" stroke-width="1.5"/><path d="M11 2.6C7 6 7 16 11 19.4M2.6 11C6 14.5 16 14.5 19.4 11M11 2.6L15 12.8" fill="none" stroke="#f0f0f0" stroke-width="1.4"/><circle cx="11" cy="2.8" r="1.9" fill="#f0f0f0"/><circle cx="2.9" cy="10.6" r="1.9" fill="#f0f0f0"/><circle cx="15" cy="12.8" r="1.9" fill="#f0f0f0"/></svg>
<svg class="abs" style="left:1596px;top:129px" width="11" height="7" viewBox="0 0 11 7"><path d="M0.5 0.5H10.5L5.5 6.5Z" fill="#c8c8c8"/></svg>
<div class="abs" style="left:390px;top:152px;width:48px;height:181px;background:#2f3133;border-radius:4px;border:1px solid #222"></div>
<div class="abs" style="left:404px;top:160px;width:20px;height:1px;background:#5c5c5c"></div><div class="abs" style="left:404px;top:164px;width:20px;height:1px;background:#5c5c5c"></div>
<div class="abs" style="left:394px;top:174px;width:40px;height:25px;background:#585858;border-radius:3px 3px 0 0"></div>
<div class="abs" style="left:394px;top:200px;width:40px;height:25px;background:#46607c;border-radius:0"></div>
<div class="abs" style="left:394px;top:226px;width:40px;height:25px;background:#585858;border-radius:0"></div>
<div class="abs" style="left:394px;top:252px;width:40px;height:25px;background:#585858;border-radius:0"></div>
<div class="abs" style="left:394px;top:278px;width:40px;height:25px;background:#585858;border-radius:0"></div>
<div class="abs" style="left:394px;top:304px;width:40px;height:25px;background:#585858;border-radius:0 0 3px 3px"></div>
<svg class="abs" style="left:405px;top:176px" width="19" height="21" viewBox="0 0 19 21"><path d="M5.2 20C3.6 16.5 2 14.2 0.6 12.2C0 11.2 1.4 10.2 2.4 11.2L4.4 13.2L3.6 3.4C3.5 2 5.3 1.8 5.6 3.2L6.8 9.6L7 1.6C7 0.2 9 0.2 9.1 1.6L9.6 9.4L11.3 2.2C11.6 0.9 13.5 1.3 13.3 2.7L12.3 10L14.8 5C15.5 3.8 17.2 4.6 16.7 6L14.3 13.5C13.8 16 13.3 18 12.6 20Z" fill="#c8c8c8"/></svg>
<svg class="abs" style="left:403px;top:202px" width="22" height="21" viewBox="0 0 22 21"><path d="M11 2V19M2.5 10.5H19.5" stroke="#e8e8e8" stroke-width="1.3"/><path d="M8.2 4.8L11 1.8L13.8 4.8M8.2 16.2L11 19.2L13.8 16.2M5.2 7.7L2.2 10.5L5.2 13.3M16.8 7.7L19.8 10.5L16.8 13.3" fill="none" stroke="#e8e8e8" stroke-width="1.3"/><rect x="9.6" y="9.1" width="2.8" height="2.8" fill="#46607c"/></svg>
<svg class="abs" style="left:404px;top:228px" width="20" height="21" viewBox="0 0 20 21"><path d="M9.5 3.2A7.3 7.3 0 0 0 5.2 16.6" fill="none" stroke="#bdbdbd" stroke-width="1.3"/><path d="M10.5 17.8A7.3 7.3 0 0 0 14.8 4.4" fill="none" stroke="#bdbdbd" stroke-width="1.3"/><path d="M2.2 16.8H5.6V13.2" fill="none" stroke="#bdbdbd" stroke-width="1.3"/><path d="M17.8 4.2H14.4V7.8" fill="none" stroke="#bdbdbd" stroke-width="1.3"/></svg>
<svg class="abs" style="left:404px;top:254px" width="20" height="21" viewBox="0 0 20 21"><rect x="1.6" y="2.2" width="16.8" height="16.8" rx="1.5" fill="none" stroke="#bdbdbd" stroke-width="1.2"/><path d="M1.6 12.8H7.8V19" fill="none" stroke="#bdbdbd" stroke-width="1.2"/><path d="M9.5 11.2L15 5.6M10.8 5.4H15.2V9.8" fill="none" stroke="#bdbdbd" stroke-width="1.2"/></svg>
<svg class="abs" style="left:404px;top:280px" width="20" height="21" viewBox="0 0 20 21"><path d="M3.5 6V15M16.5 6V15M6 3.5H14M6 17.5H14" stroke="#d8d8d8" stroke-width="1.3"/><rect x="1.6" y="1.6" width="3.8" height="3.8" fill="#d8d8d8"/><rect x="14.6" y="1.6" width="3.8" height="3.8" fill="#d8d8d8"/><rect x="1.6" y="15.6" width="3.8" height="3.8" fill="#d8d8d8"/><rect x="14.6" y="15.6" width="3.8" height="3.8" fill="#d8d8d8"/></svg>
<svg class="abs" style="left:403px;top:305px" width="22" height="23" viewBox="0 0 22 23"><circle cx="11" cy="12" r="7.6" fill="none" stroke="#bdbdbd" stroke-width="1.2" stroke-dasharray="9.5 2.4" stroke-dashoffset="4.7"/><path d="M11 6.5V17.5M5.5 12H16.5" stroke="#bdbdbd" stroke-width="1.2"/><path d="M9.2 8L11 6L12.8 8M9.2 16L11 18L12.8 16M7 10.2L5 12L7 13.8M15 10.2L17 12L15 13.8" fill="none" stroke="#bdbdbd" stroke-width="1.1"/><path d="M17.5 1.5H21V5Z M1 19V22.5H4.5Z" fill="#bdbdbd"/></svg>
<div class="abs" style="left:919px;top:162px;width:157px;height:28px;background:#222;border-radius:4px"></div>
<div class="abs" style="left:920px;top:163px;width:38.5px;height:26px;background:#46607c;border-radius:3px 0 0 3px"></div>
<div class="abs" style="left:959.5px;top:163px;width:36.5px;height:26px;background:#585858;border-radius:0"></div>
<div class="abs" style="left:997px;top:163px;width:38.5px;height:26px;background:#585858;border-radius:0"></div>
<div class="abs" style="left:1036.5px;top:163px;width:38.5px;height:26px;background:#585858;border-radius:0 3px 3px 0"></div>
<svg class="abs" style="left:927px;top:165px" width="22" height="22" viewBox="0 0 22 22"><path d="M11 1.6L19.4 6.3V15.7L11 20.4L2.6 15.7V6.3Z" fill="none" stroke="#ffb454" stroke-width="1.4"/><path d="M2.8 6.4L11 11L19.2 6.4M11 11V20.2" fill="none" stroke="#c8c8c8" stroke-width="1.2"/></svg>
<svg class="abs" style="left:965px;top:166px" width="20" height="20" viewBox="0 0 20 20"><path d="M6 3.5H14M6 16.5H14M3.5 6V14M16.5 6V14" stroke="#d0d0d0" stroke-width="1.5" stroke-dasharray="5.5 20"/><path d="M7 3.5H13M7 16.5H13M3.5 7V13M16.5 7V13" stroke="#d0d0d0" stroke-width="1.5"/><circle cx="3.5" cy="3.5" r="2.1" fill="#ffb454"/><circle cx="16.5" cy="3.5" r="2.1" fill="#ffb454"/><circle cx="3.5" cy="16.5" r="2.1" fill="#ffb454"/><circle cx="16.5" cy="16.5" r="2.1" fill="#ffb454"/></svg>
<svg class="abs" style="left:1003px;top:165px" width="22" height="22" viewBox="0 0 22 22"><path d="M11 1.6L19.4 6.3V15.7L11 20.4L2.6 15.7V6.3Z" fill="none" stroke="#c8c8c8" stroke-width="1.3"/><path d="M2.8 6.4L11 11L19.2 6.4M11 11V20.2" fill="none" stroke="#ffb454" stroke-width="1.4"/></svg>
<svg class="abs" style="left:1043px;top:165px" width="22" height="22" viewBox="0 0 22 22"><path d="M11 1.6L19.4 6.3V15.7L11 20.4L2.6 15.7V6.3Z" fill="none" stroke="#c8c8c8" stroke-width="1.3"/><path d="M3 6.6L11 11V20L3 15.5Z" fill="#ffb454"/></svg>
<div class="abs" style="left:1480px;top:160px;width:20px;height:1px;background:#555"></div><div class="abs" style="left:1480px;top:163px;width:20px;height:1px;background:#555"></div>
<svg class="abs" style="left:1500px;top:158px" width="100" height="132" viewBox="1500 158 100 132">
<defs><linearGradient id="gzl" x1="0" x2="1"><stop offset="0" stop-color="#d8d8d8"/><stop offset="1" stop-color="#6e6e6e"/></linearGradient>
<linearGradient id="gzr" x1="0" x2="1"><stop offset="0" stop-color="#707070"/><stop offset="1" stop-color="#c4c4c4"/></linearGradient>
<linearGradient id="gzb" x1="0" x2="1"><stop offset="0" stop-color="#d0d0d0"/><stop offset="0.5" stop-color="#ffffff"/><stop offset="1" stop-color="#c8c8c8"/></linearGradient>
<linearGradient id="gzg" x1="0" x2="1"><stop offset="0" stop-color="#8fe03c"/><stop offset="1" stop-color="#6fbf2a"/></linearGradient></defs>
<text x="1543.7" y="172.5" font-family="Liberation Sans" font-size="13" font-weight="bold" fill="#f2f2f2" text-anchor="middle">y</text>
<path d="M1537 177.5H1552.4L1544 202Z" fill="url(#gzg)"/>
<path d="M1522 205.5C1526 203.5 1530 205 1533.5 210.5V213Z" fill="#3b78f0"/>
<path d="M1555 210.5C1558 205 1562 203 1566 206L1555 213.5Z" fill="#ee4a28"/>
<text x="1512" y="212" font-family="Liberation Sans" font-size="10" font-weight="bold" fill="#f2f2f2">z</text>
<text x="1568" y="212" font-family="Liberation Sans" font-size="10" font-weight="bold" fill="#f2f2f2">x</text>
<path d="M1534.6 214.5L1514 207.5C1509 208 1507.5 224 1514 227Z" fill="url(#gzl)"/>
<ellipse cx="1513" cy="217.2" rx="4.3" ry="10" fill="#d4d4d4"/>
<path d="M1554.6 214.5L1575.5 207.5C1581 209 1581.5 224 1575.5 227Z" fill="url(#gzr)"/>
<ellipse cx="1576" cy="217.2" rx="4.2" ry="10" fill="#c6c6c6"/>
<path d="M1533 205.2H1554.6V221L1544 223L1533 221Z" fill="#c9c9c9"/>
<path d="M1533 205.2H1554.6L1544 207Z" fill="#b4b4b4"/>
<path d="M1544 207V223" stroke="#bdbdbd" stroke-width="0.8"/>
<path d="M1544 225L1551.2 246C1549 248.5 1539 248.5 1536.8 246Z" fill="url(#gzb)"/>
<path d="M1513 277.7L1526.5 271.5M1513 277.7L1526.5 283.7M1513 277.7H1525" stroke="#c6cad0" stroke-width="1" fill="none"/>
</svg>
<span class="t" style="left:1529px;top:270px;font-size:15px;color:#c6cad0" id="persp">Persp</span>
<svg class="abs" style="left:1580px;top:168px" width="10" height="12" viewBox="0 0 10 12"><rect x="0.5" y="5" width="9" height="6.5" fill="#c8c8c8"/><path d="M6 5V3A2 2 0 0 1 9.3 2" fill="none" stroke="#c8c8c8" stroke-width="1.3"/></svg>
</div>
<!-- INSPECTOR -->
<div id="inspector">
<div class="tabrow" style="left:1616px;top:92px;width:292px;height:24px;border-radius:4px 4px 0 0"></div>
<div class="panel" style="left:1616px;top:116px;width:292px;height:886px"></div>
<div class="tab" style="left:1616px;top:93px;width:119px;height:23px"></div>
<svg class="abs" style="left:1627px;top:98px" width="13" height="13" viewBox="0 0 13 13"><circle cx="6.5" cy="6.5" r="6.2" fill="#d2d2d2"/><rect x="5.4" y="5.4" width="2.2" height="5" fill="#3c3c3c"/><circle cx="6.5" cy="3.4" r="1.3" fill="#3c3c3c"/></svg>
<span class="t ut" style="left:1646px;top:97px" id="insp">Inspector</span>
<svg class="abs" style="left:1863px;top:96px" width="12" height="13" viewBox="0 0 12 13"><rect x="1" y="6.5" width="10" height="5.5" fill="none" stroke="#c4c4c4" stroke-width="1.4"/><path d="M7 6.5 V3.5 A2 2 0 0 1 10.6 3" fill="none" stroke="#c4c4c4" stroke-width="1.4"/></svg>
<svg class="abs" style="left:1889px;top:97px" width="4" height="14" viewBox="0 0 4 14"><circle cx="2" cy="2" r="1.5" fill="#c4c4c4"/><circle cx="2" cy="7" r="1.5" fill="#c4c4c4"/><circle cx="2" cy="12" r="1.5" fill="#c4c4c4"/></svg>
</div>
<!-- BOTTOM DOCK -->
<div id="bottomdock">
<div class="tabrow" style="left:0;top:683px;width:1614px;height:24px;border-radius:0 4px 0 0"></div>
<div class="panel" style="left:0;top:707px;width:1614px;height:295px"></div>
<div class="tab" style="left:92px;top:684px;width:109px;height:23px"></div>
<svg class="abs" style="left:-3px;top:689px" width="16" height="13" viewBox="0 0 16 13"><path d="M0 1 H6 L7.5 2.8 H15.5 V12.5 H0Z" fill="#c4c4c4"/></svg>
<span class="t ut" style="left:17px;top:688px;color:#c4c4c4" id="proj">Project</span>
<svg class="abs" style="left:102px;top:689px" width="14" height="13" viewBox="0 0 14 13"><rect x="0.5" y="0.5" width="13" height="12" rx="1" fill="#c4c4c4"/><path d="M2.5 3.5H11.5 M2.5 6.5H11.5 M2.5 9.5H11.5" stroke="#3c3c3c" stroke-width="1.3"/></svg>
<span class="t ut" style="left:121px;top:688px" id="cons">Console</span>
<svg class="abs" style="left:1595px;top:687px" width="4" height="14" viewBox="0 0 4 14"><circle cx="2" cy="2" r="1.5" fill="#c4c4c4"/><circle cx="2" cy="7" r="1.5" fill="#c4c4c4"/><circle cx="2" cy="12" r="1.5" fill="#c4c4c4"/></svg>
<!-- console toolbar -->
<div class="abs" style="left:0;top:707px;width:1614px;height:26px;background:#3c3c3c;border-bottom:1px solid #232323"></div>
<div class="abs" style="left:39px;top:712px;width:1px;height:16px;background:#2c2c2c"></div>
<div class="abs" style="left:60px;top:707px;width:1px;height:25px;background:#2a2a2a"></div>
<div class="abs" style="left:136px;top:707px;width:1px;height:25px;background:#2a2a2a"></div>
<div class="abs" style="left:231px;top:707px;width:1px;height:25px;background:#2a2a2a"></div>
<div class="abs" style="left:296px;top:707px;width:1px;height:25px;background:#2a2a2a"></div>
<span class="t ut" style="left:-9px;top:713px;color:#c4c4c4" id="clear">Clear</span>
<svg class="abs" style="left:45px;top:716px" width="10" height="6" viewBox="0 0 10 6"><path d="M0.5 0.3 H9.5 L5 5.7Z" fill="#c4c4c4"/></svg>
<span class="t ut" style="left:66px;top:713px;color:#c4c4c4" id="coll">Collapse</span>
<span class="t ut" style="left:144px;top:713px;color:#c4c4c4" id="errp">Error Pause</span>
<span class="t ut" style="left:236px;top:713px;color:#c4c4c4" id="edit">Editor</span>
<svg class="abs" style="left:281px;top:716px" width="10" height="6" viewBox="0 0 10 6"><path d="M0.5 0.3 H9.5 L5 5.7Z" fill="#c4c4c4"/></svg>
<!-- search -->
<div class="abs" style="left:1108px;top:710px;width:375px;height:20px;background:#282828;border:1px solid #1c1c1c;border-radius:3px"></div>
<svg class="abs" style="left:1113px;top:715px" width="11" height="11" viewBox="0 0 11 11"><circle cx="4" cy="4" r="2.8" fill="none" stroke="#c4c4c4" stroke-width="1.4"/><path d="M6.2 6.2 L9.8 9.8" stroke="#c4c4c4" stroke-width="1.8"/></svg>
<!-- counters -->
<div class="abs" style="left:1486px;top:707px;width:42px;height:25px;background:#4f4f4f"></div>
<div class="abs" style="left:1529px;top:707px;width:41px;height:25px;background:#4f4f4f"></div>
<div class="abs" style="left:1571px;top:707px;width:42px;height:25px;background:#4f4f4f"></div>
<svg class="abs" style="left:1492px;top:711px" width="17" height="18" viewBox="0 0 17 18"><path d="M8.5 0.5 A8 8 0 1 1 5 15.2 L3.5 17.5 L3 13.8 A8 8 0 0 1 8.5 0.5Z" fill="#8a8a8a"/><rect x="7.4" y="3.5" width="2.2" height="7" fill="#4f4f4f"/><rect x="7.4" y="11.6" width="2.2" height="2.2" fill="#4f4f4f"/></svg>
<span class="t ut" style="left:1513px;top:713px;color:#c4c4c4">0</span>
<svg class="abs" style="left:1535px;top:711px" width="17" height="17" viewBox="0 0 17 17"><path d="M8.5 0.8 L16.5 15.8 H0.5Z" fill="#8a8a8a"/><rect x="7.5" y="5.5" width="2" height="6" fill="#4f4f4f"/><rect x="7.5" y="12.5" width="2" height="2" fill="#4f4f4f"/></svg>
<span class="t ut" style="left:1556px;top:713px;color:#c4c4c4">0</span>
<svg class="abs" style="left:1577px;top:711px" width="17" height="17" viewBox="0 0 17 17"><path d="M5.2 0.5 H11.8 L16.5 5.2 V11.8 L11.8 16.5 H5.2 L0.5 11.8 V5.2Z" fill="#e4e4e4"/><rect x="7.4" y="3.5" width="2.2" height="7" fill="#4f4f4f"/><rect x="7.4" y="11.6" width="2.2" height="2.2" fill="#4f4f4f"/></svg>
<span class="t ut" style="left:1598px;top:713px;color:#c4c4c4">0</span>
<!-- split line in console -->
<div class="abs" style="left:0;top:921px;width:1614px;height:1px;background:#262626"></div>
<!-- status bar icons (cut off) -->
<svg class="abs" style="left:1770px;top:1004px" width="138" height="7" viewBox="1770 1004 138 7"><path d="M1776.5 1005V1011M1810 1005V1011M1843.5 1005V1011M1875.8 1005V1011" stroke="#2b2b2b" stroke-width="1"/><path d="M1785.5 1008.8L1789.5 1011.5M1797.5 1008.8L1793.5 1011.5" stroke="#c4c4c4" stroke-width="1.3"/><path d="M1818 1012A7 3.6 0 0 1 1832 1012Z" fill="#c4c4c4"/><path d="M1852 1011.5V1009.5M1855.5 1012A3.6 3 0 0 1 1862.7 1012M1866 1011.5V1009.5M1853 1009L1856 1010.5M1865 1009L1862 1010.5" stroke="#c4c4c4" stroke-width="1.2" fill="none"/><path d="M1886.5 1012A4.6 3.2 0 0 1 1895.7 1012" stroke="#c4c4c4" stroke-width="1.3" fill="none"/></svg>
</div>
</body>
</html>
